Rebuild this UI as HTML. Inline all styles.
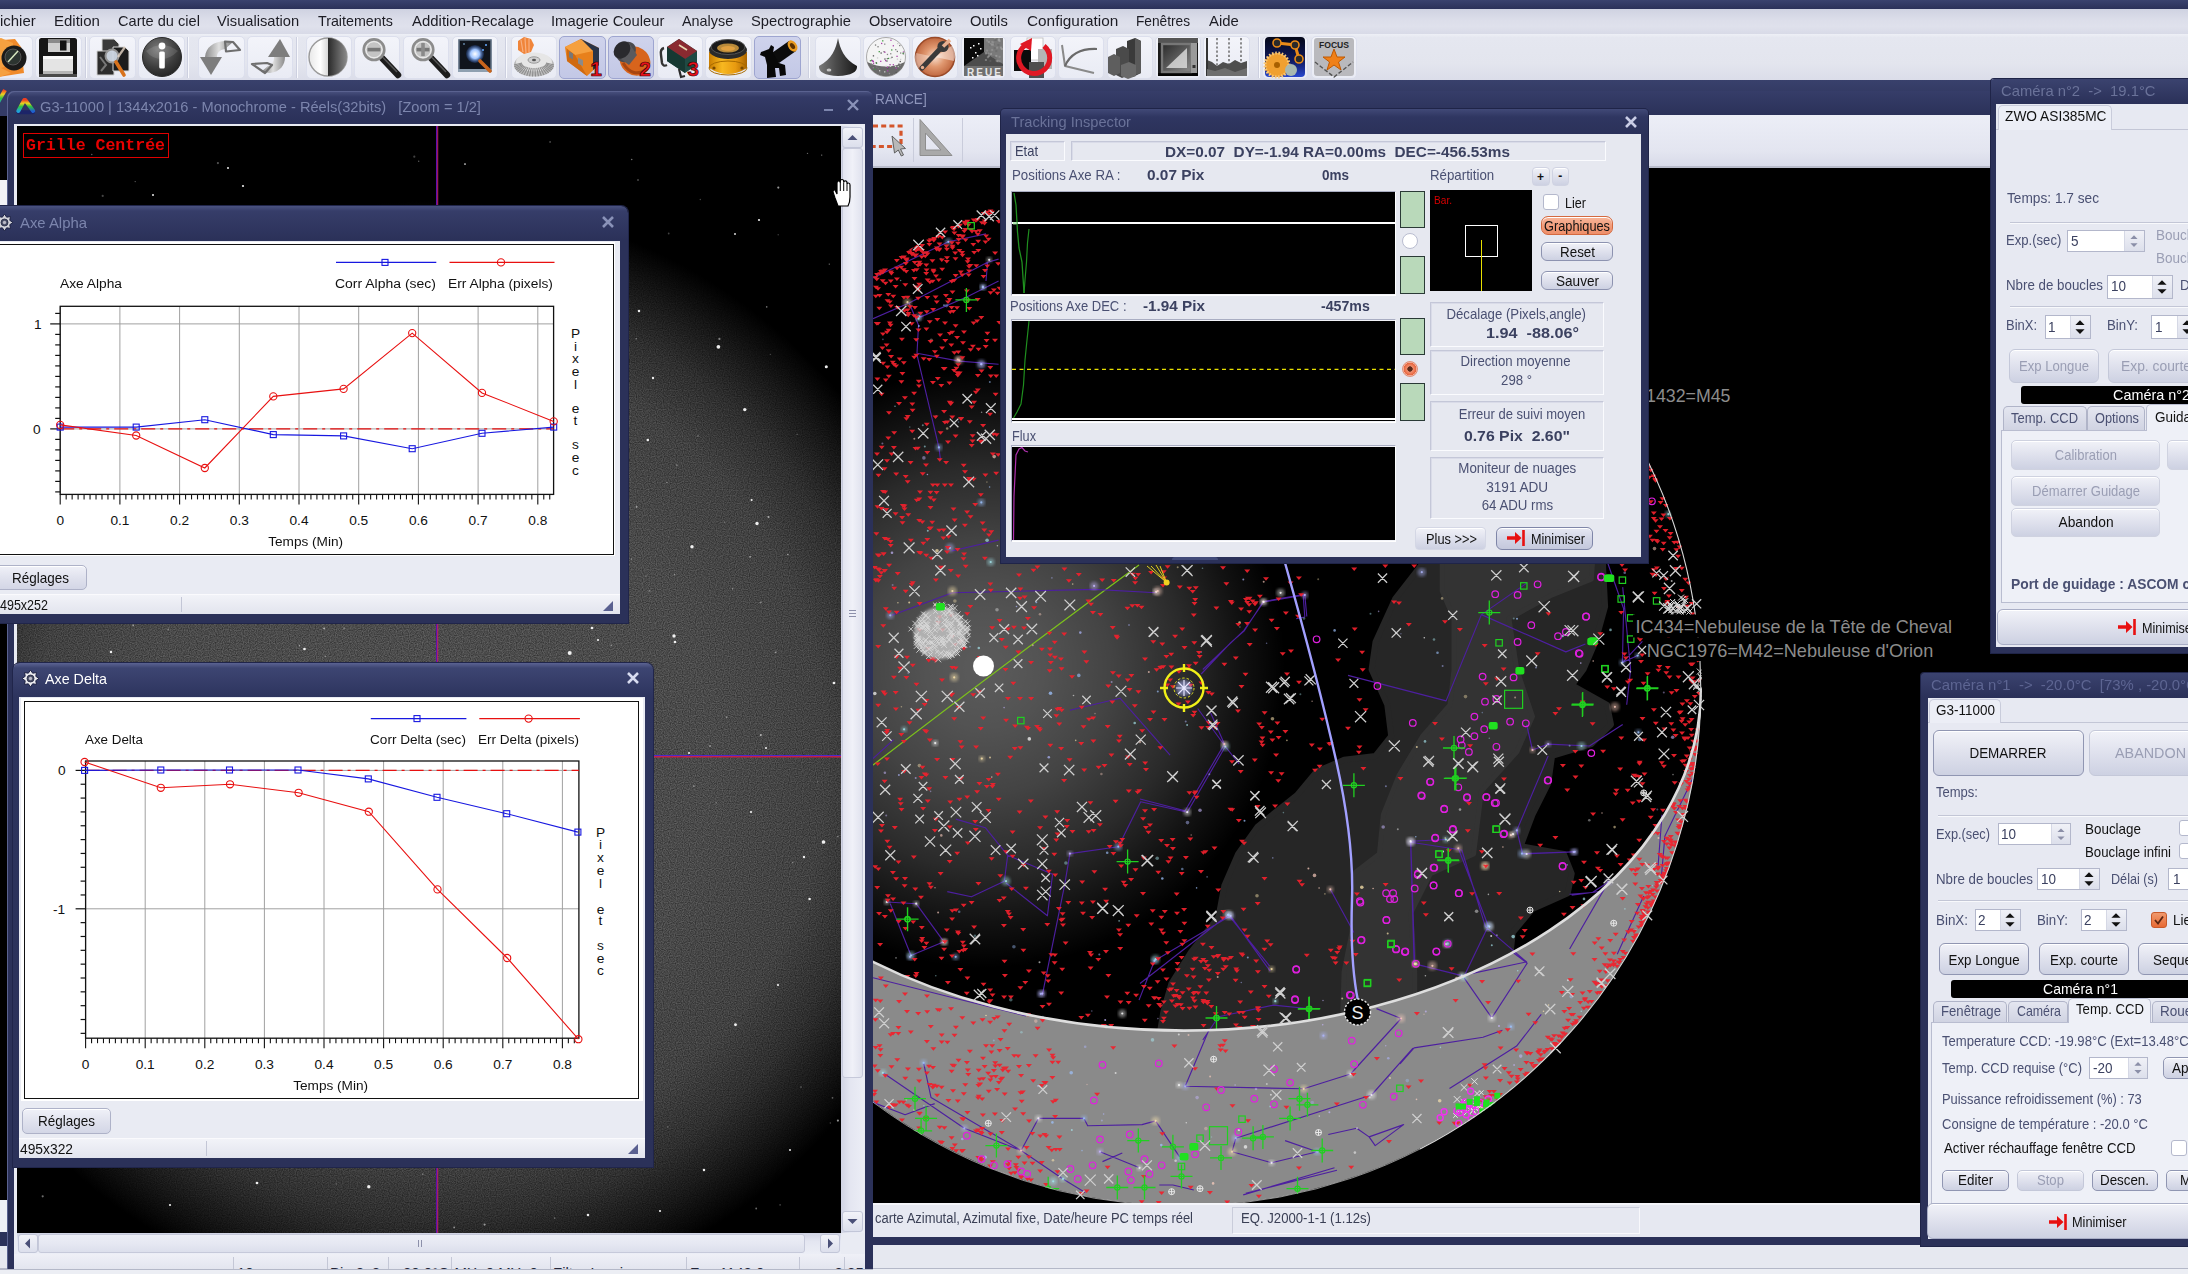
<!DOCTYPE html>
<html><head><meta charset="utf-8"><title>Prism</title><style>
html,body{margin:0;padding:0;}
html{overflow:hidden;width:2188px;height:1274px;}
body{width:2188px;height:1274px;overflow:hidden;background:#2b3159;font-family:"Liberation Sans",sans-serif;position:relative;}
.a{position:absolute;box-sizing:border-box;}
.t{position:absolute;white-space:pre;line-height:1.15;display:inline-block;}
svg{position:absolute;overflow:hidden;}
</style></head><body>
<!-- p_base -->
<div class="a" style="left:0px;top:0px;width:2188px;height:9px;background:linear-gradient(#3a426e,#2b3159);"></div>
<div class="a" style="left:0px;top:9px;width:2188px;height:25px;background:linear-gradient(#cfd2e1,#dcdeea 45%,#dfe1ec 70%,#d8dae7);"></div>
<span class="t" style="left:0px;top:11.5px;font-size:15px;color:#1c1c24;transform-origin:0 0;transform:scaleX(0.9959);">ichier</span>
<span class="t" style="left:53.5px;top:11.5px;font-size:15px;color:#1c1c24;transform-origin:0 0;transform:scaleX(1.0007);">Edition</span>
<span class="t" style="left:117.6px;top:11.5px;font-size:15px;color:#1c1c24;transform-origin:0 0;transform:scaleX(0.9725);">Carte du ciel</span>
<span class="t" style="left:217px;top:11.5px;font-size:15px;color:#1c1c24;transform-origin:0 0;transform:scaleX(0.9792);">Visualisation</span>
<span class="t" style="left:318px;top:11.5px;font-size:15px;color:#1c1c24;transform-origin:0 0;transform:scaleX(0.9511);">Traitements</span>
<span class="t" style="left:411.5px;top:11.5px;font-size:15px;color:#1c1c24;transform-origin:0 0;transform:scaleX(0.9952);">Addition-Recalage</span>
<span class="t" style="left:551px;top:11.5px;font-size:15px;color:#1c1c24;transform-origin:0 0;transform:scaleX(0.9864);">Imagerie Couleur</span>
<span class="t" style="left:682.3px;top:11.5px;font-size:15px;color:#1c1c24;transform-origin:0 0;transform:scaleX(0.9594);">Analyse</span>
<span class="t" style="left:751px;top:11.5px;font-size:15px;color:#1c1c24;transform-origin:0 0;transform:scaleX(0.9828);">Spectrographie</span>
<span class="t" style="left:868.6px;top:11.5px;font-size:15px;color:#1c1c24;transform-origin:0 0;transform:scaleX(0.9711);">Observatoire</span>
<span class="t" style="left:970px;top:11.5px;font-size:15px;color:#1c1c24;transform-origin:0 0;transform:scaleX(0.9858);">Outils</span>
<span class="t" style="left:1026.5px;top:11.5px;font-size:15px;color:#1c1c24;transform-origin:0 0;transform:scaleX(1.0231);">Configuration</span>
<span class="t" style="left:1136.2px;top:11.5px;font-size:15px;color:#1c1c24;transform-origin:0 0;transform:scaleX(0.9138);">Fenêtres</span>
<span class="t" style="left:1208.8px;top:11.5px;font-size:15px;color:#1c1c24;transform-origin:0 0;transform:scaleX(0.9926);">Aide</span>
<div class="a" style="left:0px;top:34px;width:2188px;height:46px;background:linear-gradient(#eef0f6,#e5e7f0 8%,#e3e5ee 65%,#dbdde9);"></div>
<div class="a" style="left:0px;top:80px;width:2188px;height:1188px;background:linear-gradient(#39416c,#2b3159 30px);"></div>
<div class="a" style="left:0px;top:1268px;width:2188px;height:6px;background:#eceef4;"></div>
<div class="a" style="left:0px;top:1268px;width:2188px;height:1px;background:#b4b8c8;"></div>
<!-- p_toolbar -->
<div class="a" style="left:84.5px;top:37px;width:1px;height:41px;background:#cdd0e0;"></div>
<div class="a" style="left:85.5px;top:37px;width:1px;height:41px;background:#f8f9fd;"></div>
<div class="a" style="left:186.5px;top:37px;width:1px;height:41px;background:#cdd0e0;"></div>
<div class="a" style="left:187.5px;top:37px;width:1px;height:41px;background:#f8f9fd;"></div>
<div class="a" style="left:295.5px;top:37px;width:1px;height:41px;background:#cdd0e0;"></div>
<div class="a" style="left:296.5px;top:37px;width:1px;height:41px;background:#f8f9fd;"></div>
<div class="a" style="left:505px;top:37px;width:1px;height:41px;background:#cdd0e0;"></div>
<div class="a" style="left:506px;top:37px;width:1px;height:41px;background:#f8f9fd;"></div>
<div class="a" style="left:808px;top:37px;width:1px;height:41px;background:#cdd0e0;"></div>
<div class="a" style="left:809px;top:37px;width:1px;height:41px;background:#f8f9fd;"></div>
<div class="a" style="left:1258px;top:37px;width:1px;height:41px;background:#cdd0e0;"></div>
<div class="a" style="left:1259px;top:37px;width:1px;height:41px;background:#f8f9fd;"></div>
<div class="a" style="left:-10px;top:36px;width:43px;height:43px;background:linear-gradient(#f3f4fa,#e9ebf4);border:1px solid #dcdfed;border-radius:5px;"></div>
<div class="a" style="left:35px;top:36px;width:47px;height:43px;background:linear-gradient(#f3f4fa,#e9ebf4);border:1px solid #dcdfed;border-radius:5px;"></div>
<div class="a" style="left:89px;top:36px;width:47px;height:43px;background:linear-gradient(#f3f4fa,#e9ebf4);border:1px solid #dcdfed;border-radius:5px;"></div>
<div class="a" style="left:138px;top:36px;width:47px;height:43px;background:linear-gradient(#f3f4fa,#e9ebf4);border:1px solid #dcdfed;border-radius:5px;"></div>
<div class="a" style="left:198px;top:36px;width:46.5px;height:43px;background:linear-gradient(#f3f4fa,#e9ebf4);border:1px solid #dcdfed;border-radius:5px;"></div>
<div class="a" style="left:246.7px;top:36px;width:46.3px;height:43px;background:linear-gradient(#f3f4fa,#e9ebf4);border:1px solid #dcdfed;border-radius:5px;"></div>
<div class="a" style="left:305.5px;top:36px;width:46.5px;height:43px;background:linear-gradient(#f3f4fa,#e9ebf4);border:1px solid #dcdfed;border-radius:5px;"></div>
<div class="a" style="left:354px;top:36px;width:46px;height:43px;background:linear-gradient(#f3f4fa,#e9ebf4);border:1px solid #dcdfed;border-radius:5px;"></div>
<div class="a" style="left:402.5px;top:36px;width:46.5px;height:43px;background:linear-gradient(#f3f4fa,#e9ebf4);border:1px solid #dcdfed;border-radius:5px;"></div>
<div class="a" style="left:452px;top:36px;width:46px;height:43px;background:linear-gradient(#f3f4fa,#e9ebf4);border:1px solid #dcdfed;border-radius:5px;"></div>
<div class="a" style="left:511px;top:36px;width:46px;height:43px;background:linear-gradient(#f3f4fa,#e9ebf4);border:1px solid #dcdfed;border-radius:5px;"></div>
<div class="a" style="left:559px;top:36px;width:47px;height:43px;background:linear-gradient(#cfd3ec,#c3c8e6);border:1px solid #9ea5d0;border-radius:5px;"></div>
<div class="a" style="left:608px;top:36px;width:46px;height:43px;background:linear-gradient(#cfd3ec,#c3c8e6);border:1px solid #9ea5d0;border-radius:5px;"></div>
<div class="a" style="left:657px;top:36px;width:46px;height:43px;background:linear-gradient(#f3f4fa,#e9ebf4);border:1px solid #dcdfed;border-radius:5px;"></div>
<div class="a" style="left:705px;top:36px;width:47px;height:43px;background:linear-gradient(#f3f4fa,#e9ebf4);border:1px solid #dcdfed;border-radius:5px;"></div>
<div class="a" style="left:754px;top:36px;width:47px;height:43px;background:linear-gradient(#cfd3ec,#c3c8e6);border:1px solid #9ea5d0;border-radius:5px;"></div>
<div class="a" style="left:815px;top:36px;width:46px;height:43px;background:linear-gradient(#f3f4fa,#e9ebf4);border:1px solid #dcdfed;border-radius:5px;"></div>
<div class="a" style="left:863px;top:36px;width:47px;height:43px;background:linear-gradient(#f3f4fa,#e9ebf4);border:1px solid #dcdfed;border-radius:5px;"></div>
<div class="a" style="left:912px;top:36px;width:46px;height:43px;background:linear-gradient(#f3f4fa,#e9ebf4);border:1px solid #dcdfed;border-radius:5px;"></div>
<div class="a" style="left:961px;top:36px;width:45px;height:43px;background:linear-gradient(#f3f4fa,#e9ebf4);border:1px solid #dcdfed;border-radius:5px;"></div>
<div class="a" style="left:1010px;top:36px;width:46px;height:43px;background:linear-gradient(#f3f4fa,#e9ebf4);border:1px solid #dcdfed;border-radius:5px;"></div>
<div class="a" style="left:1058px;top:36px;width:46px;height:43px;background:linear-gradient(#f3f4fa,#e9ebf4);border:1px solid #dcdfed;border-radius:5px;"></div>
<div class="a" style="left:1107px;top:36px;width:46px;height:43px;background:linear-gradient(#f3f4fa,#e9ebf4);border:1px solid #dcdfed;border-radius:5px;"></div>
<div class="a" style="left:1155px;top:36px;width:46px;height:43px;background:linear-gradient(#f3f4fa,#e9ebf4);border:1px solid #dcdfed;border-radius:5px;"></div>
<div class="a" style="left:1203px;top:36px;width:47px;height:43px;background:linear-gradient(#f3f4fa,#e9ebf4);border:1px solid #dcdfed;border-radius:5px;"></div>
<div class="a" style="left:1262px;top:36px;width:46px;height:43px;background:linear-gradient(#f3f4fa,#e9ebf4);border:1px solid #dcdfed;border-radius:5px;"></div>
<div class="a" style="left:1311px;top:36px;width:46px;height:43px;background:linear-gradient(#f3f4fa,#e9ebf4);border:1px solid #dcdfed;border-radius:5px;"></div>
<svg style="left:-9px;top:35px" width="44" height="44" viewBox="0 0 44 44"><path d="M0 6 L24 4 L30 12 L33 38 L8 42 L0 40 Z" fill="#f08a2a"/><path d="M0 6 L10 3 L22 8 L20 30 L0 36Z" fill="#f5a040"/><circle cx="23" cy="23" r="12.5" fill="#1a1a1a"/><circle cx="22" cy="22" r="8" fill="#2c3430" stroke="#555" stroke-width="1"/><path d="M17 27 L27 16" stroke="#d8e8c0" stroke-width="1.5"/><path d="M4 30 L20 38 L8 42 Z" fill="#f5a040"/></svg>
<svg style="left:36px;top:35px" width="44" height="44" viewBox="0 0 44 44"><rect x="3" y="3" width="38" height="39" rx="2.5" fill="#161616"/><rect x="12" y="4" width="22" height="13" fill="#cfcfcf"/><rect x="12" y="4" width="22" height="4" fill="#8a8a8a"/><rect x="24" y="5.5" width="6.5" height="10" fill="#111"/><rect x="7" y="21" width="30" height="18" fill="#e4e4e4"/><rect x="7" y="21" width="30" height="3" fill="#fafafa"/><rect x="7" y="36" width="30" height="3" fill="#b5b5b5"/><rect x="3" y="39" width="38" height="3" fill="#4a4a4a"/></svg>
<svg style="left:92px;top:35px" width="44" height="44" viewBox="0 0 44 44"><path d="M10 4 H22 L27 9 V18 H10 Z" fill="#3a3a3a" stroke="#d8d8d8" stroke-width="1"/><path d="M5 16 H22 V40 H5 Z" fill="#2d2d2d" stroke="#d0d0d0" stroke-width="1"/><path d="M21 12 H33 L37 16 V36 H21 Z" fill="#1c1c1c" stroke="#d8d8d8" stroke-width="1"/><circle cx="20" cy="21" r="6.5" fill="#cfd8e4" stroke="#999" stroke-width="2" opacity=".95"/><path d="M24 27 L32 40" stroke="#d8721c" stroke-width="3.6" stroke-linecap="round"/><path d="M26 22 L33 12" stroke="#e8d8c8" stroke-width="2.2" opacity=".8"/><path d="M8 22 L14 30 L9 36" stroke="#777" stroke-width="2" fill="none"/></svg>
<svg style="left:140px;top:35px" width="44" height="44" viewBox="0 0 44 44"><defs><radialGradient id="ig" cx=".4" cy=".3" r=".8"><stop offset="0" stop-color="#7a7a7a"/><stop offset=".6" stop-color="#3c3c3c"/><stop offset="1" stop-color="#1e1e1e"/></radialGradient></defs><circle cx="22" cy="22" r="19.5" fill="url(#ig)" stroke="#2a2a2a" stroke-width="1"/><path d="M6 16 Q22 4 38 16 Q30 24 22 24 Q12 24 6 16Z" fill="#fff" opacity=".12"/><circle cx="22" cy="11" r="3.4" fill="#fff"/><rect x="19.2" y="16.5" width="5.6" height="17" rx="1.5" fill="#fff"/></svg>
<svg style="left:199px;top:35px" width="44" height="44" viewBox="0 0 44 44"><defs><linearGradient id="ug" x1="0" x2="1"><stop offset="0" stop-color="#8a8a8a"/><stop offset=".5" stop-color="#e0e0e0"/><stop offset="1" stop-color="#7a7a7a"/></linearGradient></defs><path d="M1 22 L23 22 L12 40 Z" fill="#7d7d7d"/><path d="M6 22 C7 12 14 7 26 6 L34 7 L26 14 C20 15 18 18 18 22 Z" fill="url(#ug)"/><path d="M26 6.5 L34 7 L41 15 L27 16.5 Z" fill="none" stroke="#6e6e6e" stroke-width="2.2" stroke-linejoin="round"/></svg>
<svg style="left:248px;top:35px" width="44" height="44" viewBox="0 0 44 44"><defs><linearGradient id="rg" x1="0" x2="1"><stop offset="0" stop-color="#7a7a7a"/><stop offset=".5" stop-color="#e0e0e0"/><stop offset="1" stop-color="#8a8a8a"/></linearGradient></defs><path d="M20 22 L42 22 L32 4 Z" fill="#7d7d7d"/><path d="M26 22 C26 27 24 30 20 31 L13 37 L22 38 C32 37 37 30 37 22 Z" fill="url(#rg)"/><path d="M4 29 L19 28 L24 30 L17 38 Z" fill="none" stroke="#6e6e6e" stroke-width="2.2" stroke-linejoin="round"/></svg>
<svg style="left:306px;top:35px" width="44" height="44" viewBox="0 0 44 44"><defs><linearGradient id="cg1" x1="0" x2="1"><stop offset="0" stop-color="#e8e8e8"/><stop offset=".3" stop-color="#fff"/><stop offset=".5" stop-color="#d8d8d8"/></linearGradient><linearGradient id="cg2" x1="0" x2="1"><stop offset="0" stop-color="#2a2a2a"/><stop offset=".5" stop-color="#5a5a5a"/><stop offset="1" stop-color="#8a8a8a"/></linearGradient></defs><circle cx="22" cy="22" r="19" fill="url(#cg1)" stroke="#9a9a9a" stroke-width="1.4"/><path d="M22 3 A19 19 0 0 1 22 41 Z" fill="url(#cg2)"/></svg>
<svg style="left:360px;top:35px" width="44" height="44" viewBox="0 0 44 44"><path d="M22 23 L38 40" stroke="#1c1c1c" stroke-width="6.5" stroke-linecap="round"/><path d="M23 22.5 L37 37" stroke="#555" stroke-width="1.5"/><circle cx="14" cy="14.7" r="10.3" fill="#d9d9d9" stroke="#8c8c8c" stroke-width="2.6"/><circle cx="14" cy="14.7" r="8" fill="#c4c4c4" stroke="#eee" stroke-width="1"/><rect x="7.5" y="12.8" width="13" height="3.6" fill="#777"/></svg>
<svg style="left:409px;top:35px" width="44" height="44" viewBox="0 0 44 44"><path d="M22 23 L38 40" stroke="#1c1c1c" stroke-width="6.5" stroke-linecap="round"/><path d="M23 22.5 L37 37" stroke="#555" stroke-width="1.5"/><circle cx="14" cy="14.7" r="10.3" fill="#d9d9d9" stroke="#8c8c8c" stroke-width="2.6"/><circle cx="14" cy="14.7" r="8" fill="#c4c4c4" stroke="#eee" stroke-width="1"/><rect x="7.5" y="12.8" width="13" height="3.6" fill="#777"/><rect x="12.2" y="8" width="3.6" height="13" fill="#8a8a8a"/></svg>
<svg style="left:453px;top:35px" width="44" height="44" viewBox="0 0 44 44"><defs><radialGradient id="sz"><stop offset="0" stop-color="#fff"/><stop offset=".5" stop-color="#9fc4ff"/><stop offset="1" stop-color="#2850a0" stop-opacity=".3"/></radialGradient></defs><rect x="6" y="5" width="32" height="30" fill="#10141c" stroke="#5d6d80" stroke-width="1.6"/><rect x="5" y="34" width="34" height="3" fill="#8fa0b0"/><circle cx="22" cy="19" r="9" fill="url(#sz)"/><circle cx="33" cy="10" r="1" fill="#6af"/><circle cx="30" cy="15" r="1" fill="#6af"/><circle cx="11" cy="9" r=".8" fill="#9cf"/><path d="M27 26 L37 36" stroke="#c8641c" stroke-width="3.6" stroke-linecap="round"/></svg>
<svg style="left:512px;top:35px" width="44" height="44" viewBox="0 0 44 44"><ellipse cx="22" cy="30" rx="20" ry="11.5" fill="#bdbdbd"/><ellipse cx="22" cy="27" rx="18" ry="9.5" fill="#e6e6e6"/><path d="M34.0 28.0 L42.0 30.0" stroke="#8d8d8d" stroke-width="1.1"/><path d="M33.9 28.7 L41.8 31.7" stroke="#8d8d8d" stroke-width="1.1"/><path d="M33.5 29.5 L41.1 33.4" stroke="#8d8d8d" stroke-width="1.1"/><path d="M32.8 30.2 L40.0 35.0" stroke="#8d8d8d" stroke-width="1.1"/><path d="M31.9 30.8 L38.5 36.5" stroke="#8d8d8d" stroke-width="1.1"/><path d="M30.8 31.4 L36.7 37.8" stroke="#8d8d8d" stroke-width="1.1"/><path d="M29.5 31.9 L34.5 39.0" stroke="#8d8d8d" stroke-width="1.1"/><path d="M28.0 32.3 L32.0 40.0" stroke="#8d8d8d" stroke-width="1.1"/><path d="M26.4 32.7 L29.3 40.7" stroke="#8d8d8d" stroke-width="1.1"/><path d="M24.7 32.9 L26.5 41.2" stroke="#8d8d8d" stroke-width="1.1"/><path d="M22.9 33.0 L23.5 41.5" stroke="#8d8d8d" stroke-width="1.1"/><path d="M21.1 33.0 L20.5 41.5" stroke="#8d8d8d" stroke-width="1.1"/><path d="M19.3 32.9 L17.5 41.2" stroke="#8d8d8d" stroke-width="1.1"/><path d="M17.6 32.7 L14.7 40.7" stroke="#8d8d8d" stroke-width="1.1"/><path d="M16.0 32.3 L12.0 40.0" stroke="#8d8d8d" stroke-width="1.1"/><path d="M14.5 31.9 L9.5 39.0" stroke="#8d8d8d" stroke-width="1.1"/><path d="M13.2 31.4 L7.3 37.8" stroke="#8d8d8d" stroke-width="1.1"/><path d="M12.1 30.8 L5.5 36.5" stroke="#8d8d8d" stroke-width="1.1"/><path d="M11.2 30.2 L4.0 35.0" stroke="#8d8d8d" stroke-width="1.1"/><path d="M10.5 29.5 L2.9 33.4" stroke="#8d8d8d" stroke-width="1.1"/><path d="M10.1 28.7 L2.2 31.7" stroke="#8d8d8d" stroke-width="1.1"/><path d="M10.0 28.0 L2.0 30.0" stroke="#8d8d8d" stroke-width="1.1"/><ellipse cx="22" cy="25" rx="6" ry="3.2" fill="#d0d0d0" stroke="#9a9a9a"/><ellipse cx="22" cy="25" rx="2" ry="1.2" fill="#555"/><path d="M6 6 L12 2 L19 4 L22 10 L19 17 L12 19 L6 15 Z" fill="#f0853a"/><path d="M9 5 L11 17 M13 3 L14 18 M17 4 L17 17" stroke="#f8b080" stroke-width="1.2"/></svg>
<svg style="left:560px;top:35px" width="44" height="44" viewBox="0 0 44 44"><path d="M5 12 L21 4 L39 13 L39 30 L27 41 L7 26 Z" fill="#e8801c"/><path d="M21 4 L39 13 L39 30 L33 35 L33 16 L17 7Z" fill="#2a3448"/><path d="M5 12 L21 4 L33 16 L15 20 Z" fill="#f5a040"/><path d="M7 14 L15 20 L27 41 L7 26Z" fill="#d06a10"/><rect x="9" y="17" width="4" height="6" fill="#777" transform="skewY(30) translate(0,-6)"/><rect x="18" y="24" width="5" height="6" fill="#8a8a8a" transform="skewY(30) translate(0,-12)"/><text x="36" y="41" font-family="Liberation Sans" font-weight="bold" font-size="21" fill="#e8101c" stroke="#300" stroke-width=".7" text-anchor="middle">1</text></svg>
<svg style="left:609px;top:35px" width="44" height="44" viewBox="0 0 44 44"><ellipse cx="26" cy="26" rx="16" ry="14" fill="#d8641c" transform="rotate(35 26 26)"/><path d="M14 28 Q24 44 38 34" fill="none" stroke="#a84510" stroke-width="3"/><ellipse cx="17" cy="17" rx="9" ry="11" fill="#4a4a4e" transform="rotate(40 17 17)"/><path d="M9 22 L20 30 L28 20 L20 8Z" fill="#5a5a5e"/><ellipse cx="13" cy="15" rx="7.5" ry="9.5" fill="#2a2a2e" transform="rotate(40 13 15)"/><text x="36" y="41" font-family="Liberation Sans" font-weight="bold" font-size="21" fill="#e8101c" stroke="#300" stroke-width=".7" text-anchor="middle">2</text></svg>
<svg style="left:657px;top:35px" width="44" height="44" viewBox="0 0 44 44"><path d="M10 12 L22 4 L40 16 L40 30 L28 38 L10 26 Z" fill="#1f4a44"/><path d="M10 12 L22 4 L40 16 L28 24 Z" fill="#8a2a30"/><path d="M22 10 L30 15" stroke="#e8d8b0" stroke-width="1.6"/><path d="M10 12 L28 24 L28 38 L10 26Z" fill="#163832"/><path d="M7 13 Q3 14 4 20 L5 28 Q6 32 10 30" fill="none" stroke="#333" stroke-width="2.4"/><path d="M22 34 L24 42 L28 41" fill="none" stroke="#2a2a2a" stroke-width="2.2"/><text x="36" y="41" font-family="Liberation Sans" font-weight="bold" font-size="21" fill="#e8101c" stroke="#300" stroke-width=".7" text-anchor="middle">3</text></svg>
<svg style="left:706px;top:35px" width="44" height="44" viewBox="0 0 44 44"><defs><linearGradient id="fr" x1="0" x2="1"><stop offset="0" stop-color="#c87c00"/><stop offset=".35" stop-color="#f8b820"/><stop offset=".7" stop-color="#e89a10"/><stop offset="1" stop-color="#a86400"/></linearGradient></defs><path d="M3 17 V33 Q22 45 41 33 V17 Z" fill="url(#fr)"/><ellipse cx="22" cy="33" rx="19" ry="7" fill="none" stroke="#a86a00" stroke-width="1"/><ellipse cx="22" cy="15" rx="19" ry="9" fill="#2a2a2a"/><ellipse cx="22" cy="12" rx="17" ry="7.5" fill="#1a1a1a" stroke="#555" stroke-width="1"/><ellipse cx="22" cy="13" rx="11" ry="4.5" fill="#b88a3a"/><ellipse cx="22" cy="13.5" rx="7" ry="2.6" fill="#e0a040"/><circle cx="8" cy="33" r="1.6" fill="#7a4a00"/><circle cx="36" cy="33" r="1.6" fill="#7a4a00"/></svg>
<svg style="left:755px;top:35px" width="44" height="44" viewBox="0 0 44 44"><path d="M14 20 L34 6 L41 16 L24 28 Z" fill="#0c0c0c"/><ellipse cx="37.5" cy="11" rx="4.2" ry="6.2" fill="#e89a20" transform="rotate(-35 37.5 11)"/><ellipse cx="37.5" cy="11" rx="2" ry="3.4" fill="#5a3000" transform="rotate(-35 37.5 11)"/><path d="M6 17 L14 14 L16 10 L19 12 L18 18 L24 28 L30 30 L31 40 L25 41 L24 33 L20 33 L21 42 L12 43 L12 30 L10 22 L5 20 Z" fill="#080808"/></svg>
<svg style="left:816px;top:35px" width="44" height="44" viewBox="0 0 44 44"><defs><linearGradient id="cn" x1="0" x2="1"><stop offset="0" stop-color="#7a7a7a"/><stop offset=".45" stop-color="#4a4a4a"/><stop offset="1" stop-color="#1a1a1a"/></linearGradient></defs><path d="M22 3 C24 14 28 24 41 31 Q42 40 22 41 Q2 40 3 31 C16 24 20 14 22 3Z" fill="url(#cn)"/><ellipse cx="13" cy="35" rx="2.4" ry="1.6" fill="#ddd" opacity=".8"/></svg>
<svg style="left:864px;top:35px" width="44" height="44" viewBox="0 0 44 44"><circle cx="22" cy="22" r="19.5" fill="#f4f4f4" stroke="#aaa" stroke-width="1"/><path d="M3.2 27 Q22 36 40.8 27 A19.5 19.5 0 0 1 3.2 27Z" fill="#6a6a6a"/><rect x="23.0" y="35.2" width="1.3" height="1.3" fill="#a4a"/><rect x="32.7" y="15.8" width="1.3" height="1.3" fill="#777"/><rect x="23.9" y="22.8" width="1.3" height="1.3" fill="#494"/><rect x="21.5" y="30.7" width="1.3" height="1.3" fill="#ccc"/><rect x="5.8" y="25.1" width="1.3" height="1.3" fill="#494"/><rect x="8.7" y="32.1" width="1.3" height="1.3" fill="#888"/><rect x="10.9" y="9.4" width="1.3" height="1.3" fill="#777"/><rect x="20.3" y="23.4" width="1.3" height="1.3" fill="#555"/><rect x="31.5" y="36.8" width="1.3" height="1.3" fill="#555"/><rect x="21.0" y="25.0" width="1.3" height="1.3" fill="#a4a"/><rect x="7.0" y="24.6" width="1.3" height="1.3" fill="#494"/><rect x="18.1" y="5.2" width="1.3" height="1.3" fill="#494"/><rect x="20.1" y="8.5" width="1.3" height="1.3" fill="#888"/><rect x="26.1" y="18.1" width="1.3" height="1.3" fill="#888"/><rect x="12.9" y="22.3" width="1.3" height="1.3" fill="#ccc"/><rect x="8.9" y="27.6" width="1.3" height="1.3" fill="#a4a"/><rect x="7.5" y="29.8" width="1.3" height="1.3" fill="#777"/><rect x="13.8" y="33.1" width="1.3" height="1.3" fill="#777"/><rect x="23.2" y="32.4" width="1.3" height="1.3" fill="#555"/><rect x="33.1" y="7.9" width="1.3" height="1.3" fill="#ccc"/><rect x="17.0" y="7.8" width="1.3" height="1.3" fill="#a4a"/><rect x="38.7" y="18.2" width="1.3" height="1.3" fill="#777"/><rect x="33.6" y="30.9" width="1.3" height="1.3" fill="#ccc"/><rect x="28.7" y="10.1" width="1.3" height="1.3" fill="#a4a"/><rect x="30.9" y="30.8" width="1.3" height="1.3" fill="#ccc"/><rect x="27.3" y="21.7" width="1.3" height="1.3" fill="#555"/><rect x="16.1" y="25.7" width="1.3" height="1.3" fill="#a4a"/><rect x="11.6" y="27.1" width="1.3" height="1.3" fill="#555"/><rect x="35.6" y="25.9" width="1.3" height="1.3" fill="#555"/><rect x="12.1" y="31.6" width="1.3" height="1.3" fill="#777"/><rect x="35.1" y="9.9" width="1.3" height="1.3" fill="#777"/><rect x="22.3" y="25.4" width="1.3" height="1.3" fill="#555"/><rect x="34.3" y="28.5" width="1.3" height="1.3" fill="#555"/><rect x="38.8" y="16.4" width="1.3" height="1.3" fill="#a4a"/><rect x="16.5" y="17.4" width="1.3" height="1.3" fill="#555"/><rect x="32.4" y="20.7" width="1.3" height="1.3" fill="#a4a"/><rect x="38.5" y="17.6" width="1.3" height="1.3" fill="#494"/><rect x="10.0" y="33.7" width="1.3" height="1.3" fill="#494"/><rect x="13.4" y="11.1" width="1.3" height="1.3" fill="#777"/><rect x="36.2" y="32.7" width="1.3" height="1.3" fill="#777"/><rect x="20.1" y="36.2" width="1.3" height="1.3" fill="#ccc"/><rect x="22.8" y="31.8" width="1.3" height="1.3" fill="#a4a"/><rect x="8.8" y="20.2" width="1.3" height="1.3" fill="#555"/><rect x="26.3" y="4.6" width="1.3" height="1.3" fill="#a4a"/><rect x="36.0" y="23.8" width="1.3" height="1.3" fill="#ccc"/><rect x="31.6" y="32.6" width="1.3" height="1.3" fill="#a4a"/><rect x="7.5" y="25.1" width="1.3" height="1.3" fill="#a4a"/><rect x="14.6" y="16.0" width="1.3" height="1.3" fill="#494"/><rect x="26.4" y="22.6" width="1.3" height="1.3" fill="#ccc"/><rect x="32.8" y="23.5" width="1.3" height="1.3" fill="#ccc"/><rect x="8.7" y="25.8" width="1.3" height="1.3" fill="#a4a"/><rect x="25.4" y="29.0" width="1.3" height="1.3" fill="#a4a"/><rect x="27.1" y="14.3" width="1.3" height="1.3" fill="#494"/><rect x="34.8" y="31.9" width="1.3" height="1.3" fill="#777"/><rect x="19.4" y="16.0" width="1.3" height="1.3" fill="#777"/><rect x="24.8" y="37.9" width="1.3" height="1.3" fill="#888"/><rect x="15.0" y="35.1" width="1.3" height="1.3" fill="#ccc"/><rect x="20.2" y="16.6" width="1.3" height="1.3" fill="#a4a"/><rect x="36.0" y="17.4" width="1.3" height="1.3" fill="#888"/><rect x="6.6" y="28.3" width="1.3" height="1.3" fill="#888"/><rect x="35.6" y="29.5" width="1.3" height="1.3" fill="#888"/><rect x="31.1" y="14.0" width="1.3" height="1.3" fill="#888"/><rect x="22.8" y="18.8" width="1.3" height="1.3" fill="#888"/><rect x="15.4" y="37.1" width="1.3" height="1.3" fill="#777"/><rect x="25.9" y="30.7" width="1.3" height="1.3" fill="#ccc"/><rect x="34.2" y="29.3" width="1.3" height="1.3" fill="#777"/><rect x="28.7" y="29.1" width="1.3" height="1.3" fill="#a4a"/><rect x="8.0" y="25.2" width="1.3" height="1.3" fill="#a4a"/><rect x="11.9" y="27.6" width="1.3" height="1.3" fill="#494"/><rect x="22.7" y="23.0" width="1.3" height="1.3" fill="#777"/></svg>
<svg style="left:913px;top:35px" width="44" height="44" viewBox="0 0 44 44"><defs><radialGradient id="wd"><stop offset="0" stop-color="#f8e0d0"/><stop offset=".5" stop-color="#e09870"/><stop offset="1" stop-color="#c06840"/></radialGradient></defs><circle cx="22" cy="22" r="19.5" fill="url(#wd)" stroke="#9a4a28" stroke-width="1.6"/><path d="M22 22 L40 10 A19.5 19.5 0 0 1 41 26Z" fill="#fff" opacity=".45"/><path d="M22 22 L4 34 A19.5 19.5 0 0 1 3 18Z" fill="#fff" opacity=".35"/><path d="M9 33 L27 14" stroke="#3a3a3a" stroke-width="5" stroke-linecap="round"/><circle cx="30" cy="11.5" r="5.6" fill="#3a3a3a"/><path d="M30 11.5 L37 5" stroke="#e8b090" stroke-width="3.6"/><circle cx="9.5" cy="32.5" r="1.7" fill="#e8b090"/></svg>
<svg style="left:961.5px;top:35px" width="44" height="44" viewBox="0 0 44 44"><rect x="2" y="3" width="20" height="38" fill="#0a0a0a"/><rect x="22" y="3" width="19" height="38" fill="#7a7a7a"/><path d="M2 31 L22 17 L41 29 V41 H2Z" fill="#4c4c4c"/><path d="M2 31 H41 V41 H2Z" fill="#8d8d8d" opacity=".55"/><rect x="8" y="12" width="1.5" height="1.5" fill="#fff"/><rect x="11" y="10" width="1.5" height="1.5" fill="#fff"/><rect x="13" y="17" width="1.5" height="1.5" fill="#fff"/><rect x="16" y="8" width="1.5" height="1.5" fill="#fff"/><rect x="18" y="13" width="1.5" height="1.5" fill="#fff"/><rect x="10" y="22" width="1.5" height="1.5" fill="#fff"/><rect x="15" y="20" width="1.5" height="1.5" fill="#fff"/><rect x="38.8" y="13.0" width="2" height="2" fill="#aaa" opacity=".6"/><rect x="25.8" y="20.1" width="2" height="2" fill="#aaa" opacity=".6"/><rect x="34.7" y="25.2" width="2" height="2" fill="#aaa" opacity=".6"/><rect x="27.8" y="8.2" width="2" height="2" fill="#999" opacity=".6"/><rect x="36.6" y="25.3" width="2" height="2" fill="#999" opacity=".6"/><rect x="35.8" y="4.0" width="2" height="2" fill="#aaa" opacity=".6"/><rect x="30.7" y="7.6" width="2" height="2" fill="#666" opacity=".6"/><rect x="31.8" y="3.3" width="2" height="2" fill="#aaa" opacity=".6"/><rect x="24.1" y="14.6" width="2" height="2" fill="#999" opacity=".6"/><rect x="33.3" y="15.1" width="2" height="2" fill="#666" opacity=".6"/><rect x="22.9" y="24.0" width="2" height="2" fill="#999" opacity=".6"/><rect x="27.8" y="8.8" width="2" height="2" fill="#aaa" opacity=".6"/><rect x="30.1" y="21.0" width="2" height="2" fill="#666" opacity=".6"/><rect x="25.8" y="5.8" width="2" height="2" fill="#999" opacity=".6"/><rect x="24.9" y="21.2" width="2" height="2" fill="#999" opacity=".6"/><rect x="36.0" y="3.2" width="2" height="2" fill="#aaa" opacity=".6"/><rect x="31.7" y="12.2" width="2" height="2" fill="#666" opacity=".6"/><rect x="26.2" y="17.2" width="2" height="2" fill="#aaa" opacity=".6"/><rect x="29.2" y="13.9" width="2" height="2" fill="#999" opacity=".6"/><rect x="36.6" y="20.8" width="2" height="2" fill="#999" opacity=".6"/><rect x="24.1" y="4.6" width="2" height="2" fill="#999" opacity=".6"/><rect x="36.5" y="5.0" width="2" height="2" fill="#aaa" opacity=".6"/><rect x="30.3" y="6.6" width="2" height="2" fill="#999" opacity=".6"/><rect x="28.0" y="17.9" width="2" height="2" fill="#aaa" opacity=".6"/><rect x="27.2" y="9.1" width="2" height="2" fill="#666" opacity=".6"/><rect x="29.3" y="5.9" width="2" height="2" fill="#999" opacity=".6"/><rect x="34.2" y="11.7" width="2" height="2" fill="#999" opacity=".6"/><rect x="31.6" y="4.0" width="2" height="2" fill="#666" opacity=".6"/><rect x="32.3" y="21.0" width="2" height="2" fill="#666" opacity=".6"/><rect x="32.8" y="4.0" width="2" height="2" fill="#666" opacity=".6"/><rect x="22.9" y="17.4" width="2" height="2" fill="#aaa" opacity=".6"/><rect x="27.4" y="24.9" width="2" height="2" fill="#666" opacity=".6"/><rect x="29.8" y="8.6" width="2" height="2" fill="#aaa" opacity=".6"/><rect x="26.6" y="16.6" width="2" height="2" fill="#666" opacity=".6"/><rect x="25.8" y="6.0" width="2" height="2" fill="#999" opacity=".6"/><rect x="37.9" y="11.6" width="2" height="2" fill="#aaa" opacity=".6"/><rect x="35.4" y="9.0" width="2" height="2" fill="#666" opacity=".6"/><rect x="33.7" y="24.6" width="2" height="2" fill="#aaa" opacity=".6"/><rect x="33.3" y="23.4" width="2" height="2" fill="#666" opacity=".6"/><rect x="33.3" y="19.9" width="2" height="2" fill="#aaa" opacity=".6"/><text x="22" y="41" font-family="Liberation Sans" font-size="10" font-weight="bold" fill="#e8e8e8" text-anchor="middle" textLength="34">REUE</text></svg>
<svg style="left:1010.5px;top:35px" width="44" height="44" viewBox="0 0 44 44"><rect x="16" y="3" width="16" height="22" fill="#fff" stroke="#bbb" stroke-width=".8"/><rect x="3" y="15" width="17" height="21" fill="#0c0c0c"/><rect x="27" y="14" width="14" height="20" fill="#b4b4b4"/><rect x="18" y="27" width="15" height="16" fill="#4e4e4e"/><path d="M16.5 9 A15.5 15.5 0 1 0 33 11" fill="none" stroke="#e01824" stroke-width="5"/><path d="M9 9 L21 3 L20 16 Z" fill="#e01824"/></svg>
<svg style="left:1057px;top:35px" width="44" height="44" viewBox="0 0 44 44"><path d="M5 10 L8 31 L37 38" fill="none" stroke="#8a8a8a" stroke-width="2" stroke-linejoin="round"/><path d="M8 31 Q16 13 40 14" fill="none" stroke="#6a6a6a" stroke-width="2.2"/></svg>
<svg style="left:1105px;top:35px" width="44" height="44" viewBox="0 0 44 44"><path d="M22 6 L30 3 L36 6 V38 L28 42 L22 39Z" fill="#3a3a3a"/><path d="M30 3 L36 6 V38 L30 40Z" fill="#5a5a5a"/><path d="M11 14 L18 11 L24 14 V40 L17 43 L11 40Z" fill="#4a4a4a"/><path d="M3 22 L9 19 L15 22 V38 L9 41 L3 38Z" fill="#5e5e5e"/><path d="M16 30 L24 27 L31 30 V41 L23 44 L16 41Z" fill="#6a6a6a"/></svg>
<svg style="left:1155.7px;top:35px" width="44" height="44" viewBox="0 0 44 44"><defs><linearGradient id="fg" x1="0" y1="0" x2="1" y2="1"><stop offset="0" stop-color="#2a2a2a"/><stop offset="1" stop-color="#8a8a8a"/></linearGradient></defs><rect x="2" y="3" width="40" height="38" fill="#1a1a1a"/><rect x="2" y="3" width="40" height="5" fill="#555"/><rect x="2" y="38" width="40" height="3" fill="#050505"/><rect x="6" y="9" width="29" height="28" fill="url(#fg)" stroke="#777" stroke-width="2.4"/><path d="M10 33 L31 13 L31 33Z" fill="#e8e8e8" opacity=".75"/><rect x="35" y="8" width="6" height="30" fill="#9a9a9a"/><rect x="36.5" y="30" width="3" height="3" fill="#333"/></svg>
<svg style="left:1204.8px;top:35px" width="44" height="44" viewBox="0 0 44 44"><path d="M2 3 V41 H42 V26 L36 28 L30 25 L24 29 L18 27 L12 31 L7 27 L2 25Z" fill="#4e4e4e"/><path d="M2 3 V41" stroke="#333" stroke-width="2"/><path d="M12 3 V41 M24 3 V41 M36 3 V41" stroke="#555" stroke-width="1.3" stroke-dasharray="2.2,2"/><path d="M2 34 L10 36 L20 33 L30 37 L42 33 V41 H2Z" fill="#6e6e6e"/></svg>
<svg style="left:1263px;top:35px" width="44" height="44" viewBox="0 0 44 44"><defs><linearGradient id="ra" x1="0" y1="0" x2="0" y2="1"><stop offset="0" stop-color="#050818"/><stop offset=".6" stop-color="#101a60"/><stop offset="1" stop-color="#2848d0"/></linearGradient></defs><rect x="2" y="2" width="40" height="40" rx="4" fill="url(#ra)"/><circle cx="14" cy="30" r="12" fill="#f0a030"/><circle cx="14" cy="30" r="12" fill="none" stroke="#f8c878" stroke-width="3" stroke-dasharray="1.6,1.6"/><circle cx="14" cy="30" r="3" fill="#a86000"/><circle cx="28" cy="35" r="6" fill="#a8b8b0"/><path d="M14 8 L32 10 L36 24" fill="none" stroke="#e88a18" stroke-width="3"/><circle cx="14" cy="8" r="4" fill="#2a2a2a" stroke="#e88a18" stroke-width="1.6"/><circle cx="32" cy="10" r="4" fill="#2a2a2a" stroke="#e88a18" stroke-width="1.6"/><circle cx="36" cy="24" r="4" fill="#2a2a2a" stroke="#e88a18" stroke-width="1.6"/></svg>
<svg style="left:1312px;top:35px" width="44" height="44" viewBox="0 0 44 44"><rect x="2" y="3" width="40" height="38" rx="3" fill="#b9b9bd"/><text x="22" y="13" font-family="Liberation Sans" font-weight="bold" font-size="8.6" fill="#222" text-anchor="middle">FOCUS</text><path d="M22 14 L25 22 L33 22 L26.500 27 L29 35 L22 30 L15 35 L17.500 27 L11 22 L19 22Z" fill="#f08018" stroke="#c05800" stroke-width="1"/><path d="M3 27 L22 42 L41 27" fill="none" stroke="#555" stroke-width="1.4" stroke-dasharray="4,2"/></svg>
<!-- p_sky -->
<div class="a" style="left:866px;top:91px;width:1330px;height:24px;background:linear-gradient(#363d69,#2b3159);"></div>
<span class="t" style="left:874.6px;top:90.5px;font-size:14.5px;color:#8e95bb;transform-origin:0 0;transform:scaleX(0.9436);">RANCE]</span>
<div class="a" style="left:873px;top:115px;width:1320px;height:52px;background:linear-gradient(#eceef7,#e3e5f0 70%,#d8dae8);"></div>
<div class="a" style="left:873px;top:166px;width:1320px;height:2px;background:#b9bccb;"></div>
<div class="a" style="left:912.5px;top:118px;width:1px;height:44px;background:#c9ccdb;"></div>
<div class="a" style="left:961.5px;top:118px;width:1px;height:44px;background:#c9ccdb;"></div>
<svg style="left:873px;top:117px" width="90" height="46" viewBox="873 117 90 46"><path d="M873 126 H901 V146.5 H873" fill="none" stroke="#d4552b" stroke-width="3.2" stroke-dasharray="5,3.2"/><path d="M892 136 L905.5 148.5 L900.5 149 L903.5 155 L901.3 156 L898.3 150 L894.5 153 Z" fill="#b8b8b8" stroke="#555" stroke-width="0.9"/><path d="M920 119.5 L952 155.5 H920 Z M925.5 133 V150 H941 Z" fill="#a9a9a9" fill-rule="evenodd" stroke="#8e8e8e" stroke-width="1"/></svg>
<div class="a" style="left:873px;top:168px;width:1320px;height:1035px;background:#000;"></div>
<svg style="left:873px;top:168px" width="1315" height="1035" viewBox="873 168 1315 1035">
<defs><clipPath id="gc"><circle cx="1184" cy="688.6" r="518"/></clipPath>
<clipPath id="sk"><path d="M 667 688.6 A 517 517 0 0 1 1701 688.6 A 517 342 0 0 1 667 688.6 Z"/></clipPath>
<radialGradient id="moon"><stop offset="0" stop-color="#fff" stop-opacity=".36"/><stop offset=".2" stop-color="#fff" stop-opacity=".325"/><stop offset=".42" stop-color="#fff" stop-opacity=".265"/><stop offset=".67" stop-color="#fff" stop-opacity=".165"/><stop offset=".85" stop-color="#fff" stop-opacity=".07"/><stop offset="1" stop-color="#fff" stop-opacity="0"/></radialGradient>
<radialGradient id="sg"><stop offset="0" stop-color="#fff" stop-opacity=".9"/><stop offset=".3" stop-color="#fff" stop-opacity=".45"/><stop offset="1" stop-color="#fff" stop-opacity="0"/></radialGradient>
<filter id="bl"><feGaussianBlur stdDeviation="1.6"/></filter>
</defs>
<g clip-path="url(#gc)">
<g clip-path="url(#sk)"><polygon points="1422.6,563.5 1395.1,598.9 1375.5,642.0 1371.6,669.5 1387.3,704.8 1391.2,736.2 1375.5,755.9 1344.1,759.8 1316.6,771.6 1297.0,795.1 1257.7,826.5 1238.1,854.0 1224.4,885.4 1218.5,916.8 1191.0,952.1 1171.4,983.5 1163.5,1011.0 1159.6,1034.5 1336.2,1050.2 1510.9,971.7 1510.9,950.1 1512.8,932.5 1532.5,908.9 1567.8,893.2 1571.7,873.6 1563.9,854.0 1520.7,846.1 1532.5,814.7 1548.2,783.3 1552.1,755.9 1591.3,744.1 1611.0,724.5 1607.0,704.8 1571.7,685.2 1583.5,669.5 1595.3,642.0 1605.1,606.7 1603.1,567.5 1603.1,524.3 1422.6,524.3" fill="#262626" stroke="#262626" stroke-width="6" stroke-linejoin="round"/><polygon points="1442.2,524.3 1442.2,591.0 1454.0,618.5 1454.0,669.5 1450.0,704.8 1422.6,736.2 1399.0,775.5 1383.3,814.7 1379.4,854.0 1353.9,873.6 1351.9,932.5 1344.1,971.7 1342.1,1034.5 1414.7,1034.5 1414.7,971.7 1410.8,912.8 1430.4,873.6 1473.6,854.0 1481.4,791.2 1516.8,751.9 1532.5,716.6 1516.8,669.5 1508.9,618.5 1552.1,594.9 1591.3,579.2 1595.3,524.3" fill="#333" stroke="#333" stroke-width="5" stroke-linejoin="round"/></g>
<circle cx="985" cy="668" r="300" fill="url(#moon)"/>
<path d="M 667 688.6 A 517 517 0 0 0 1701 688.6 A 517 342 0 0 1 667 688.6 Z" fill="#8a8a8a"/>
<path d="M860 775 Q1010 660 1139 565" fill="none" stroke="#7cc01c" stroke-width="1.3"/>
<path d="M873.0 277.9 L948.4 241.8 L986.0 233.9M873.0 318.7 L909.1 303.0 L987.6 262.2 L998.6 259.1M920.1 317.1 L967.2 296.7 L998.6 281.0M909.1 303.0 L918.5 325.0 L917.0 353.2 L959.3 361.1 L998.6 364.2M987.6 262.2 L986.0 281.0M917.0 354.8 L938.9 447.4 L940.5 460.0M951.5 551.0 L998.6 540.1M892.0 615.3 L952.4 592.8 L1094.1 589.4 L1156.2 592.8M1069.9 710.3 L1120.0 698.2 L1170.1 755.2M1197.7 708.5 L1225.3 746.5 L1187.3 812.2 L1140.7 801.8 L1118.3 846.7 L1069.9 853.6M1225.3 746.5 L1239.1 763.8M1201.2 674.0 L1230.5 642.9 L1244.3 630.8 L1263.3 601.5 L1303.1 594.5 L1304.8 617.0 L1296.1 618.7M955.9 819.1 L985.3 827.7 L1007.7 855.3 L1004.3 881.2 L971.4 896.8 L947.3 891.6M1007.7 855.3 L1052.6 874.3 L1047.4 915.8 L1006.0 883.0M1069.9 853.6 L1064.7 884.7 L1042.3 995.2M886.8 902.0 L916.2 903.7 L943.8 941.7 L911.0 955.5 L890.3 903.7M1230.5 915.8 L1154.5 960.7 L1139.0 1000.1M1230.5 915.8 L1270.2 971.1M873.0 758.6 L893.7 739.6M1304.8 594.9 L1263.6 602.0 L1244.0 630.3 L1202.8 669.5M1304.8 594.9 L1306.8 616.5M1185.1 810.8 L1224.4 744.1 L1210.6 712.7M1140.0 799.0 L1185.1 810.8M1348.0 675.4 L1446.1 700.9 L1481.4 614.6 L1565.8 651.9 L1585.4 644.0M1481.4 614.6 L1526.6 583.2M1526.6 724.5 L1532.5 750.0 L1548.2 744.1 L1589.4 746.0 L1622.7 724.5M1548.2 755.9 L1516.8 830.4 L1522.7 854.0 L1573.7 852.0M1410.8 842.2 L1414.7 963.9 L1461.8 975.6 L1526.6 961.9 L1485.4 926.6 L1461.8 850.0 L1410.8 842.2M1330.3 889.3 L1353.9 932.5M1228.3 914.8 L1269.5 965.8M1140.0 983.5 L1228.3 914.8M1202.8 1040.0 L1218.5 1016.8 L1273.4 1005.1 L1312.7 1009.0M1622.7 587.1 L1630.6 669.5 L1626.7 704.8M1571.7 895.2 L1601.1 891.3M1662.0 814.7 L1658.1 865.7M873.0 977.7 L1026.0 1016.0M882.9 1072.8 L964.3 1128.3 L1021.1 1150.5 L1063.0 1178.9 L1085.2 1192.4M923.6 1062.9 L931.0 1097.4 L1021.1 1150.5M873.0 1102.4 L905.1 1114.7 L934.7 1103.6M1021.1 1150.5 L1038.4 1118.4 L1084.0 1118.4 L1087.7 1125.8 L1142.0 1124.6 L1155.6 1120.9 L1180.3 1157.9M1208.6 1030.8 L1185.2 1086.3 L1303.7 1088.8 L1350.5 1074.0 L1401.1 1018.5 L1376.5 1008.6M1235.8 1138.2 L1371.5 1095.0 L1413.0 1048.1M1235.8 1138.2 L1232.1 1151.7 L1271.6 1162.8 L1317.2 1151.7 L1285.1 1140.6M1328.3 1134.5 L1356.7 1128.3 L1369.1 1136.9 L1403.6 1124.6 L1375.2 1145.6 L1369.1 1136.9M1243.2 1194.9 L1334.5 1167.8M1245.7 1193.2 L1337.0 1170.2M1100.0 1151.7 L1139.5 1167.8M1122.3 1153.0 L1102.5 1161.6M1159.3 1185.0 L1172.9 1185.0 L1193.8 1190.0M1410.6 841.2 L1414.1 963.1M1410.6 841.2 L1445.9 839.5M1458.3 848.3 L1488.3 926.0 L1463.6 977.2 L1491.8 1017.9 L1527.2 963.1 L1513.0 952.5M1521.9 853.6 L1574.8 851.8M1569.6 949.0 L1608.4 881.9 L1592.5 892.5 L1569.6 894.2M1400.0 1063.8 L1414.1 1047.9 L1483.0 1037.3 L1502.4 1030.2M1449.5 1088.5 L1516.6 1046.1 L1541.3 1014.3M1617.2 954.3 L1643.7 896.0M1661.4 876.6 L1664.9 835.9 L1693.2 777.7M1607.1 561.3 L1623.6 608.5 L1622.4 662.6 L1637.7 655.6M1622.4 662.6 L1642.4 641.4" fill="none" stroke="#4d1fa0" stroke-width="1.15" stroke-linejoin="round"/>
<circle cx="909.9" cy="246.5" r="3.2" fill="#b0b8ff" opacity=".42" filter="url(#bl)"/><circle cx="909.9" cy="246.5" r="1.1" fill="#b0b8ff" opacity=".8"/>
<circle cx="989.2" cy="259.8" r="2.7" fill="#ffffff" opacity=".42" filter="url(#bl)"/><circle cx="989.2" cy="259.8" r="1.1" fill="#ffffff" opacity=".8"/>
<circle cx="982.9" cy="287.3" r="2.7" fill="#a8e8f0" opacity=".42" filter="url(#bl)"/><circle cx="982.9" cy="287.3" r="1.1" fill="#a8e8f0" opacity=".8"/>
<circle cx="907.5" cy="302.2" r="4.1" fill="#ffe8b0" opacity=".42" filter="url(#bl)"/><circle cx="907.5" cy="302.2" r="1.1" fill="#ffe8b0" opacity=".8"/>
<circle cx="919.3" cy="316.4" r="3.5" fill="#c8b8ff" opacity=".42" filter="url(#bl)"/><circle cx="919.3" cy="316.4" r="1.1" fill="#c8b8ff" opacity=".8"/>
<circle cx="948.4" cy="241.8" r="3.7" fill="#9fc4ff" opacity=".42" filter="url(#bl)"/><circle cx="948.4" cy="241.8" r="1.1" fill="#9fc4ff" opacity=".8"/>
<circle cx="959.3" cy="360.3" r="4.0" fill="#ffd0c0" opacity=".42" filter="url(#bl)"/><circle cx="959.3" cy="360.3" r="1.1" fill="#ffd0c0" opacity=".8"/>
<circle cx="981.3" cy="364.2" r="2.8" fill="#b0b8ff" opacity=".42" filter="url(#bl)"/><circle cx="981.3" cy="364.2" r="1.1" fill="#b0b8ff" opacity=".8"/>
<circle cx="982.9" cy="286.7" r="3.2" fill="#b0b8ff" opacity=".42" filter="url(#bl)"/><circle cx="982.9" cy="286.7" r="1.1" fill="#b0b8ff" opacity=".8"/>
<circle cx="918.5" cy="318.7" r="2.6" fill="#a8e8f0" opacity=".42" filter="url(#bl)"/><circle cx="918.5" cy="318.7" r="1.1" fill="#a8e8f0" opacity=".8"/>
<circle cx="957.8" cy="359.5" r="3.2" fill="#ffd0c0" opacity=".42" filter="url(#bl)"/><circle cx="957.8" cy="359.5" r="1.1" fill="#ffd0c0" opacity=".8"/>
<circle cx="981.3" cy="364.2" r="4.6" fill="#b0b8ff" opacity=".42" filter="url(#bl)"/><circle cx="981.3" cy="364.2" r="1.1" fill="#b0b8ff" opacity=".8"/>
<circle cx="938.9" cy="447.4" r="3.3" fill="#9fc4ff" opacity=".42" filter="url(#bl)"/><circle cx="938.9" cy="447.4" r="1.1" fill="#9fc4ff" opacity=".8"/>
<circle cx="981.3" cy="502.4" r="3.6" fill="#9fc4ff" opacity=".42" filter="url(#bl)"/><circle cx="981.3" cy="502.4" r="1.1" fill="#9fc4ff" opacity=".8"/>
<circle cx="949.9" cy="547.9" r="4.3" fill="#b0b8ff" opacity=".42" filter="url(#bl)"/><circle cx="949.9" cy="547.9" r="1.1" fill="#b0b8ff" opacity=".8"/>
<circle cx="990.7" cy="562.0" r="3.8" fill="#a8e8f0" opacity=".42" filter="url(#bl)"/><circle cx="990.7" cy="562.0" r="1.1" fill="#a8e8f0" opacity=".8"/>
<circle cx="890.3" cy="615.3" r="3.6" fill="#b0b8ff" opacity=".42" filter="url(#bl)"/><circle cx="890.3" cy="615.3" r="1.1" fill="#b0b8ff" opacity=".8"/>
<circle cx="952.4" cy="591.1" r="4.5" fill="#ffe8b0" opacity=".42" filter="url(#bl)"/><circle cx="952.4" cy="591.1" r="1.1" fill="#ffe8b0" opacity=".8"/>
<circle cx="1094.1" cy="585.9" r="4.2" fill="#c8b8ff" opacity=".42" filter="url(#bl)"/><circle cx="1094.1" cy="585.9" r="1.1" fill="#c8b8ff" opacity=".8"/>
<circle cx="1156.2" cy="591.8" r="3.1" fill="#ffffff" opacity=".42" filter="url(#bl)"/><circle cx="1156.2" cy="591.8" r="1.1" fill="#ffffff" opacity=".8"/>
<circle cx="1263.3" cy="601.5" r="2.8" fill="#ffd0c0" opacity=".42" filter="url(#bl)"/><circle cx="1263.3" cy="601.5" r="1.1" fill="#ffd0c0" opacity=".8"/>
<circle cx="1280.6" cy="592.8" r="4.1" fill="#ffffff" opacity=".42" filter="url(#bl)"/><circle cx="1280.6" cy="592.8" r="1.1" fill="#ffffff" opacity=".8"/>
<circle cx="1225.3" cy="746.5" r="4.2" fill="#a8e8f0" opacity=".42" filter="url(#bl)"/><circle cx="1225.3" cy="746.5" r="1.1" fill="#a8e8f0" opacity=".8"/>
<circle cx="1187.3" cy="812.2" r="3.7" fill="#ffffff" opacity=".42" filter="url(#bl)"/><circle cx="1187.3" cy="812.2" r="1.1" fill="#ffffff" opacity=".8"/>
<circle cx="1118.3" cy="846.7" r="3.9" fill="#9fc4ff" opacity=".42" filter="url(#bl)"/><circle cx="1118.3" cy="846.7" r="1.1" fill="#9fc4ff" opacity=".8"/>
<circle cx="1069.9" cy="853.6" r="2.8" fill="#c8b8ff" opacity=".42" filter="url(#bl)"/><circle cx="1069.9" cy="853.6" r="1.1" fill="#c8b8ff" opacity=".8"/>
<circle cx="1006.0" cy="881.2" r="4.4" fill="#a8e8f0" opacity=".42" filter="url(#bl)"/><circle cx="1006.0" cy="881.2" r="1.1" fill="#a8e8f0" opacity=".8"/>
<circle cx="916.2" cy="903.7" r="2.8" fill="#ffffff" opacity=".42" filter="url(#bl)"/><circle cx="916.2" cy="903.7" r="1.1" fill="#ffffff" opacity=".8"/>
<circle cx="886.8" cy="902.0" r="2.7" fill="#ffffff" opacity=".42" filter="url(#bl)"/><circle cx="886.8" cy="902.0" r="1.1" fill="#ffffff" opacity=".8"/>
<circle cx="943.8" cy="941.7" r="3.2" fill="#ffd0c0" opacity=".42" filter="url(#bl)"/><circle cx="943.8" cy="941.7" r="1.1" fill="#ffd0c0" opacity=".8"/>
<circle cx="911.0" cy="955.5" r="4.4" fill="#a8e8f0" opacity=".42" filter="url(#bl)"/><circle cx="911.0" cy="955.5" r="1.1" fill="#a8e8f0" opacity=".8"/>
<circle cx="981.8" cy="758.6" r="2.9" fill="#ffe8b0" opacity=".42" filter="url(#bl)"/><circle cx="981.8" cy="758.6" r="1.1" fill="#ffe8b0" opacity=".8"/>
<circle cx="935.2" cy="743.1" r="3.1" fill="#ffffff" opacity=".42" filter="url(#bl)"/><circle cx="935.2" cy="743.1" r="1.1" fill="#ffffff" opacity=".8"/>
<circle cx="904.1" cy="729.3" r="2.9" fill="#a8e8f0" opacity=".42" filter="url(#bl)"/><circle cx="904.1" cy="729.3" r="1.1" fill="#a8e8f0" opacity=".8"/>
<circle cx="954.2" cy="677.4" r="4.1" fill="#ffe8b0" opacity=".42" filter="url(#bl)"/><circle cx="954.2" cy="677.4" r="1.1" fill="#ffe8b0" opacity=".8"/>
<circle cx="1230.5" cy="915.8" r="3.8" fill="#b0b8ff" opacity=".42" filter="url(#bl)"/><circle cx="1230.5" cy="915.8" r="1.1" fill="#b0b8ff" opacity=".8"/>
<circle cx="1154.5" cy="960.7" r="3.3" fill="#9fc4ff" opacity=".42" filter="url(#bl)"/><circle cx="1154.5" cy="960.7" r="1.1" fill="#9fc4ff" opacity=".8"/>
<circle cx="1042.3" cy="993.5" r="3.6" fill="#c8b8ff" opacity=".42" filter="url(#bl)"/><circle cx="1042.3" cy="993.5" r="1.1" fill="#c8b8ff" opacity=".8"/>
<circle cx="1421.8" cy="572.2" r="4.3" fill="#b0b8ff" opacity=".42" filter="url(#bl)"/><circle cx="1421.8" cy="572.2" r="1.1" fill="#b0b8ff" opacity=".8"/>
<circle cx="1263.6" cy="602.0" r="3.7" fill="#ffffff" opacity=".42" filter="url(#bl)"/><circle cx="1263.6" cy="602.0" r="1.1" fill="#ffffff" opacity=".8"/>
<circle cx="1548.2" cy="744.1" r="2.9" fill="#c8b8ff" opacity=".42" filter="url(#bl)"/><circle cx="1548.2" cy="744.1" r="1.1" fill="#c8b8ff" opacity=".8"/>
<circle cx="1581.5" cy="746.0" r="4.0" fill="#a8e8f0" opacity=".42" filter="url(#bl)"/><circle cx="1581.5" cy="746.0" r="1.1" fill="#a8e8f0" opacity=".8"/>
<circle cx="1410.8" cy="842.2" r="3.8" fill="#c8b8ff" opacity=".42" filter="url(#bl)"/><circle cx="1410.8" cy="842.2" r="1.1" fill="#c8b8ff" opacity=".8"/>
<circle cx="1510.9" cy="835.1" r="3.3" fill="#ffd0c0" opacity=".42" filter="url(#bl)"/><circle cx="1510.9" cy="835.1" r="1.1" fill="#ffd0c0" opacity=".8"/>
<circle cx="1526.6" cy="854.0" r="4.4" fill="#ffffff" opacity=".42" filter="url(#bl)"/><circle cx="1526.6" cy="854.0" r="1.1" fill="#ffffff" opacity=".8"/>
<circle cx="1485.4" cy="865.7" r="3.6" fill="#ffd0c0" opacity=".42" filter="url(#bl)"/><circle cx="1485.4" cy="865.7" r="1.1" fill="#ffd0c0" opacity=".8"/>
<circle cx="1573.7" cy="852.0" r="3.2" fill="#c8b8ff" opacity=".42" filter="url(#bl)"/><circle cx="1573.7" cy="852.0" r="1.1" fill="#c8b8ff" opacity=".8"/>
<circle cx="1489.3" cy="926.6" r="4.3" fill="#ffffff" opacity=".42" filter="url(#bl)"/><circle cx="1489.3" cy="926.6" r="1.1" fill="#ffffff" opacity=".8"/>
<circle cx="1414.7" cy="963.9" r="2.9" fill="#ffe8b0" opacity=".42" filter="url(#bl)"/><circle cx="1414.7" cy="963.9" r="1.1" fill="#ffe8b0" opacity=".8"/>
<circle cx="1432.4" cy="965.8" r="4.5" fill="#ffd0c0" opacity=".42" filter="url(#bl)"/><circle cx="1432.4" cy="965.8" r="1.1" fill="#ffd0c0" opacity=".8"/>
<circle cx="1461.8" cy="975.6" r="3.3" fill="#ffffff" opacity=".42" filter="url(#bl)"/><circle cx="1461.8" cy="975.6" r="1.1" fill="#ffffff" opacity=".8"/>
<circle cx="1446.1" cy="944.2" r="3.3" fill="#ffe8b0" opacity=".42" filter="url(#bl)"/><circle cx="1446.1" cy="944.2" r="1.1" fill="#ffe8b0" opacity=".8"/>
<circle cx="1224.4" cy="744.1" r="3.3" fill="#ffd0c0" opacity=".42" filter="url(#bl)"/><circle cx="1224.4" cy="744.1" r="1.1" fill="#ffd0c0" opacity=".8"/>
<circle cx="1330.3" cy="889.3" r="3.1" fill="#ffd0c0" opacity=".42" filter="url(#bl)"/><circle cx="1330.3" cy="889.3" r="1.1" fill="#ffd0c0" opacity=".8"/>
<circle cx="1228.3" cy="914.8" r="4.6" fill="#ffffff" opacity=".42" filter="url(#bl)"/><circle cx="1228.3" cy="914.8" r="1.1" fill="#ffffff" opacity=".8"/>
<circle cx="1157.7" cy="591.0" r="4.5" fill="#ffd0c0" opacity=".42" filter="url(#bl)"/><circle cx="1157.7" cy="591.0" r="1.1" fill="#ffd0c0" opacity=".8"/>
<circle cx="1638.4" cy="732.3" r="3.0" fill="#9fc4ff" opacity=".42" filter="url(#bl)"/><circle cx="1638.4" cy="732.3" r="1.1" fill="#9fc4ff" opacity=".8"/>
<circle cx="1614.9" cy="706.8" r="4.6" fill="#ffd0c0" opacity=".42" filter="url(#bl)"/><circle cx="1614.9" cy="706.8" r="1.1" fill="#ffd0c0" opacity=".8"/>
<circle cx="1516.8" cy="830.4" r="3.2" fill="#b0b8ff" opacity=".42" filter="url(#bl)"/><circle cx="1516.8" cy="830.4" r="1.1" fill="#b0b8ff" opacity=".8"/>
<circle cx="1304.8" cy="594.9" r="3.5" fill="#c8b8ff" opacity=".42" filter="url(#bl)"/><circle cx="1304.8" cy="594.9" r="1.1" fill="#c8b8ff" opacity=".8"/>
<circle cx="1532.5" cy="750.0" r="2.8" fill="#ffd0c0" opacity=".42" filter="url(#bl)"/><circle cx="1532.5" cy="750.0" r="1.1" fill="#ffd0c0" opacity=".8"/>
<circle cx="1510.9" cy="1026.7" r="3.2" fill="#9fc4ff" opacity=".42" filter="url(#bl)"/><circle cx="1510.9" cy="1026.7" r="1.1" fill="#9fc4ff" opacity=".8"/>
<circle cx="882.9" cy="1072.8" r="3.5" fill="#a8e8f0" opacity=".42" filter="url(#bl)"/><circle cx="882.9" cy="1072.8" r="1.1" fill="#a8e8f0" opacity=".8"/>
<circle cx="923.6" cy="1062.9" r="3.4" fill="#9fc4ff" opacity=".42" filter="url(#bl)"/><circle cx="923.6" cy="1062.9" r="1.1" fill="#9fc4ff" opacity=".8"/>
<circle cx="964.3" cy="1128.3" r="3.5" fill="#b0b8ff" opacity=".42" filter="url(#bl)"/><circle cx="964.3" cy="1128.3" r="1.1" fill="#b0b8ff" opacity=".8"/>
<circle cx="1021.1" cy="1150.5" r="3.6" fill="#ffd0c0" opacity=".42" filter="url(#bl)"/><circle cx="1021.1" cy="1150.5" r="1.1" fill="#ffd0c0" opacity=".8"/>
<circle cx="1038.4" cy="1118.4" r="3.2" fill="#ffffff" opacity=".42" filter="url(#bl)"/><circle cx="1038.4" cy="1118.4" r="1.1" fill="#ffffff" opacity=".8"/>
<circle cx="1084.0" cy="1118.4" r="2.9" fill="#9fc4ff" opacity=".42" filter="url(#bl)"/><circle cx="1084.0" cy="1118.4" r="1.1" fill="#9fc4ff" opacity=".8"/>
<circle cx="1155.6" cy="1120.9" r="4.1" fill="#ffe8b0" opacity=".42" filter="url(#bl)"/><circle cx="1155.6" cy="1120.9" r="1.1" fill="#ffe8b0" opacity=".8"/>
<circle cx="1180.3" cy="1157.9" r="4.1" fill="#9fc4ff" opacity=".42" filter="url(#bl)"/><circle cx="1180.3" cy="1157.9" r="1.1" fill="#9fc4ff" opacity=".8"/>
<circle cx="1185.2" cy="1086.3" r="3.5" fill="#b0b8ff" opacity=".42" filter="url(#bl)"/><circle cx="1185.2" cy="1086.3" r="1.1" fill="#b0b8ff" opacity=".8"/>
<circle cx="1303.7" cy="1088.8" r="3.8" fill="#ffe8b0" opacity=".42" filter="url(#bl)"/><circle cx="1303.7" cy="1088.8" r="1.1" fill="#ffe8b0" opacity=".8"/>
<circle cx="1350.5" cy="1074.0" r="3.4" fill="#ffffff" opacity=".42" filter="url(#bl)"/><circle cx="1350.5" cy="1074.0" r="1.1" fill="#ffffff" opacity=".8"/>
<circle cx="1401.1" cy="1018.5" r="3.9" fill="#ffd0c0" opacity=".42" filter="url(#bl)"/><circle cx="1401.1" cy="1018.5" r="1.1" fill="#ffd0c0" opacity=".8"/>
<circle cx="1371.5" cy="1095.0" r="4.4" fill="#ffffff" opacity=".42" filter="url(#bl)"/><circle cx="1371.5" cy="1095.0" r="1.1" fill="#ffffff" opacity=".8"/>
<circle cx="1235.8" cy="1138.2" r="3.9" fill="#b0b8ff" opacity=".42" filter="url(#bl)"/><circle cx="1235.8" cy="1138.2" r="1.1" fill="#b0b8ff" opacity=".8"/>
<circle cx="1232.1" cy="1151.7" r="4.3" fill="#ffe8b0" opacity=".42" filter="url(#bl)"/><circle cx="1232.1" cy="1151.7" r="1.1" fill="#ffe8b0" opacity=".8"/>
<circle cx="1271.6" cy="1162.8" r="3.0" fill="#ffffff" opacity=".42" filter="url(#bl)"/><circle cx="1271.6" cy="1162.8" r="1.1" fill="#ffffff" opacity=".8"/>
<circle cx="1317.2" cy="1151.7" r="3.5" fill="#9fc4ff" opacity=".42" filter="url(#bl)"/><circle cx="1317.2" cy="1151.7" r="1.1" fill="#9fc4ff" opacity=".8"/>
<circle cx="1100.0" cy="1151.7" r="3.1" fill="#c8b8ff" opacity=".42" filter="url(#bl)"/><circle cx="1100.0" cy="1151.7" r="1.1" fill="#c8b8ff" opacity=".8"/>
<circle cx="1139.5" cy="1167.8" r="2.8" fill="#ffffff" opacity=".42" filter="url(#bl)"/><circle cx="1139.5" cy="1167.8" r="1.1" fill="#ffffff" opacity=".8"/>
<circle cx="1063.0" cy="1178.9" r="3.1" fill="#a8e8f0" opacity=".42" filter="url(#bl)"/><circle cx="1063.0" cy="1178.9" r="1.1" fill="#a8e8f0" opacity=".8"/>
<circle cx="1053.2" cy="1181.3" r="4.0" fill="#a8e8f0" opacity=".42" filter="url(#bl)"/><circle cx="1053.2" cy="1181.3" r="1.1" fill="#a8e8f0" opacity=".8"/>
<circle cx="1179.0" cy="1085.1" r="2.9" fill="#ffffff" opacity=".42" filter="url(#bl)"/><circle cx="1179.0" cy="1085.1" r="1.1" fill="#ffffff" opacity=".8"/>
<circle cx="1323.4" cy="1035.7" r="3.4" fill="#b0b8ff" opacity=".42" filter="url(#bl)"/><circle cx="1323.4" cy="1035.7" r="1.1" fill="#b0b8ff" opacity=".8"/>
<circle cx="1275.3" cy="1001.2" r="2.6" fill="#a8e8f0" opacity=".42" filter="url(#bl)"/><circle cx="1275.3" cy="1001.2" r="1.1" fill="#a8e8f0" opacity=".8"/>
<circle cx="1040.8" cy="993.8" r="3.4" fill="#b0b8ff" opacity=".42" filter="url(#bl)"/><circle cx="1040.8" cy="993.8" r="1.1" fill="#b0b8ff" opacity=".8"/>
<circle cx="1122.3" cy="1013.5" r="3.9" fill="#ffffff" opacity=".42" filter="url(#bl)"/><circle cx="1122.3" cy="1013.5" r="1.1" fill="#ffffff" opacity=".8"/>
<circle cx="910.0" cy="956.8" r="3.0" fill="#b0b8ff" opacity=".42" filter="url(#bl)"/><circle cx="910.0" cy="956.8" r="1.1" fill="#b0b8ff" opacity=".8"/>
<circle cx="944.6" cy="942.0" r="3.3" fill="#ffffff" opacity=".42" filter="url(#bl)"/><circle cx="944.6" cy="942.0" r="1.1" fill="#ffffff" opacity=".8"/>
<circle cx="955.7" cy="956.8" r="3.4" fill="#9fc4ff" opacity=".42" filter="url(#bl)"/><circle cx="955.7" cy="956.8" r="1.1" fill="#9fc4ff" opacity=".8"/>
<circle cx="1155.6" cy="959.2" r="4.4" fill="#a8e8f0" opacity=".42" filter="url(#bl)"/><circle cx="1155.6" cy="959.2" r="1.1" fill="#a8e8f0" opacity=".8"/>
<circle cx="1228.4" cy="914.8" r="2.7" fill="#9fc4ff" opacity=".42" filter="url(#bl)"/><circle cx="1228.4" cy="914.8" r="1.1" fill="#9fc4ff" opacity=".8"/>
<circle cx="1271.6" cy="969.1" r="3.0" fill="#ffe8b0" opacity=".42" filter="url(#bl)"/><circle cx="1271.6" cy="969.1" r="1.1" fill="#ffe8b0" opacity=".8"/>
<circle cx="1410.6" cy="841.2" r="4.2" fill="#ffffff" opacity=".42" filter="url(#bl)"/><circle cx="1410.6" cy="841.2" r="1.1" fill="#ffffff" opacity=".8"/>
<circle cx="1458.3" cy="848.3" r="3.6" fill="#ffd0c0" opacity=".42" filter="url(#bl)"/><circle cx="1458.3" cy="848.3" r="1.1" fill="#ffd0c0" opacity=".8"/>
<circle cx="1488.3" cy="926.0" r="4.3" fill="#9fc4ff" opacity=".42" filter="url(#bl)"/><circle cx="1488.3" cy="926.0" r="1.1" fill="#9fc4ff" opacity=".8"/>
<circle cx="1463.6" cy="977.2" r="3.7" fill="#a8e8f0" opacity=".42" filter="url(#bl)"/><circle cx="1463.6" cy="977.2" r="1.1" fill="#a8e8f0" opacity=".8"/>
<circle cx="1491.8" cy="1017.9" r="3.6" fill="#ffffff" opacity=".42" filter="url(#bl)"/><circle cx="1491.8" cy="1017.9" r="1.1" fill="#ffffff" opacity=".8"/>
<circle cx="1521.9" cy="853.6" r="3.9" fill="#9fc4ff" opacity=".42" filter="url(#bl)"/><circle cx="1521.9" cy="853.6" r="1.1" fill="#9fc4ff" opacity=".8"/>
<circle cx="1574.8" cy="851.8" r="3.3" fill="#b0b8ff" opacity=".42" filter="url(#bl)"/><circle cx="1574.8" cy="851.8" r="1.1" fill="#b0b8ff" opacity=".8"/>
<circle cx="1608.4" cy="881.9" r="3.4" fill="#c8b8ff" opacity=".42" filter="url(#bl)"/><circle cx="1608.4" cy="881.9" r="1.1" fill="#c8b8ff" opacity=".8"/>
<circle cx="1445.9" cy="839.5" r="3.0" fill="#a8e8f0" opacity=".42" filter="url(#bl)"/><circle cx="1445.9" cy="839.5" r="1.1" fill="#a8e8f0" opacity=".8"/>
<circle cx="1513.0" cy="834.2" r="3.0" fill="#ffffff" opacity=".42" filter="url(#bl)"/><circle cx="1513.0" cy="834.2" r="1.1" fill="#ffffff" opacity=".8"/>
<circle cx="1484.8" cy="866.0" r="4.1" fill="#ffe8b0" opacity=".42" filter="url(#bl)"/><circle cx="1484.8" cy="866.0" r="1.1" fill="#ffe8b0" opacity=".8"/>
<circle cx="1447.7" cy="943.7" r="4.1" fill="#9fc4ff" opacity=".42" filter="url(#bl)"/><circle cx="1447.7" cy="943.7" r="1.1" fill="#9fc4ff" opacity=".8"/>
<circle cx="1415.9" cy="963.8" r="3.3" fill="#ffe8b0" opacity=".42" filter="url(#bl)"/><circle cx="1415.9" cy="963.8" r="1.1" fill="#ffe8b0" opacity=".8"/>
<circle cx="1622.4" cy="662.6" r="3.1" fill="#9fc4ff" opacity=".42" filter="url(#bl)"/><circle cx="1622.4" cy="662.6" r="1.1" fill="#9fc4ff" opacity=".8"/>
<circle cx="1668.4" cy="514.2" r="3.4" fill="#a8e8f0" opacity=".42" filter="url(#bl)"/><circle cx="1668.4" cy="514.2" r="1.1" fill="#a8e8f0" opacity=".8"/>
<circle cx="1637.7" cy="655.6" r="2.8" fill="#9fc4ff" opacity=".42" filter="url(#bl)"/><circle cx="1637.7" cy="655.6" r="1.1" fill="#9fc4ff" opacity=".8"/>
<circle cx="1106.0" cy="1026.6" r="1.8" fill="#a8e8f0" opacity="0.63"/>
<circle cx="1315.8" cy="1151.5" r="1.3" fill="#c8b8ff" opacity="0.46"/>
<circle cx="1263.7" cy="581.8" r="1.0" fill="#ffd0c0" opacity="0.65"/>
<circle cx="986.0" cy="1015.5" r="0.8" fill="#ffe8b0" opacity="0.75"/>
<circle cx="1370.5" cy="613.7" r="1.0" fill="#a8e8f0" opacity="0.43"/>
<circle cx="991.8" cy="777.1" r="0.8" fill="#ffd0c0" opacity="0.67"/>
<circle cx="1488.4" cy="894.4" r="0.8" fill="#ffffff" opacity="0.54"/>
<circle cx="919.4" cy="765.6" r="1.8" fill="#ffe8b0" opacity="0.44"/>
<circle cx="1210.1" cy="1076.5" r="1.0" fill="#ffd0c0" opacity="0.62"/>
<circle cx="1099.3" cy="954.5" r="1.0" fill="#b0b8ff" opacity="0.54"/>
<circle cx="1457.6" cy="764.1" r="1.3" fill="#c8b8ff" opacity="0.61"/>
<circle cx="1385.9" cy="786.2" r="1.0" fill="#b0b8ff" opacity="0.49"/>
<circle cx="1266.6" cy="643.3" r="0.8" fill="#b0b8ff" opacity="0.46"/>
<circle cx="1157.2" cy="858.3" r="1.8" fill="#a8e8f0" opacity="0.45"/>
<circle cx="1065.9" cy="863.0" r="1.8" fill="#a8e8f0" opacity="0.42"/>
<circle cx="1071.2" cy="1072.7" r="1.8" fill="#9fc4ff" opacity="0.67"/>
<circle cx="1235.1" cy="1085.0" r="0.8" fill="#c8b8ff" opacity="0.61"/>
<circle cx="1514.1" cy="1065.0" r="1.0" fill="#c8b8ff" opacity="0.54"/>
<circle cx="954.9" cy="601.0" r="1.8" fill="#ffe8b0" opacity="0.38"/>
<circle cx="1038.0" cy="1085.9" r="0.8" fill="#c8b8ff" opacity="0.72"/>
<circle cx="908.3" cy="673.1" r="1.0" fill="#b0b8ff" opacity="0.37"/>
<circle cx="1048.8" cy="757.2" r="1.3" fill="#b0b8ff" opacity="0.71"/>
<circle cx="1652.5" cy="885.6" r="0.8" fill="#b0b8ff" opacity="0.56"/>
<circle cx="1200.0" cy="810.2" r="1.8" fill="#c8b8ff" opacity="0.58"/>
<circle cx="1597.1" cy="978.1" r="0.8" fill="#ffffff" opacity="0.43"/>
<circle cx="1571.2" cy="996.6" r="1.8" fill="#9fc4ff" opacity="0.47"/>
<circle cx="1072.7" cy="584.1" r="0.8" fill="#ffe8b0" opacity="0.58"/>
<circle cx="882.9" cy="339.4" r="0.8" fill="#b0b8ff" opacity="0.42"/>
<circle cx="927.8" cy="530.8" r="1.0" fill="#a8e8f0" opacity="0.66"/>
<circle cx="1148.8" cy="671.9" r="1.0" fill="#ffd0c0" opacity="0.67"/>
<circle cx="1213.1" cy="1183.4" r="1.3" fill="#ffd0c0" opacity="0.71"/>
<circle cx="1559.7" cy="891.5" r="0.8" fill="#ffe8b0" opacity="0.62"/>
<circle cx="937.0" cy="550.8" r="1.8" fill="#ffe8b0" opacity="0.69"/>
<circle cx="1217.7" cy="977.1" r="1.0" fill="#ffd0c0" opacity="0.63"/>
<circle cx="1548.6" cy="1005.1" r="0.8" fill="#ffe8b0" opacity="0.65"/>
<circle cx="1513.2" cy="936.6" r="1.8" fill="#a8e8f0" opacity="0.70"/>
<circle cx="901.4" cy="706.8" r="0.8" fill="#ffe8b0" opacity="0.46"/>
<circle cx="935.0" cy="887.7" r="0.8" fill="#ffd0c0" opacity="0.54"/>
<circle cx="1656.0" cy="634.0" r="0.8" fill="#ffe8b0" opacity="0.54"/>
<circle cx="1654.5" cy="548.6" r="1.8" fill="#ffd0c0" opacity="0.55"/>
<circle cx="895.0" cy="406.2" r="0.8" fill="#a8e8f0" opacity="0.57"/>
<circle cx="1312.3" cy="1102.5" r="1.8" fill="#b0b8ff" opacity="0.35"/>
<circle cx="1536.0" cy="667.4" r="1.0" fill="#b0b8ff" opacity="0.54"/>
<circle cx="1342.2" cy="998.4" r="1.0" fill="#ffe8b0" opacity="0.62"/>
<circle cx="1442.6" cy="665.9" r="1.0" fill="#b0b8ff" opacity="0.50"/>
<circle cx="1010.8" cy="999.7" r="1.8" fill="#a8e8f0" opacity="0.38"/>
<circle cx="1671.7" cy="580.9" r="1.0" fill="#ffffff" opacity="0.60"/>
<circle cx="1082.0" cy="1150.6" r="0.8" fill="#9fc4ff" opacity="0.59"/>
<circle cx="1029.3" cy="738.9" r="1.8" fill="#ffffff" opacity="0.72"/>
<circle cx="1670.9" cy="843.4" r="0.8" fill="#c8b8ff" opacity="0.55"/>
<circle cx="1211.5" cy="1137.0" r="0.8" fill="#a8e8f0" opacity="0.36"/>
<circle cx="1115.6" cy="1073.0" r="1.0" fill="#ffffff" opacity="0.60"/>
<circle cx="927.4" cy="474.5" r="0.8" fill="#c8b8ff" opacity="0.69"/>
<circle cx="915.7" cy="778.0" r="1.0" fill="#c8b8ff" opacity="0.54"/>
<circle cx="935.2" cy="604.9" r="1.3" fill="#ffe8b0" opacity="0.66"/>
<circle cx="1032.8" cy="645.3" r="1.0" fill="#ffd0c0" opacity="0.52"/>
<circle cx="1270.2" cy="1106.6" r="1.0" fill="#a8e8f0" opacity="0.57"/>
<circle cx="1101.9" cy="1120.5" r="1.0" fill="#b0b8ff" opacity="0.47"/>
<circle cx="1185.7" cy="721.5" r="1.0" fill="#b0b8ff" opacity="0.51"/>
<circle cx="1416.8" cy="747.0" r="1.0" fill="#ffe8b0" opacity="0.70"/>
<circle cx="1004.1" cy="707.6" r="0.8" fill="#c8b8ff" opacity="0.61"/>
<circle cx="1241.3" cy="982.5" r="0.8" fill="#b0b8ff" opacity="0.48"/>
<circle cx="923.9" cy="457.9" r="1.8" fill="#c8b8ff" opacity="0.47"/>
<circle cx="1465.5" cy="696.6" r="1.8" fill="#ffe8b0" opacity="0.39"/>
<circle cx="1247.8" cy="957.4" r="1.0" fill="#9fc4ff" opacity="0.64"/>
<circle cx="1610.5" cy="629.9" r="1.3" fill="#a8e8f0" opacity="0.58"/>
<circle cx="1300.4" cy="694.3" r="1.0" fill="#a8e8f0" opacity="0.39"/>
<circle cx="1196.6" cy="887.9" r="0.8" fill="#9fc4ff" opacity="0.68"/>
<circle cx="1134.7" cy="723.0" r="1.3" fill="#a8e8f0" opacity="0.66"/>
<circle cx="1161.3" cy="1145.1" r="1.3" fill="#9fc4ff" opacity="0.71"/>
<circle cx="1390.0" cy="1077.9" r="1.0" fill="#ffe8b0" opacity="0.60"/>
<circle cx="1245.5" cy="1146.9" r="1.8" fill="#ffffff" opacity="0.63"/>
<circle cx="1477.6" cy="1099.1" r="1.8" fill="#ffe8b0" opacity="0.38"/>
<circle cx="1078.8" cy="675.4" r="1.8" fill="#9fc4ff" opacity="0.60"/>
<circle cx="1239.9" cy="627.0" r="0.8" fill="#ffffff" opacity="0.39"/>
<circle cx="1312.1" cy="701.3" r="0.8" fill="#ffd0c0" opacity="0.52"/>
<circle cx="946.6" cy="305.6" r="1.8" fill="#9fc4ff" opacity="0.36"/>
<circle cx="1103.6" cy="1114.0" r="0.8" fill="#b0b8ff" opacity="0.66"/>
<circle cx="1257.0" cy="895.8" r="1.8" fill="#ffe8b0" opacity="0.45"/>
<circle cx="1378.6" cy="611.4" r="0.8" fill="#c8b8ff" opacity="0.52"/>
<circle cx="1323.0" cy="1000.5" r="0.8" fill="#c8b8ff" opacity="0.52"/>
<circle cx="1238.9" cy="1129.8" r="1.3" fill="#ffffff" opacity="0.72"/>
<circle cx="944.0" cy="305.2" r="1.0" fill="#9fc4ff" opacity="0.58"/>
<circle cx="989.6" cy="487.0" r="0.8" fill="#9fc4ff" opacity="0.66"/>
<circle cx="1425.0" cy="741.4" r="1.3" fill="#a8e8f0" opacity="0.63"/>
<circle cx="1513.8" cy="618.5" r="1.0" fill="#a8e8f0" opacity="0.38"/>
<circle cx="1178.8" cy="1034.6" r="1.0" fill="#ffffff" opacity="0.59"/>
<circle cx="1073.5" cy="695.5" r="0.8" fill="#ffffff" opacity="0.54"/>
<circle cx="1021.4" cy="1032.2" r="1.3" fill="#a8e8f0" opacity="0.39"/>
<circle cx="1397.8" cy="829.2" r="1.0" fill="#ffffff" opacity="0.43"/>
<circle cx="931.3" cy="340.4" r="1.8" fill="#ffd0c0" opacity="0.36"/>
<circle cx="1567.1" cy="864.9" r="0.8" fill="#9fc4ff" opacity="0.62"/>
<circle cx="958.5" cy="422.0" r="0.8" fill="#9fc4ff" opacity="0.44"/>
<circle cx="970.0" cy="646.7" r="0.8" fill="#9fc4ff" opacity="0.54"/>
<circle cx="1672.7" cy="737.3" r="1.8" fill="#c8b8ff" opacity="0.58"/>
<circle cx="987.1" cy="540.3" r="1.8" fill="#a8e8f0" opacity="0.65"/>
<circle cx="1157.8" cy="691.5" r="1.0" fill="#9fc4ff" opacity="0.66"/>
<circle cx="874.8" cy="693.5" r="1.8" fill="#ffffff" opacity="0.69"/>
<circle cx="981.6" cy="412.3" r="0.8" fill="#ffffff" opacity="0.47"/>
<circle cx="1272.5" cy="718.8" r="1.8" fill="#ffe8b0" opacity="0.55"/>
<circle cx="1443.1" cy="851.5" r="1.0" fill="#ffffff" opacity="0.72"/>
<circle cx="1407.3" cy="1080.6" r="1.8" fill="#9fc4ff" opacity="0.36"/>
<circle cx="1415.8" cy="836.7" r="0.8" fill="#9fc4ff" opacity="0.70"/>
<circle cx="1589.3" cy="820.3" r="1.3" fill="#ffffff" opacity="0.38"/>
<circle cx="1425.8" cy="1011.4" r="1.0" fill="#c8b8ff" opacity="0.64"/>
<circle cx="1188.5" cy="1034.9" r="1.0" fill="#ffd0c0" opacity="0.59"/>
<circle cx="1499.0" cy="1026.1" r="1.0" fill="#c8b8ff" opacity="0.73"/>
<circle cx="1270.9" cy="1094.8" r="1.0" fill="#ffffff" opacity="0.54"/>
<circle cx="1373.1" cy="888.5" r="0.8" fill="#ffd0c0" opacity="0.74"/>
<circle cx="1244.5" cy="820.7" r="1.0" fill="#9fc4ff" opacity="0.73"/>
<circle cx="1314.5" cy="875.4" r="1.8" fill="#ffd0c0" opacity="0.67"/>
<circle cx="1491.8" cy="945.3" r="1.0" fill="#a8e8f0" opacity="0.66"/>
<circle cx="1187.1" cy="725.0" r="1.0" fill="#a8e8f0" opacity="0.66"/>
<circle cx="1177.7" cy="567.2" r="1.0" fill="#ffe8b0" opacity="0.47"/>
<circle cx="1162.3" cy="878.5" r="1.3" fill="#9fc4ff" opacity="0.74"/>
<circle cx="1460.0" cy="809.6" r="1.3" fill="#ffffff" opacity="0.48"/>
<circle cx="1361.8" cy="887.3" r="1.8" fill="#ffe8b0" opacity="0.74"/>
<circle cx="1201.1" cy="652.1" r="0.8" fill="#b0b8ff" opacity="0.59"/>
<circle cx="884.9" cy="772.8" r="1.3" fill="#c8b8ff" opacity="0.52"/>
<circle cx="1515.1" cy="697.6" r="1.0" fill="#ffd0c0" opacity="0.50"/>
<circle cx="1584.0" cy="898.9" r="1.3" fill="#a8e8f0" opacity="0.66"/>
<circle cx="906.3" cy="1099.8" r="1.0" fill="#ffd0c0" opacity="0.46"/>
<circle cx="993.8" cy="1040.4" r="1.0" fill="#9fc4ff" opacity="0.46"/>
<circle cx="1624.9" cy="908.9" r="0.8" fill="#a8e8f0" opacity="0.58"/>
<circle cx="1051.9" cy="577.9" r="0.8" fill="#b0b8ff" opacity="0.47"/>
<circle cx="1040.0" cy="614.2" r="1.3" fill="#ffd0c0" opacity="0.41"/>
<circle cx="962.3" cy="1139.0" r="1.3" fill="#b0b8ff" opacity="0.62"/>
<circle cx="924.8" cy="446.4" r="1.0" fill="#a8e8f0" opacity="0.56"/>
<circle cx="1053.0" cy="1160.3" r="1.3" fill="#ffe8b0" opacity="0.54"/>
<circle cx="1581.3" cy="1011.2" r="0.8" fill="#a8e8f0" opacity="0.67"/>
<circle cx="1319.3" cy="1116.1" r="0.8" fill="#ffffff" opacity="0.47"/>
<circle cx="1639.7" cy="739.5" r="1.8" fill="#9fc4ff" opacity="0.51"/>
<circle cx="1424.3" cy="637.8" r="0.8" fill="#ffffff" opacity="0.72"/>
<circle cx="1445.3" cy="838.0" r="0.8" fill="#ffe8b0" opacity="0.67"/>
<circle cx="974.9" cy="935.8" r="1.3" fill="#a8e8f0" opacity="0.39"/>
<circle cx="1243.3" cy="579.4" r="1.0" fill="#b0b8ff" opacity="0.66"/>
<circle cx="914.3" cy="438.7" r="1.0" fill="#ffd0c0" opacity="0.58"/>
<circle cx="1256.0" cy="1089.0" r="1.3" fill="#c8b8ff" opacity="0.48"/>
<circle cx="1442.1" cy="598.4" r="1.3" fill="#ffe8b0" opacity="0.43"/>
<circle cx="1095.0" cy="713.6" r="0.8" fill="#ffd0c0" opacity="0.39"/>
<circle cx="1187.5" cy="822.6" r="1.8" fill="#b0b8ff" opacity="0.47"/>
<circle cx="947.2" cy="428.5" r="1.3" fill="#ffe8b0" opacity="0.49"/>
<circle cx="1080.3" cy="632.6" r="1.3" fill="#b0b8ff" opacity="0.69"/>
<circle cx="1593.2" cy="661.0" r="0.8" fill="#ffd0c0" opacity="0.72"/>
<circle cx="1071.8" cy="1129.9" r="1.0" fill="#a8e8f0" opacity="0.70"/>
<circle cx="1520.7" cy="1056.1" r="1.8" fill="#c8b8ff" opacity="0.54"/>
<circle cx="1207.1" cy="876.9" r="0.8" fill="#9fc4ff" opacity="0.48"/>
<circle cx="1640.5" cy="917.9" r="1.0" fill="#9fc4ff" opacity="0.46"/>
<circle cx="1336.4" cy="962.4" r="0.8" fill="#ffe8b0" opacity="0.39"/>
<circle cx="1139.9" cy="741.9" r="1.3" fill="#ffd0c0" opacity="0.54"/>
<circle cx="1324.9" cy="893.9" r="0.8" fill="#ffe8b0" opacity="0.45"/>
<circle cx="1209.3" cy="774.3" r="1.0" fill="#b0b8ff" opacity="0.52"/>
<circle cx="978.8" cy="648.0" r="1.3" fill="#a8e8f0" opacity="0.68"/>
<circle cx="1658.5" cy="838.1" r="1.0" fill="#ffd0c0" opacity="0.69"/>
<circle cx="1580.8" cy="663.1" r="0.8" fill="#c8b8ff" opacity="0.75"/>
<circle cx="909.8" cy="427.1" r="0.8" fill="#a8e8f0" opacity="0.36"/>
<circle cx="1182.3" cy="869.0" r="1.3" fill="#9fc4ff" opacity="0.50"/>
<circle cx="1357.0" cy="1128.2" r="1.0" fill="#ffffff" opacity="0.54"/>
<circle cx="1016.5" cy="606.5" r="0.8" fill="#b0b8ff" opacity="0.70"/>
<circle cx="1491.2" cy="935.9" r="1.0" fill="#ffffff" opacity="0.72"/>
<circle cx="896.0" cy="957.9" r="0.8" fill="#ffffff" opacity="0.45"/>
<circle cx="897.9" cy="602.8" r="0.8" fill="#ffe8b0" opacity="0.61"/>
<circle cx="1354.9" cy="1152.6" r="1.3" fill="#ffffff" opacity="0.51"/>
<circle cx="956.3" cy="535.0" r="0.8" fill="#a8e8f0" opacity="0.50"/>
<circle cx="1035.8" cy="1021.1" r="1.8" fill="#ffd0c0" opacity="0.44"/>
<circle cx="1517.0" cy="618.8" r="1.0" fill="#9fc4ff" opacity="0.73"/>
<circle cx="1052.4" cy="1122.4" r="1.3" fill="#9fc4ff" opacity="0.71"/>
<circle cx="1091.8" cy="1011.0" r="0.8" fill="#b0b8ff" opacity="0.45"/>
<circle cx="1439.7" cy="1100.7" r="1.8" fill="#ffe8b0" opacity="0.65"/>
<circle cx="1657.3" cy="809.6" r="1.0" fill="#b0b8ff" opacity="0.37"/>
<circle cx="938.1" cy="912.6" r="1.0" fill="#ffd0c0" opacity="0.65"/>
<circle cx="994.2" cy="456.6" r="1.8" fill="#ffd0c0" opacity="0.65"/>
<circle cx="1614.6" cy="827.1" r="1.3" fill="#ffe8b0" opacity="0.53"/>
<circle cx="908.8" cy="662.9" r="0.8" fill="#ffffff" opacity="0.54"/>
<circle cx="1111.6" cy="681.9" r="1.0" fill="#c8b8ff" opacity="0.51"/>
<circle cx="1496.9" cy="935.2" r="1.0" fill="#c8b8ff" opacity="0.50"/>
<circle cx="1517.7" cy="970.7" r="0.8" fill="#a8e8f0" opacity="0.67"/>
<circle cx="997.4" cy="545.8" r="0.8" fill="#ffffff" opacity="0.54"/>
<circle cx="940.9" cy="258.5" r="0.8" fill="#ffd0c0" opacity="0.41"/>
<circle cx="1400.9" cy="633.8" r="0.8" fill="#b0b8ff" opacity="0.38"/>
<circle cx="909.2" cy="602.6" r="1.0" fill="#ffe8b0" opacity="0.71"/>
<circle cx="1308.4" cy="868.6" r="1.0" fill="#ffd0c0" opacity="0.73"/>
<circle cx="1440.4" cy="1047.4" r="0.8" fill="#a8e8f0" opacity="0.60"/>
<circle cx="922.8" cy="425.3" r="1.0" fill="#a8e8f0" opacity="0.48"/>
<circle cx="1502.9" cy="847.1" r="1.0" fill="#ffd0c0" opacity="0.40"/>
<circle cx="1157.9" cy="1018.6" r="0.8" fill="#c8b8ff" opacity="0.48"/>
<circle cx="1673.0" cy="774.6" r="0.8" fill="#ffffff" opacity="0.42"/>
<circle cx="1562.6" cy="636.0" r="1.3" fill="#a8e8f0" opacity="0.71"/>
<circle cx="935.8" cy="975.8" r="0.8" fill="#a8e8f0" opacity="0.46"/>
<circle cx="1283.4" cy="812.6" r="0.8" fill="#a8e8f0" opacity="0.41"/>
<circle cx="892.0" cy="552.8" r="1.3" fill="#c8b8ff" opacity="0.69"/>
<circle cx="930.6" cy="791.4" r="0.8" fill="#c8b8ff" opacity="0.45"/>
<circle cx="989.8" cy="381.9" r="1.0" fill="#9fc4ff" opacity="0.53"/>
<circle cx="1489.3" cy="738.3" r="0.8" fill="#a8e8f0" opacity="0.41"/>
<circle cx="1075.7" cy="740.4" r="0.8" fill="#ffe8b0" opacity="0.60"/>
<circle cx="985.1" cy="1157.2" r="1.8" fill="#b0b8ff" opacity="0.72"/>
<circle cx="990.0" cy="757.4" r="1.0" fill="#ffe8b0" opacity="0.68"/>
<circle cx="1036.3" cy="602.2" r="1.0" fill="#9fc4ff" opacity="0.65"/>
<circle cx="1105.2" cy="1019.9" r="1.0" fill="#c8b8ff" opacity="0.75"/>
<circle cx="1087.0" cy="1084.5" r="0.8" fill="#ffd0c0" opacity="0.39"/>
<circle cx="1329.4" cy="1112.3" r="1.0" fill="#c8b8ff" opacity="0.71"/>
<circle cx="1050.5" cy="693.2" r="1.8" fill="#9fc4ff" opacity="0.74"/>
<circle cx="1205.9" cy="1128.6" r="1.8" fill="#ffd0c0" opacity="0.36"/>
<circle cx="1624.7" cy="572.7" r="1.3" fill="#b0b8ff" opacity="0.49"/>
<circle cx="1602.0" cy="813.0" r="1.0" fill="#ffd0c0" opacity="0.35"/>
<circle cx="1085.2" cy="1046.7" r="1.3" fill="#b0b8ff" opacity="0.46"/>
<circle cx="892.6" cy="584.9" r="1.0" fill="#c8b8ff" opacity="0.37"/>
<circle cx="1202.5" cy="568.2" r="0.8" fill="#a8e8f0" opacity="0.46"/>
<circle cx="1416.5" cy="1099.4" r="0.8" fill="#ffd0c0" opacity="0.69"/>
<circle cx="1286.9" cy="740.4" r="0.8" fill="#ffe8b0" opacity="0.63"/>
<circle cx="1101.4" cy="774.0" r="1.3" fill="#ffd0c0" opacity="0.38"/>
<circle cx="1107.2" cy="852.8" r="1.3" fill="#9fc4ff" opacity="0.64"/>
<circle cx="1129.0" cy="624.9" r="1.0" fill="#b0b8ff" opacity="0.42"/>
<circle cx="1456.5" cy="978.1" r="1.3" fill="#ffd0c0" opacity="0.62"/>
<circle cx="1425.4" cy="975.7" r="0.8" fill="#ffffff" opacity="0.58"/>
<circle cx="1424.0" cy="1014.3" r="0.8" fill="#ffd0c0" opacity="0.38"/>
<circle cx="1175.6" cy="1160.8" r="1.3" fill="#ffffff" opacity="0.51"/>
<circle cx="1186.3" cy="1122.8" r="0.8" fill="#ffffff" opacity="0.56"/>
<circle cx="882.4" cy="443.4" r="1.0" fill="#c8b8ff" opacity="0.46"/>
<circle cx="1369.8" cy="1097.5" r="1.0" fill="#ffffff" opacity="0.39"/>
<circle cx="1569.6" cy="745.7" r="1.0" fill="#a8e8f0" opacity="0.40"/>
<circle cx="1266.8" cy="1084.1" r="1.0" fill="#ffffff" opacity="0.45"/>
<circle cx="1318.2" cy="579.3" r="1.0" fill="#ffe8b0" opacity="0.36"/>
<circle cx="1039.5" cy="962.2" r="1.0" fill="#ffffff" opacity="0.58"/>
<circle cx="1272.8" cy="857.9" r="0.8" fill="#b0b8ff" opacity="0.49"/>
<circle cx="1304.0" cy="618.5" r="1.3" fill="#a8e8f0" opacity="0.38"/>
<circle cx="1197.1" cy="1097.6" r="1.8" fill="#c8b8ff" opacity="0.45"/>
<circle cx="898.9" cy="775.0" r="1.0" fill="#b0b8ff" opacity="0.66"/>
<circle cx="1312.1" cy="662.6" r="1.0" fill="#b0b8ff" opacity="0.58"/>
<circle cx="918.9" cy="326.0" r="1.0" fill="#9fc4ff" opacity="0.70"/>
<circle cx="1567.9" cy="980.3" r="1.0" fill="#ffffff" opacity="0.53"/>
<circle cx="1334.6" cy="630.4" r="1.3" fill="#9fc4ff" opacity="0.67"/>
<circle cx="1636.0" cy="930.1" r="0.8" fill="#ffd0c0" opacity="0.45"/>
<circle cx="923.9" cy="1105.8" r="0.8" fill="#9fc4ff" opacity="0.60"/>
<circle cx="1191.2" cy="835.0" r="0.8" fill="#ffd0c0" opacity="0.47"/>
<circle cx="986.9" cy="482.1" r="0.8" fill="#ffe8b0" opacity="0.36"/>
<circle cx="1476.6" cy="911.3" r="1.8" fill="#ffffff" opacity="0.43"/>
<circle cx="1437.5" cy="652.7" r="1.3" fill="#9fc4ff" opacity="0.60"/>
<circle cx="1434.0" cy="639.5" r="1.3" fill="#a8e8f0" opacity="0.45"/>
<circle cx="900.6" cy="280.5" r="0.8" fill="#a8e8f0" opacity="0.49"/>
<circle cx="1013.9" cy="946.7" r="1.8" fill="#9fc4ff" opacity="0.42"/>
<circle cx="1385.7" cy="1045.7" r="0.8" fill="#c8b8ff" opacity="0.54"/>
<circle cx="1239.6" cy="622.5" r="1.3" fill="#ffe8b0" opacity="0.65"/>
<circle cx="1482.3" cy="712.6" r="0.8" fill="#9fc4ff" opacity="0.40"/>
<circle cx="941.3" cy="835.4" r="1.3" fill="#ffd0c0" opacity="0.59"/>
<circle cx="936.2" cy="415.7" r="0.8" fill="#b0b8ff" opacity="0.41"/>
<circle cx="914.3" cy="1110.0" r="1.0" fill="#ffe8b0" opacity="0.65"/>
<circle cx="1319.1" cy="888.0" r="0.8" fill="#ffd0c0" opacity="0.73"/>
<circle cx="1152.5" cy="1039.9" r="1.8" fill="#a8e8f0" opacity="0.52"/>
<circle cx="1388.3" cy="1058.3" r="1.3" fill="#b0b8ff" opacity="0.56"/>
<circle cx="1119.1" cy="920.9" r="0.8" fill="#a8e8f0" opacity="0.66"/>
<circle cx="886.2" cy="815.4" r="1.0" fill="#c8b8ff" opacity="0.45"/>
<circle cx="1383.2" cy="827.0" r="1.8" fill="#c8b8ff" opacity="0.52"/>
<circle cx="1387.7" cy="933.4" r="1.0" fill="#ffe8b0" opacity="0.68"/>
<circle cx="1042.8" cy="1017.0" r="1.3" fill="#b0b8ff" opacity="0.37"/>
<circle cx="1543.5" cy="1011.2" r="0.8" fill="#ffe8b0" opacity="0.73"/>
<circle cx="1322.7" cy="1024.7" r="0.8" fill="#c8b8ff" opacity="0.70"/>
<circle cx="997.0" cy="609.8" r="1.8" fill="#ffffff" opacity="0.35"/>
<circle cx="959.2" cy="911.7" r="1.3" fill="#9fc4ff" opacity="0.42"/>
<circle cx="1663.8" cy="692.5" r="1.0" fill="#c8b8ff" opacity="0.43"/>
<path d="M901.9 396.3h6l-3 3.5zM1596.8 991.1h6l-3 3.5zM1224.2 1200.6h6l-3 3.5zM886.4 1105.9h6l-3 3.5zM1007.2 755.8h6l-3 3.5zM1100.8 1024.1h6l-3 3.5zM1666.7 536.2h6l-3 3.5zM1652.4 863.1h6l-3 3.5zM916.2 282.7h6l-3 3.5zM911.1 391.8h6l-3 3.5zM933.8 354.7h6l-3 3.5zM898.5 807.9h6l-3 3.5zM1405.8 623.1h6l-3 3.5zM1639.5 716.9h6l-3 3.5zM915.5 328.5h6l-3 3.5zM898.2 265.7h6l-3 3.5zM1552.4 712.1h6l-3 3.5zM1016.6 810.4h6l-3 3.5zM1687.5 782.1h6l-3 3.5zM880.3 552.3h6l-3 3.5zM952.6 666.4h6l-3 3.5zM1617.2 767.5h6l-3 3.5zM1017.0 696.9h6l-3 3.5zM1501.0 777.6h6l-3 3.5zM1373.9 1057.1h6l-3 3.5zM934.1 758.0h6l-3 3.5zM872.6 1046.1h6l-3 3.5zM926.0 1064.8h6l-3 3.5zM1523.7 1051.3h6l-3 3.5zM1200.3 999.1h6l-3 3.5zM1153.6 668.2h6l-3 3.5zM1109.9 671.3h6l-3 3.5zM959.5 235.5h6l-3 3.5zM885.8 374.8h6l-3 3.5zM1132.1 581.3h6l-3 3.5zM1157.3 666.0h6l-3 3.5zM909.7 581.3h6l-3 3.5zM889.5 1103.2h6l-3 3.5zM1254.6 805.1h6l-3 3.5zM876.6 294.0h6l-3 3.5zM871.6 1064.4h6l-3 3.5zM894.2 306.0h6l-3 3.5zM1174.7 968.3h6l-3 3.5zM897.0 666.8h6l-3 3.5zM1664.4 862.1h6l-3 3.5zM1397.4 777.0h6l-3 3.5zM874.4 377.6h6l-3 3.5zM915.4 288.2h6l-3 3.5zM1228.0 956.0h6l-3 3.5zM1227.4 807.8h6l-3 3.5zM1678.3 820.5h6l-3 3.5zM1034.0 725.0h6l-3 3.5zM1693.2 650.3h6l-3 3.5zM907.8 1030.4h6l-3 3.5zM1000.9 923.9h6l-3 3.5zM1141.8 1018.8h6l-3 3.5zM1007.9 995.6h6l-3 3.5zM1110.4 852.0h6l-3 3.5zM988.3 530.3h6l-3 3.5zM1694.7 659.1h6l-3 3.5zM1351.2 567.6h6l-3 3.5zM1204.6 1000.1h6l-3 3.5zM1639.9 910.1h6l-3 3.5zM1205.7 721.3h6l-3 3.5zM1041.3 1081.0h6l-3 3.5zM1062.6 941.6h6l-3 3.5zM1214.0 1087.4h6l-3 3.5zM1133.7 914.3h6l-3 3.5zM1668.5 840.7h6l-3 3.5zM916.2 551.0h6l-3 3.5zM953.1 1149.3h6l-3 3.5zM1686.6 746.4h6l-3 3.5zM975.3 248.9h6l-3 3.5zM884.2 729.1h6l-3 3.5zM953.4 366.8h6l-3 3.5zM1009.6 830.6h6l-3 3.5zM1438.9 737.4h6l-3 3.5zM1598.7 946.4h6l-3 3.5zM1181.4 939.2h6l-3 3.5zM886.9 321.5h6l-3 3.5zM1522.2 1073.2h6l-3 3.5zM1576.6 1015.7h6l-3 3.5zM1058.5 667.3h6l-3 3.5zM1663.7 836.7h6l-3 3.5zM1164.0 844.0h6l-3 3.5zM1179.2 627.6h6l-3 3.5zM913.7 268.2h6l-3 3.5zM1604.3 685.4h6l-3 3.5zM959.8 940.8h6l-3 3.5zM947.2 800.5h6l-3 3.5zM921.4 946.1h6l-3 3.5zM923.6 268.5h6l-3 3.5zM1532.6 1063.9h6l-3 3.5zM903.4 417.2h6l-3 3.5zM1175.5 995.1h6l-3 3.5zM1173.7 892.6h6l-3 3.5zM1644.6 672.2h6l-3 3.5zM1239.5 953.7h6l-3 3.5zM1513.1 1048.5h6l-3 3.5zM993.2 374.5h6l-3 3.5zM1650.6 899.5h6l-3 3.5zM1089.9 611.0h6l-3 3.5zM1514.4 1074.9h6l-3 3.5zM881.9 692.4h6l-3 3.5zM1675.9 606.0h6l-3 3.5zM900.7 268.2h6l-3 3.5zM1382.3 564.5h6l-3 3.5zM987.3 582.4h6l-3 3.5zM1519.6 935.2h6l-3 3.5zM1680.2 813.9h6l-3 3.5zM1088.1 953.5h6l-3 3.5zM1664.7 856.6h6l-3 3.5zM917.5 248.4h6l-3 3.5zM1013.3 1166.0h6l-3 3.5zM899.8 503.9h6l-3 3.5zM907.1 305.3h6l-3 3.5zM948.3 343.6h6l-3 3.5zM1198.0 960.1h6l-3 3.5zM1001.5 959.7h6l-3 3.5zM983.8 785.0h6l-3 3.5zM1295.9 576.6h6l-3 3.5zM1037.3 1134.4h6l-3 3.5zM945.4 1099.1h6l-3 3.5zM933.6 491.1h6l-3 3.5zM1081.2 768.5h6l-3 3.5zM946.8 332.1h6l-3 3.5zM965.3 1072.9h6l-3 3.5zM1624.9 680.6h6l-3 3.5zM954.2 851.8h6l-3 3.5zM1360.4 767.0h6l-3 3.5zM1200.3 958.1h6l-3 3.5zM1042.4 815.6h6l-3 3.5zM1689.3 762.0h6l-3 3.5zM1671.3 540.9h6l-3 3.5zM1047.8 661.0h6l-3 3.5zM1146.8 986.8h6l-3 3.5zM1158.2 839.0h6l-3 3.5zM942.0 321.6h6l-3 3.5zM882.3 1074.3h6l-3 3.5zM1246.6 596.7h6l-3 3.5zM913.4 286.0h6l-3 3.5zM1236.5 1026.2h6l-3 3.5zM1686.2 782.4h6l-3 3.5zM891.2 431.2h6l-3 3.5zM1253.2 959.4h6l-3 3.5zM1109.7 626.0h6l-3 3.5zM987.6 291.3h6l-3 3.5zM1259.4 736.6h6l-3 3.5zM966.9 1049.8h6l-3 3.5zM1675.7 825.9h6l-3 3.5zM1255.4 1009.0h6l-3 3.5zM1478.9 850.3h6l-3 3.5zM905.9 1105.1h6l-3 3.5zM1677.2 799.2h6l-3 3.5zM938.6 1085.7h6l-3 3.5zM1656.7 852.9h6l-3 3.5zM941.6 366.9h6l-3 3.5zM1650.6 568.3h6l-3 3.5zM955.3 350.6h6l-3 3.5zM1643.5 902.5h6l-3 3.5zM1570.7 880.8h6l-3 3.5zM1174.0 911.7h6l-3 3.5zM979.2 1097.6h6l-3 3.5zM1140.9 1175.1h6l-3 3.5zM1069.5 830.0h6l-3 3.5zM941.8 940.2h6l-3 3.5zM1677.8 710.5h6l-3 3.5zM989.9 783.1h6l-3 3.5zM916.7 1112.0h6l-3 3.5zM1187.6 683.8h6l-3 3.5zM1001.7 1092.4h6l-3 3.5zM954.1 371.3h6l-3 3.5zM1087.0 951.0h6l-3 3.5zM1643.0 891.2h6l-3 3.5zM1174.7 1003.0h6l-3 3.5zM1508.5 1074.7h6l-3 3.5zM994.5 291.8h6l-3 3.5zM927.9 885.8h6l-3 3.5zM949.5 290.6h6l-3 3.5zM1208.3 1005.0h6l-3 3.5zM1617.3 958.1h6l-3 3.5zM1688.7 601.9h6l-3 3.5zM1059.6 912.2h6l-3 3.5zM932.8 817.8h6l-3 3.5zM987.1 1164.5h6l-3 3.5zM1597.2 869.1h6l-3 3.5zM881.6 779.8h6l-3 3.5zM966.3 479.0h6l-3 3.5zM1652.2 478.1h6l-3 3.5zM1636.3 857.7h6l-3 3.5zM1653.7 881.1h6l-3 3.5zM937.6 872.1h6l-3 3.5zM1671.7 781.3h6l-3 3.5zM1012.1 1107.5h6l-3 3.5zM904.7 415.0h6l-3 3.5zM1021.1 626.5h6l-3 3.5zM910.2 920.6h6l-3 3.5zM918.0 895.8h6l-3 3.5zM1097.4 612.9h6l-3 3.5zM978.5 369.4h6l-3 3.5zM1172.4 1004.6h6l-3 3.5zM1696.0 679.2h6l-3 3.5zM949.3 226.6h6l-3 3.5zM880.7 552.6h6l-3 3.5zM1478.1 1098.8h6l-3 3.5zM976.7 1082.4h6l-3 3.5zM1279.7 652.3h6l-3 3.5zM1032.6 1054.2h6l-3 3.5zM873.7 322.0h6l-3 3.5zM1005.2 1069.7h6l-3 3.5zM1676.6 545.6h6l-3 3.5zM1600.1 749.7h6l-3 3.5zM1191.5 710.8h6l-3 3.5zM1296.5 879.7h6l-3 3.5zM1664.8 862.6h6l-3 3.5zM1635.9 775.0h6l-3 3.5zM884.0 459.2h6l-3 3.5zM1161.0 576.6h6l-3 3.5zM1022.9 886.8h6l-3 3.5zM1065.9 579.2h6l-3 3.5zM980.7 212.0h6l-3 3.5zM876.1 912.1h6l-3 3.5zM897.1 797.7h6l-3 3.5zM1054.2 810.3h6l-3 3.5zM989.8 1160.2h6l-3 3.5zM1536.6 1048.5h6l-3 3.5zM1455.0 1121.4h6l-3 3.5zM1060.0 923.4h6l-3 3.5zM942.1 230.4h6l-3 3.5zM960.7 463.8h6l-3 3.5zM1667.7 838.8h6l-3 3.5zM987.1 1020.8h6l-3 3.5zM1597.3 632.2h6l-3 3.5zM922.3 254.7h6l-3 3.5zM876.3 306.8h6l-3 3.5zM986.0 533.5h6l-3 3.5zM1632.3 882.4h6l-3 3.5zM982.5 240.4h6l-3 3.5zM1164.8 951.3h6l-3 3.5zM1636.7 760.8h6l-3 3.5zM964.1 510.4h6l-3 3.5zM1689.6 676.4h6l-3 3.5zM1235.0 709.6h6l-3 3.5zM1125.8 789.6h6l-3 3.5zM1037.0 728.6h6l-3 3.5zM950.3 310.1h6l-3 3.5zM1566.1 1007.1h6l-3 3.5zM1246.7 643.1h6l-3 3.5zM1544.8 1035.7h6l-3 3.5zM1656.4 665.0h6l-3 3.5zM949.3 666.0h6l-3 3.5zM1432.0 722.0h6l-3 3.5zM940.4 536.5h6l-3 3.5zM1001.9 974.0h6l-3 3.5zM1017.4 587.4h6l-3 3.5zM1659.9 808.7h6l-3 3.5zM987.8 374.6h6l-3 3.5zM917.2 263.0h6l-3 3.5zM932.6 295.6h6l-3 3.5zM1523.4 1061.0h6l-3 3.5zM1017.5 1091.3h6l-3 3.5zM1448.6 967.2h6l-3 3.5zM1043.1 1183.1h6l-3 3.5zM1586.8 990.1h6l-3 3.5zM1145.5 830.8h6l-3 3.5zM964.4 976.5h6l-3 3.5zM1192.0 1067.3h6l-3 3.5zM1659.8 855.7h6l-3 3.5zM1116.0 739.4h6l-3 3.5zM959.9 1148.9h6l-3 3.5zM1232.8 656.4h6l-3 3.5zM914.2 246.1h6l-3 3.5zM1619.0 563.5h6l-3 3.5zM1687.4 702.3h6l-3 3.5zM961.9 523.7h6l-3 3.5zM1451.6 1121.8h6l-3 3.5zM1220.3 910.1h6l-3 3.5zM1190.2 714.1h6l-3 3.5zM1078.8 901.5h6l-3 3.5zM882.8 607.3h6l-3 3.5zM1117.1 933.3h6l-3 3.5zM1654.5 872.4h6l-3 3.5zM1661.5 873.5h6l-3 3.5zM1003.0 850.3h6l-3 3.5zM1006.1 1167.0h6l-3 3.5zM874.7 762.6h6l-3 3.5zM884.8 898.8h6l-3 3.5zM1161.8 910.0h6l-3 3.5zM873.0 285.8h6l-3 3.5zM891.0 1103.8h6l-3 3.5zM1254.7 901.9h6l-3 3.5zM1386.0 1140.1h6l-3 3.5zM1215.3 888.6h6l-3 3.5zM1661.0 840.0h6l-3 3.5zM976.4 781.9h6l-3 3.5zM1637.5 894.5h6l-3 3.5zM1676.1 824.3h6l-3 3.5zM1607.5 964.1h6l-3 3.5zM915.8 379.7h6l-3 3.5zM919.2 936.9h6l-3 3.5zM939.1 346.6h6l-3 3.5zM1482.9 1095.3h6l-3 3.5zM1382.6 883.1h6l-3 3.5zM1687.0 774.0h6l-3 3.5zM1639.2 863.1h6l-3 3.5zM1005.1 1147.6h6l-3 3.5zM1027.8 799.5h6l-3 3.5zM1629.9 939.7h6l-3 3.5zM1252.1 628.4h6l-3 3.5zM952.3 643.2h6l-3 3.5zM925.3 647.1h6l-3 3.5zM1151.1 808.0h6l-3 3.5zM1211.5 846.4h6l-3 3.5zM1651.0 867.9h6l-3 3.5zM901.5 507.5h6l-3 3.5zM957.4 740.2h6l-3 3.5zM1610.6 959.6h6l-3 3.5zM1612.6 792.5h6l-3 3.5zM1565.1 1018.7h6l-3 3.5zM1685.6 786.2h6l-3 3.5zM1682.3 806.7h6l-3 3.5zM1529.4 952.6h6l-3 3.5zM1045.8 869.7h6l-3 3.5zM1147.0 823.4h6l-3 3.5zM1551.4 1044.5h6l-3 3.5zM998.8 638.0h6l-3 3.5zM1284.0 672.6h6l-3 3.5zM1006.2 1160.6h6l-3 3.5zM885.9 610.5h6l-3 3.5zM915.9 1067.8h6l-3 3.5zM1558.1 1035.3h6l-3 3.5zM905.3 513.2h6l-3 3.5zM1133.1 993.8h6l-3 3.5zM956.4 797.8h6l-3 3.5zM1157.4 746.3h6l-3 3.5zM929.7 279.8h6l-3 3.5zM947.3 310.6h6l-3 3.5zM1028.0 1178.4h6l-3 3.5zM960.2 948.9h6l-3 3.5zM1631.0 930.1h6l-3 3.5zM1657.3 640.6h6l-3 3.5zM1011.2 1054.3h6l-3 3.5zM904.4 975.0h6l-3 3.5zM940.7 367.1h6l-3 3.5zM905.2 313.8h6l-3 3.5zM962.0 470.3h6l-3 3.5zM1116.8 734.8h6l-3 3.5zM1486.6 1090.0h6l-3 3.5zM1164.6 565.3h6l-3 3.5zM1155.7 996.9h6l-3 3.5zM968.7 405.6h6l-3 3.5zM965.5 223.6h6l-3 3.5zM997.3 874.2h6l-3 3.5zM1075.8 573.0h6l-3 3.5zM1265.8 994.7h6l-3 3.5zM1135.2 573.0h6l-3 3.5zM913.3 353.7h6l-3 3.5zM1588.5 1000.1h6l-3 3.5zM883.9 757.6h6l-3 3.5zM931.2 237.3h6l-3 3.5zM972.8 828.1h6l-3 3.5zM1607.2 939.1h6l-3 3.5zM1054.5 832.4h6l-3 3.5zM916.7 628.2h6l-3 3.5zM1248.5 1183.9h6l-3 3.5zM1604.5 965.5h6l-3 3.5zM1241.5 928.5h6l-3 3.5zM952.6 434.4h6l-3 3.5zM1031.1 606.2h6l-3 3.5zM1551.1 1034.2h6l-3 3.5zM1167.1 678.5h6l-3 3.5zM918.4 776.1h6l-3 3.5zM1237.7 770.1h6l-3 3.5zM1192.7 661.8h6l-3 3.5zM1192.2 598.1h6l-3 3.5zM1673.0 567.1h6l-3 3.5zM949.2 330.8h6l-3 3.5zM942.3 339.1h6l-3 3.5zM964.2 612.3h6l-3 3.5zM1667.6 531.9h6l-3 3.5zM879.8 271.1h6l-3 3.5zM1660.1 876.7h6l-3 3.5zM951.8 1143.4h6l-3 3.5zM882.8 378.5h6l-3 3.5zM1601.9 984.4h6l-3 3.5zM917.5 311.7h6l-3 3.5zM978.6 1158.2h6l-3 3.5zM1642.5 905.3h6l-3 3.5zM977.7 727.1h6l-3 3.5zM1017.0 596.8h6l-3 3.5zM1672.6 734.1h6l-3 3.5zM881.7 537.0h6l-3 3.5zM964.8 841.5h6l-3 3.5zM946.7 400.7h6l-3 3.5zM1658.8 761.2h6l-3 3.5zM1671.8 844.2h6l-3 3.5zM921.7 772.4h6l-3 3.5zM1020.2 928.1h6l-3 3.5zM1103.0 949.9h6l-3 3.5zM1634.8 867.5h6l-3 3.5zM1582.5 886.1h6l-3 3.5zM951.0 227.7h6l-3 3.5zM1101.5 764.1h6l-3 3.5zM1619.7 897.1h6l-3 3.5zM1275.6 597.6h6l-3 3.5zM960.3 1117.7h6l-3 3.5zM926.8 738.4h6l-3 3.5zM1061.1 779.1h6l-3 3.5zM888.6 452.4h6l-3 3.5zM1061.2 632.5h6l-3 3.5zM889.8 360.8h6l-3 3.5zM1688.5 680.1h6l-3 3.5zM1012.8 1163.3h6l-3 3.5zM1682.1 626.3h6l-3 3.5zM1682.5 804.9h6l-3 3.5zM970.3 1021.4h6l-3 3.5zM927.5 340.1h6l-3 3.5zM954.8 374.1h6l-3 3.5zM930.1 308.0h6l-3 3.5zM1639.2 653.5h6l-3 3.5zM913.2 253.5h6l-3 3.5zM923.2 272.1h6l-3 3.5zM1645.4 465.7h6l-3 3.5zM1168.2 652.7h6l-3 3.5zM1024.5 1177.6h6l-3 3.5zM985.7 777.9h6l-3 3.5zM926.8 320.3h6l-3 3.5zM1095.3 958.1h6l-3 3.5zM936.7 1125.8h6l-3 3.5zM1206.2 968.7h6l-3 3.5zM1569.1 993.0h6l-3 3.5zM1284.4 802.4h6l-3 3.5zM1594.9 866.8h6l-3 3.5zM1046.7 669.3h6l-3 3.5zM1187.3 837.4h6l-3 3.5zM1524.0 1071.7h6l-3 3.5zM916.2 1126.6h6l-3 3.5zM1227.9 600.0h6l-3 3.5zM1613.5 788.7h6l-3 3.5zM1663.7 842.6h6l-3 3.5zM957.0 223.7h6l-3 3.5zM1163.3 941.3h6l-3 3.5zM1683.5 779.9h6l-3 3.5zM941.4 1126.3h6l-3 3.5zM970.3 242.9h6l-3 3.5zM873.4 1100.5h6l-3 3.5zM1666.9 517.1h6l-3 3.5zM1653.9 566.5h6l-3 3.5zM1618.3 736.6h6l-3 3.5zM971.2 251.0h6l-3 3.5zM966.1 269.4h6l-3 3.5zM915.2 1011.9h6l-3 3.5zM1238.5 952.5h6l-3 3.5zM877.9 976.6h6l-3 3.5zM1029.5 1161.7h6l-3 3.5zM1690.7 680.2h6l-3 3.5zM1198.4 681.4h6l-3 3.5zM1261.5 984.9h6l-3 3.5zM1682.2 723.2h6l-3 3.5zM1643.3 913.3h6l-3 3.5zM935.4 235.0h6l-3 3.5zM1466.0 801.9h6l-3 3.5zM1591.4 980.8h6l-3 3.5zM971.1 925.5h6l-3 3.5zM1627.2 678.8h6l-3 3.5zM871.1 1093.0h6l-3 3.5zM1687.9 662.8h6l-3 3.5zM937.1 333.5h6l-3 3.5zM1184.9 700.5h6l-3 3.5zM913.5 682.8h6l-3 3.5zM885.6 349.2h6l-3 3.5zM1078.2 742.0h6l-3 3.5zM1641.2 915.1h6l-3 3.5zM1638.3 917.1h6l-3 3.5zM1056.3 722.5h6l-3 3.5zM1640.9 918.8h6l-3 3.5zM987.0 412.8h6l-3 3.5zM1333.8 1102.4h6l-3 3.5zM1505.8 1071.3h6l-3 3.5zM1083.4 660.2h6l-3 3.5zM1105.3 684.5h6l-3 3.5zM1550.9 1043.4h6l-3 3.5zM1562.0 1032.7h6l-3 3.5zM1132.5 868.3h6l-3 3.5zM977.8 493.3h6l-3 3.5zM1485.1 1000.9h6l-3 3.5zM881.5 467.3h6l-3 3.5zM1186.4 791.2h6l-3 3.5zM892.7 691.0h6l-3 3.5zM1254.8 1006.7h6l-3 3.5zM1104.0 995.5h6l-3 3.5zM930.4 268.7h6l-3 3.5zM909.0 252.9h6l-3 3.5zM944.3 420.6h6l-3 3.5zM1638.6 914.7h6l-3 3.5zM1001.1 995.6h6l-3 3.5zM1063.8 825.0h6l-3 3.5zM1169.6 838.1h6l-3 3.5zM1612.7 932.8h6l-3 3.5zM1685.5 581.4h6l-3 3.5zM1085.4 599.6h6l-3 3.5zM1122.3 884.0h6l-3 3.5zM1628.6 868.2h6l-3 3.5zM1620.6 956.0h6l-3 3.5zM911.2 355.7h6l-3 3.5zM897.7 802.2h6l-3 3.5zM926.4 242.9h6l-3 3.5zM1117.2 946.9h6l-3 3.5zM995.9 1080.9h6l-3 3.5zM1084.9 1013.7h6l-3 3.5zM1036.0 726.9h6l-3 3.5zM1677.3 826.1h6l-3 3.5zM889.9 870.9h6l-3 3.5zM1659.7 863.9h6l-3 3.5zM924.3 450.9h6l-3 3.5zM1226.2 1012.4h6l-3 3.5zM1229.0 760.2h6l-3 3.5zM1695.3 658.5h6l-3 3.5zM1645.9 895.3h6l-3 3.5zM1541.5 1050.7h6l-3 3.5zM887.7 1033.2h6l-3 3.5zM1176.8 585.6h6l-3 3.5zM1242.5 672.7h6l-3 3.5zM1247.8 990.4h6l-3 3.5zM1646.2 475.7h6l-3 3.5zM1175.5 702.4h6l-3 3.5zM1140.1 817.3h6l-3 3.5zM1657.7 878.9h6l-3 3.5zM992.3 1064.5h6l-3 3.5zM930.8 498.5h6l-3 3.5zM1178.7 872.1h6l-3 3.5zM917.5 551.6h6l-3 3.5zM1652.8 721.7h6l-3 3.5zM1273.1 753.6h6l-3 3.5zM1335.1 658.6h6l-3 3.5zM975.1 1128.4h6l-3 3.5zM1126.7 762.9h6l-3 3.5zM923.6 699.0h6l-3 3.5zM930.4 1083.8h6l-3 3.5zM1268.6 618.7h6l-3 3.5zM1665.5 640.2h6l-3 3.5zM1006.2 1022.7h6l-3 3.5zM886.6 845.7h6l-3 3.5zM944.1 550.5h6l-3 3.5zM1478.6 1107.7h6l-3 3.5zM1267.6 943.3h6l-3 3.5zM1351.7 627.5h6l-3 3.5zM1682.4 763.7h6l-3 3.5zM1573.1 1021.6h6l-3 3.5zM922.8 1117.1h6l-3 3.5zM1028.1 697.0h6l-3 3.5zM1054.3 707.7h6l-3 3.5zM930.0 1066.1h6l-3 3.5zM1478.6 1105.1h6l-3 3.5zM1105.4 973.9h6l-3 3.5zM1080.0 911.7h6l-3 3.5zM1091.4 870.2h6l-3 3.5zM1019.8 1090.6h6l-3 3.5zM1674.4 831.8h6l-3 3.5zM1159.3 642.5h6l-3 3.5zM1003.1 718.7h6l-3 3.5zM1690.5 680.9h6l-3 3.5zM1134.6 790.7h6l-3 3.5zM1596.7 969.7h6l-3 3.5zM1676.3 805.0h6l-3 3.5zM969.0 229.9h6l-3 3.5zM1199.9 942.7h6l-3 3.5zM944.8 546.1h6l-3 3.5zM1638.7 923.8h6l-3 3.5zM1625.4 930.5h6l-3 3.5zM1110.2 1046.2h6l-3 3.5zM927.8 1024.9h6l-3 3.5zM906.5 721.3h6l-3 3.5zM1577.2 1001.0h6l-3 3.5zM1639.0 921.1h6l-3 3.5zM1595.9 982.1h6l-3 3.5zM971.1 400.8h6l-3 3.5zM949.3 692.7h6l-3 3.5zM1637.1 638.2h6l-3 3.5zM1214.7 955.0h6l-3 3.5zM880.0 489.9h6l-3 3.5zM1136.3 789.3h6l-3 3.5zM1666.4 846.4h6l-3 3.5zM1662.9 856.5h6l-3 3.5zM996.6 619.0h6l-3 3.5zM1411.2 564.5h6l-3 3.5zM1688.2 727.9h6l-3 3.5zM972.9 219.2h6l-3 3.5zM983.1 234.6h6l-3 3.5zM911.9 306.1h6l-3 3.5zM1504.7 1028.3h6l-3 3.5zM963.9 1061.1h6l-3 3.5zM936.7 458.3h6l-3 3.5zM885.0 894.2h6l-3 3.5zM1169.9 685.3h6l-3 3.5zM916.2 518.9h6l-3 3.5zM919.7 472.2h6l-3 3.5zM1670.4 728.5h6l-3 3.5zM933.9 1084.8h6l-3 3.5zM1168.9 999.4h6l-3 3.5zM1244.0 621.9h6l-3 3.5zM982.7 345.1h6l-3 3.5zM873.4 578.3h6l-3 3.5zM1486.5 1098.4h6l-3 3.5zM1051.9 655.7h6l-3 3.5zM1023.6 1146.1h6l-3 3.5zM1631.1 936.0h6l-3 3.5zM879.7 279.3h6l-3 3.5zM1624.7 788.8h6l-3 3.5zM1059.2 967.7h6l-3 3.5zM1150.3 640.3h6l-3 3.5zM957.8 270.4h6l-3 3.5zM984.3 264.6h6l-3 3.5zM936.5 242.4h6l-3 3.5zM1629.7 801.5h6l-3 3.5zM926.2 787.3h6l-3 3.5zM1356.5 698.3h6l-3 3.5zM1567.5 978.2h6l-3 3.5zM893.6 610.8h6l-3 3.5zM933.7 248.0h6l-3 3.5zM942.4 776.0h6l-3 3.5zM1610.9 951.8h6l-3 3.5zM1611.1 962.7h6l-3 3.5zM937.3 1140.5h6l-3 3.5zM973.3 264.3h6l-3 3.5zM956.4 249.0h6l-3 3.5zM1539.3 1057.5h6l-3 3.5zM1078.3 1015.9h6l-3 3.5zM1002.5 668.1h6l-3 3.5zM1638.3 921.0h6l-3 3.5zM913.7 498.8h6l-3 3.5zM1256.9 594.8h6l-3 3.5zM1602.9 970.4h6l-3 3.5zM1580.9 1006.7h6l-3 3.5zM1160.0 583.9h6l-3 3.5zM1140.8 856.4h6l-3 3.5zM1240.6 907.7h6l-3 3.5zM1052.9 1148.0h6l-3 3.5zM1113.5 634.8h6l-3 3.5zM1622.1 568.6h6l-3 3.5zM991.9 1112.5h6l-3 3.5zM1200.4 851.2h6l-3 3.5zM903.2 269.9h6l-3 3.5zM1591.7 941.4h6l-3 3.5zM952.6 324.3h6l-3 3.5zM1040.7 971.5h6l-3 3.5zM1058.1 747.1h6l-3 3.5zM1634.9 902.9h6l-3 3.5zM1245.0 1119.2h6l-3 3.5zM902.8 262.0h6l-3 3.5zM1677.6 824.2h6l-3 3.5zM1176.3 996.6h6l-3 3.5zM964.4 219.7h6l-3 3.5zM872.7 998.8h6l-3 3.5zM1664.8 666.1h6l-3 3.5zM948.6 1136.3h6l-3 3.5zM1418.0 1079.4h6l-3 3.5zM1109.3 700.4h6l-3 3.5zM970.7 218.4h6l-3 3.5zM1578.3 879.1h6l-3 3.5zM956.7 371.4h6l-3 3.5zM1645.0 900.8h6l-3 3.5zM1233.0 1023.4h6l-3 3.5zM926.8 526.9h6l-3 3.5zM900.9 295.9h6l-3 3.5zM1650.8 511.6h6l-3 3.5zM1535.9 1050.1h6l-3 3.5zM1645.3 910.6h6l-3 3.5zM986.4 1000.5h6l-3 3.5zM875.5 473.7h6l-3 3.5zM1628.1 928.6h6l-3 3.5zM1647.7 815.7h6l-3 3.5zM954.0 306.3h6l-3 3.5zM934.8 1008.3h6l-3 3.5zM886.8 300.4h6l-3 3.5zM1545.5 612.2h6l-3 3.5zM1264.2 939.4h6l-3 3.5zM877.1 272.2h6l-3 3.5zM994.1 1088.1h6l-3 3.5zM1651.6 591.7h6l-3 3.5zM1089.1 916.1h6l-3 3.5zM1654.1 883.4h6l-3 3.5zM1669.6 805.2h6l-3 3.5zM1017.4 986.2h6l-3 3.5zM944.9 981.1h6l-3 3.5zM1235.3 623.1h6l-3 3.5zM1221.7 1010.9h6l-3 3.5zM1362.6 708.3h6l-3 3.5zM1551.9 1042.0h6l-3 3.5zM960.0 341.3h6l-3 3.5zM948.9 241.3h6l-3 3.5zM1047.2 653.5h6l-3 3.5zM1650.2 808.2h6l-3 3.5zM959.2 1117.2h6l-3 3.5zM891.2 586.7h6l-3 3.5zM1011.9 1171.3h6l-3 3.5zM955.3 932.1h6l-3 3.5zM1118.2 864.4h6l-3 3.5zM951.4 231.5h6l-3 3.5zM1654.0 889.4h6l-3 3.5zM1660.7 541.8h6l-3 3.5zM948.6 306.1h6l-3 3.5zM1048.4 953.2h6l-3 3.5zM988.6 857.2h6l-3 3.5zM893.9 277.4h6l-3 3.5zM1622.3 951.8h6l-3 3.5zM975.5 347.8h6l-3 3.5zM1595.4 937.2h6l-3 3.5zM1049.5 1053.7h6l-3 3.5zM1198.0 869.9h6l-3 3.5zM886.0 411.2h6l-3 3.5zM1422.9 913.2h6l-3 3.5zM960.5 557.2h6l-3 3.5zM1350.5 1073.0h6l-3 3.5zM1142.9 826.0h6l-3 3.5zM1282.9 611.5h6l-3 3.5zM1681.4 736.6h6l-3 3.5zM1158.3 665.8h6l-3 3.5zM962.3 1083.3h6l-3 3.5zM1683.9 699.2h6l-3 3.5zM1239.0 839.8h6l-3 3.5zM1638.9 887.1h6l-3 3.5zM915.1 247.8h6l-3 3.5zM913.2 338.3h6l-3 3.5zM1659.1 873.9h6l-3 3.5zM1653.2 538.9h6l-3 3.5zM1568.3 1012.9h6l-3 3.5zM1251.8 758.6h6l-3 3.5zM1578.3 764.5h6l-3 3.5zM997.5 1038.0h6l-3 3.5zM1022.3 980.9h6l-3 3.5zM951.2 717.2h6l-3 3.5zM1204.7 924.8h6l-3 3.5zM1212.6 1012.2h6l-3 3.5zM1663.0 577.6h6l-3 3.5zM924.6 278.4h6l-3 3.5zM987.2 988.6h6l-3 3.5zM1683.7 754.6h6l-3 3.5zM927.4 490.7h6l-3 3.5zM991.3 1017.0h6l-3 3.5zM1693.3 643.2h6l-3 3.5zM1552.4 835.9h6l-3 3.5zM1650.8 516.9h6l-3 3.5zM989.2 1044.3h6l-3 3.5zM1225.1 957.6h6l-3 3.5zM895.7 920.1h6l-3 3.5zM920.4 251.4h6l-3 3.5zM1087.6 966.5h6l-3 3.5zM1673.4 548.3h6l-3 3.5zM1679.0 731.6h6l-3 3.5zM1090.2 716.4h6l-3 3.5zM1160.1 931.8h6l-3 3.5zM1187.7 1185.8h6l-3 3.5zM1570.3 952.3h6l-3 3.5zM1048.8 1148.7h6l-3 3.5zM1544.6 1048.0h6l-3 3.5zM994.9 772.8h6l-3 3.5zM967.3 604.9h6l-3 3.5zM916.8 262.7h6l-3 3.5zM923.3 730.3h6l-3 3.5zM1269.4 738.6h6l-3 3.5zM1148.3 922.5h6l-3 3.5zM893.1 364.5h6l-3 3.5zM930.4 1047.3h6l-3 3.5zM1655.4 668.8h6l-3 3.5zM1155.3 870.7h6l-3 3.5zM927.5 506.1h6l-3 3.5zM918.6 939.4h6l-3 3.5zM1482.9 1076.6h6l-3 3.5zM952.6 273.9h6l-3 3.5zM1195.2 991.5h6l-3 3.5zM1038.8 647.7h6l-3 3.5zM1593.1 982.8h6l-3 3.5zM1010.9 625.7h6l-3 3.5zM1667.5 617.2h6l-3 3.5zM951.1 1064.3h6l-3 3.5zM1090.6 829.1h6l-3 3.5zM903.4 676.0h6l-3 3.5zM1185.8 987.6h6l-3 3.5zM891.0 362.9h6l-3 3.5zM1537.7 1053.2h6l-3 3.5zM959.9 234.5h6l-3 3.5zM1117.5 1000.6h6l-3 3.5zM923.0 463.5h6l-3 3.5zM1190.0 996.4h6l-3 3.5zM904.9 1067.6h6l-3 3.5zM990.5 432.8h6l-3 3.5zM949.0 954.6h6l-3 3.5zM1160.9 1016.7h6l-3 3.5zM979.9 1113.6h6l-3 3.5zM996.3 219.9h6l-3 3.5zM1150.5 710.4h6l-3 3.5zM968.7 444.0h6l-3 3.5zM1662.9 504.1h6l-3 3.5zM1639.6 908.9h6l-3 3.5zM993.6 433.2h6l-3 3.5zM960.8 1092.2h6l-3 3.5zM919.1 244.1h6l-3 3.5zM1640.9 912.5h6l-3 3.5zM929.9 381.1h6l-3 3.5zM887.8 279.6h6l-3 3.5zM952.2 251.6h6l-3 3.5zM1327.7 742.0h6l-3 3.5zM1646.2 622.7h6l-3 3.5zM1569.5 906.1h6l-3 3.5zM1572.3 750.1h6l-3 3.5zM1078.7 705.7h6l-3 3.5zM893.6 655.4h6l-3 3.5zM1573.2 1019.3h6l-3 3.5zM1124.7 678.4h6l-3 3.5zM989.4 784.9h6l-3 3.5zM954.1 335.9h6l-3 3.5zM1287.5 581.6h6l-3 3.5zM996.5 286.7h6l-3 3.5zM1159.3 1132.2h6l-3 3.5zM931.3 1084.5h6l-3 3.5zM955.8 706.1h6l-3 3.5zM1679.7 643.0h6l-3 3.5zM1675.5 831.9h6l-3 3.5zM1176.0 670.3h6l-3 3.5zM1694.7 654.6h6l-3 3.5zM1081.4 650.4h6l-3 3.5zM1112.6 799.7h6l-3 3.5zM949.3 635.0h6l-3 3.5zM953.1 908.5h6l-3 3.5zM1015.2 1054.5h6l-3 3.5zM1672.5 841.3h6l-3 3.5zM1181.5 646.0h6l-3 3.5zM995.6 219.9h6l-3 3.5zM948.6 1069.7h6l-3 3.5zM1659.5 497.3h6l-3 3.5zM1673.0 810.9h6l-3 3.5zM983.6 339.0h6l-3 3.5zM987.5 1132.4h6l-3 3.5zM1254.9 970.2h6l-3 3.5zM1177.4 930.1h6l-3 3.5zM892.9 707.6h6l-3 3.5zM980.1 424.1h6l-3 3.5zM931.9 350.3h6l-3 3.5zM1649.4 538.7h6l-3 3.5zM1026.1 1119.5h6l-3 3.5zM960.8 944.6h6l-3 3.5zM977.9 1130.7h6l-3 3.5zM961.0 330.4h6l-3 3.5zM1674.5 540.8h6l-3 3.5zM1211.9 725.7h6l-3 3.5zM955.2 574.6h6l-3 3.5zM1055.2 1060.8h6l-3 3.5zM1181.4 921.7h6l-3 3.5zM923.3 773.5h6l-3 3.5zM1640.1 896.8h6l-3 3.5zM1636.2 838.8h6l-3 3.5zM1037.2 1169.6h6l-3 3.5zM1391.0 600.5h6l-3 3.5zM1456.9 628.0h6l-3 3.5zM1696.1 691.9h6l-3 3.5zM958.9 1149.5h6l-3 3.5zM1663.1 869.2h6l-3 3.5zM909.3 402.4h6l-3 3.5zM935.4 621.0h6l-3 3.5zM957.9 776.9h6l-3 3.5zM1677.5 620.3h6l-3 3.5zM1051.9 953.4h6l-3 3.5zM898.5 256.0h6l-3 3.5zM938.5 956.7h6l-3 3.5zM1561.6 1026.8h6l-3 3.5zM1115.9 928.6h6l-3 3.5zM909.2 429.8h6l-3 3.5zM1581.0 860.7h6l-3 3.5zM1592.8 643.2h6l-3 3.5zM924.3 296.0h6l-3 3.5zM1681.8 737.8h6l-3 3.5zM927.4 496.3h6l-3 3.5zM947.7 402.5h6l-3 3.5zM1261.6 711.3h6l-3 3.5zM973.1 745.6h6l-3 3.5zM1005.0 696.9h6l-3 3.5zM1143.0 767.9h6l-3 3.5zM981.5 222.1h6l-3 3.5zM1632.5 873.0h6l-3 3.5zM1086.0 717.8h6l-3 3.5zM1119.3 838.0h6l-3 3.5zM1617.6 862.9h6l-3 3.5zM1689.6 662.6h6l-3 3.5zM915.6 246.6h6l-3 3.5zM924.0 994.6h6l-3 3.5zM912.3 887.6h6l-3 3.5zM1493.6 1096.6h6l-3 3.5zM1675.2 818.6h6l-3 3.5zM1579.6 700.6h6l-3 3.5zM984.4 331.8h6l-3 3.5zM878.5 507.1h6l-3 3.5zM1053.3 838.5h6l-3 3.5zM911.5 277.1h6l-3 3.5zM1537.9 1057.8h6l-3 3.5zM1015.4 1168.4h6l-3 3.5zM1044.7 974.3h6l-3 3.5zM1659.7 547.9h6l-3 3.5zM1536.0 1059.1h6l-3 3.5zM1669.1 851.3h6l-3 3.5zM938.9 1140.9h6l-3 3.5zM1001.4 1029.3h6l-3 3.5zM893.1 877.3h6l-3 3.5zM1645.6 891.5h6l-3 3.5zM1602.4 952.2h6l-3 3.5zM919.3 520.4h6l-3 3.5zM1161.5 718.0h6l-3 3.5zM1668.3 722.2h6l-3 3.5zM1668.9 630.0h6l-3 3.5zM1506.7 1081.6h6l-3 3.5zM1564.4 1025.9h6l-3 3.5zM972.9 390.7h6l-3 3.5zM883.7 730.9h6l-3 3.5zM892.8 1103.5h6l-3 3.5zM1671.3 807.0h6l-3 3.5zM951.6 518.4h6l-3 3.5zM1442.0 620.3h6l-3 3.5zM1657.0 525.2h6l-3 3.5zM1267.8 730.4h6l-3 3.5zM938.7 1033.4h6l-3 3.5zM1649.6 893.0h6l-3 3.5zM1678.8 589.1h6l-3 3.5zM913.6 315.8h6l-3 3.5zM1065.3 900.9h6l-3 3.5zM1126.6 688.1h6l-3 3.5zM874.7 1069.3h6l-3 3.5zM1673.5 689.1h6l-3 3.5zM900.3 1100.7h6l-3 3.5zM1244.6 934.8h6l-3 3.5zM912.8 974.6h6l-3 3.5zM1692.5 745.8h6l-3 3.5zM1025.1 1013.2h6l-3 3.5zM1049.4 1060.7h6l-3 3.5zM1052.2 873.5h6l-3 3.5zM916.2 1111.8h6l-3 3.5zM1359.1 650.7h6l-3 3.5zM955.0 241.8h6l-3 3.5zM1527.3 1052.1h6l-3 3.5zM1051.3 852.8h6l-3 3.5zM1644.9 906.6h6l-3 3.5zM1650.9 708.2h6l-3 3.5zM1050.0 1100.2h6l-3 3.5zM1652.4 823.9h6l-3 3.5zM975.4 881.9h6l-3 3.5zM1041.5 1133.1h6l-3 3.5zM908.7 322.3h6l-3 3.5zM1002.7 645.8h6l-3 3.5zM1467.1 744.2h6l-3 3.5zM891.8 826.0h6l-3 3.5zM1134.4 604.1h6l-3 3.5zM978.9 221.3h6l-3 3.5zM948.1 401.7h6l-3 3.5zM1582.1 997.2h6l-3 3.5zM936.6 615.6h6l-3 3.5zM887.6 323.8h6l-3 3.5zM1644.3 863.8h6l-3 3.5zM929.8 1086.0h6l-3 3.5zM1258.5 740.6h6l-3 3.5zM1524.1 1052.1h6l-3 3.5zM1661.8 872.7h6l-3 3.5zM1660.5 513.5h6l-3 3.5zM1549.0 1047.3h6l-3 3.5zM934.1 1093.8h6l-3 3.5zM1020.4 948.8h6l-3 3.5zM907.6 461.0h6l-3 3.5zM949.5 1063.8h6l-3 3.5zM1569.7 1022.8h6l-3 3.5zM915.5 246.3h6l-3 3.5zM1614.1 964.8h6l-3 3.5zM1664.0 601.8h6l-3 3.5zM1272.1 804.4h6l-3 3.5zM964.9 298.8h6l-3 3.5zM1052.8 1098.8h6l-3 3.5zM1497.1 1079.1h6l-3 3.5zM878.6 392.8h6l-3 3.5zM884.9 537.7h6l-3 3.5zM1650.2 888.4h6l-3 3.5zM1405.6 1085.6h6l-3 3.5zM999.3 1119.3h6l-3 3.5zM1258.8 726.1h6l-3 3.5zM1689.3 763.2h6l-3 3.5zM872.1 865.2h6l-3 3.5zM923.9 1040.1h6l-3 3.5zM893.8 259.0h6l-3 3.5zM1193.7 795.8h6l-3 3.5zM884.0 330.8h6l-3 3.5zM1094.1 1092.7h6l-3 3.5zM1649.4 572.7h6l-3 3.5zM1542.5 1049.7h6l-3 3.5zM1034.4 565.4h6l-3 3.5zM1040.9 847.2h6l-3 3.5zM923.4 941.7h6l-3 3.5zM887.9 304.4h6l-3 3.5zM899.4 371.9h6l-3 3.5zM1591.5 957.9h6l-3 3.5zM946.8 825.5h6l-3 3.5zM926.6 1083.0h6l-3 3.5zM1555.7 1034.6h6l-3 3.5zM1564.3 788.6h6l-3 3.5zM1636.5 762.2h6l-3 3.5zM935.7 278.6h6l-3 3.5zM1165.4 860.2h6l-3 3.5zM1221.4 662.7h6l-3 3.5zM1480.1 1106.2h6l-3 3.5zM936.2 528.7h6l-3 3.5zM956.3 950.1h6l-3 3.5zM1482.5 1066.4h6l-3 3.5zM1676.6 711.3h6l-3 3.5zM992.6 392.7h6l-3 3.5zM923.4 327.4h6l-3 3.5zM1618.2 611.0h6l-3 3.5zM884.5 299.2h6l-3 3.5zM1213.4 606.5h6l-3 3.5zM974.7 298.0h6l-3 3.5zM1025.0 726.9h6l-3 3.5zM1657.6 501.0h6l-3 3.5zM1164.4 683.4h6l-3 3.5zM995.2 453.2h6l-3 3.5zM995.7 797.7h6l-3 3.5zM983.0 1044.3h6l-3 3.5zM924.2 1010.3h6l-3 3.5zM890.1 1032.0h6l-3 3.5zM1169.9 847.0h6l-3 3.5zM1274.4 721.6h6l-3 3.5zM1103.2 899.7h6l-3 3.5zM896.0 401.9h6l-3 3.5zM1610.6 963.8h6l-3 3.5zM1650.6 474.6h6l-3 3.5zM951.5 1033.8h6l-3 3.5zM1661.0 586.9h6l-3 3.5zM1662.5 528.9h6l-3 3.5zM943.4 244.4h6l-3 3.5zM1348.2 1165.7h6l-3 3.5zM974.7 218.1h6l-3 3.5zM900.9 740.1h6l-3 3.5zM1673.4 567.3h6l-3 3.5zM1051.7 640.7h6l-3 3.5zM1556.4 1039.4h6l-3 3.5zM1016.0 573.4h6l-3 3.5zM1658.5 517.4h6l-3 3.5zM902.5 927.1h6l-3 3.5zM929.7 657.2h6l-3 3.5zM1631.3 936.6h6l-3 3.5zM1242.9 598.0h6l-3 3.5zM886.1 563.8h6l-3 3.5zM1630.7 853.6h6l-3 3.5zM954.6 548.1h6l-3 3.5zM993.2 471.7h6l-3 3.5zM1679.2 759.8h6l-3 3.5zM1688.1 767.5h6l-3 3.5zM895.5 1026.1h6l-3 3.5zM1659.6 873.7h6l-3 3.5zM1517.6 1067.9h6l-3 3.5zM1296.0 680.7h6l-3 3.5zM1640.3 897.4h6l-3 3.5zM883.6 343.4h6l-3 3.5zM916.3 497.6h6l-3 3.5zM964.6 260.2h6l-3 3.5zM1572.5 775.6h6l-3 3.5zM975.3 1156.1h6l-3 3.5zM1559.9 764.0h6l-3 3.5zM887.7 544.1h6l-3 3.5zM1168.4 665.6h6l-3 3.5zM1637.4 625.1h6l-3 3.5zM1053.4 714.3h6l-3 3.5zM1178.6 956.0h6l-3 3.5zM1088.0 602.8h6l-3 3.5zM1694.5 728.6h6l-3 3.5zM1693.0 649.3h6l-3 3.5zM1670.3 802.2h6l-3 3.5zM1445.8 849.2h6l-3 3.5zM899.5 521.3h6l-3 3.5zM1079.2 880.6h6l-3 3.5zM1413.9 1011.9h6l-3 3.5zM1191.5 601.9h6l-3 3.5zM902.7 474.9h6l-3 3.5zM908.8 583.1h6l-3 3.5zM1124.4 606.8h6l-3 3.5zM970.6 321.4h6l-3 3.5zM920.3 541.8h6l-3 3.5zM1585.2 1000.5h6l-3 3.5zM1676.2 819.1h6l-3 3.5zM1635.1 635.3h6l-3 3.5zM1192.5 790.6h6l-3 3.5zM904.1 1103.7h6l-3 3.5zM919.0 249.0h6l-3 3.5zM872.3 276.2h6l-3 3.5zM1691.8 655.0h6l-3 3.5zM979.6 521.4h6l-3 3.5zM1045.7 1145.9h6l-3 3.5zM1684.7 788.4h6l-3 3.5zM1190.8 613.5h6l-3 3.5zM898.3 733.1h6l-3 3.5zM1652.4 895.5h6l-3 3.5zM1059.7 917.7h6l-3 3.5zM1158.4 915.8h6l-3 3.5zM945.0 300.5h6l-3 3.5zM969.9 344.8h6l-3 3.5zM919.5 765.7h6l-3 3.5zM1353.9 892.4h6l-3 3.5zM973.0 1129.4h6l-3 3.5zM880.3 624.3h6l-3 3.5zM926.5 882.3h6l-3 3.5zM923.9 1071.5h6l-3 3.5zM1244.2 569.4h6l-3 3.5zM1158.3 928.5h6l-3 3.5zM1295.0 614.7h6l-3 3.5zM949.1 917.4h6l-3 3.5zM1296.0 1166.4h6l-3 3.5zM912.0 253.9h6l-3 3.5zM1120.7 880.7h6l-3 3.5zM890.1 897.6h6l-3 3.5zM1198.5 726.3h6l-3 3.5zM951.1 369.1h6l-3 3.5zM989.1 626.2h6l-3 3.5zM1670.8 803.0h6l-3 3.5zM1018.1 1074.1h6l-3 3.5zM974.8 388.5h6l-3 3.5zM1080.5 725.3h6l-3 3.5zM913.5 247.0h6l-3 3.5zM946.5 297.9h6l-3 3.5zM989.8 452.4h6l-3 3.5zM950.5 507.5h6l-3 3.5zM1621.4 652.4h6l-3 3.5zM1469.1 892.2h6l-3 3.5zM1666.5 675.6h6l-3 3.5zM998.8 1131.1h6l-3 3.5zM1196.0 651.1h6l-3 3.5zM1482.8 682.3h6l-3 3.5zM934.8 377.1h6l-3 3.5zM960.7 903.8h6l-3 3.5zM1649.8 901.3h6l-3 3.5zM1647.9 468.7h6l-3 3.5zM1580.5 904.2h6l-3 3.5zM1312.0 768.8h6l-3 3.5zM1155.7 1201.1h6l-3 3.5zM1436.3 1121.6h6l-3 3.5zM1558.8 991.0h6l-3 3.5zM948.1 613.8h6l-3 3.5zM1039.5 1005.0h6l-3 3.5zM1535.2 1051.0h6l-3 3.5zM1139.2 729.2h6l-3 3.5zM962.7 564.7h6l-3 3.5zM1690.3 654.7h6l-3 3.5zM1689.6 612.6h6l-3 3.5zM966.1 477.1h6l-3 3.5zM931.9 828.9h6l-3 3.5zM1619.8 949.9h6l-3 3.5zM972.2 819.9h6l-3 3.5zM1200.6 1024.1h6l-3 3.5zM904.7 480.3h6l-3 3.5zM964.2 795.5h6l-3 3.5zM1275.3 779.2h6l-3 3.5zM932.6 659.3h6l-3 3.5zM946.5 381.6h6l-3 3.5zM926.2 358.1h6l-3 3.5zM992.0 338.8h6l-3 3.5zM877.1 943.0h6l-3 3.5zM1672.0 840.5h6l-3 3.5zM1047.0 647.5h6l-3 3.5zM901.6 884.2h6l-3 3.5zM1201.9 967.0h6l-3 3.5zM923.2 251.2h6l-3 3.5zM938.7 1040.4h6l-3 3.5zM948.0 1007.3h6l-3 3.5zM1237.2 1000.6h6l-3 3.5zM1145.7 1004.2h6l-3 3.5zM895.5 860.4h6l-3 3.5zM888.4 271.9h6l-3 3.5zM987.4 999.3h6l-3 3.5zM1110.7 578.9h6l-3 3.5zM1124.3 991.8h6l-3 3.5zM1066.6 758.2h6l-3 3.5zM966.8 420.2h6l-3 3.5zM1138.7 1200.2h6l-3 3.5zM974.8 232.8h6l-3 3.5zM1191.9 990.9h6l-3 3.5zM1652.6 519.3h6l-3 3.5zM955.5 225.0h6l-3 3.5zM1661.4 727.5h6l-3 3.5zM1015.4 1155.8h6l-3 3.5zM972.2 503.1h6l-3 3.5zM1004.8 910.1h6l-3 3.5zM1191.7 791.8h6l-3 3.5zM1115.7 674.5h6l-3 3.5zM1185.0 667.2h6l-3 3.5zM878.9 269.5h6l-3 3.5zM1525.6 1012.8h6l-3 3.5zM982.0 269.1h6l-3 3.5zM1664.4 599.9h6l-3 3.5zM978.6 1131.9h6l-3 3.5zM910.8 855.4h6l-3 3.5zM1496.2 892.1h6l-3 3.5zM1590.1 812.6h6l-3 3.5zM1241.1 841.8h6l-3 3.5zM890.9 445.9h6l-3 3.5zM1202.5 850.3h6l-3 3.5zM879.9 332.4h6l-3 3.5zM878.7 445.7h6l-3 3.5zM1095.6 765.8h6l-3 3.5zM914.8 446.7h6l-3 3.5zM1235.8 819.1h6l-3 3.5zM987.0 664.2h6l-3 3.5zM955.5 1058.8h6l-3 3.5zM873.8 277.7h6l-3 3.5zM1056.7 1147.9h6l-3 3.5zM1171.4 1044.4h6l-3 3.5zM1069.0 675.3h6l-3 3.5zM1057.9 657.6h6l-3 3.5zM875.3 867.5h6l-3 3.5zM981.9 556.7h6l-3 3.5zM1205.2 726.0h6l-3 3.5zM1142.2 761.4h6l-3 3.5zM1177.8 1003.3h6l-3 3.5zM878.0 829.4h6l-3 3.5zM907.9 538.8h6l-3 3.5zM872.8 294.8h6l-3 3.5zM874.2 885.9h6l-3 3.5zM950.0 1089.3h6l-3 3.5zM916.0 384.4h6l-3 3.5zM1560.9 912.8h6l-3 3.5zM875.0 287.2h6l-3 3.5zM1179.3 942.7h6l-3 3.5zM959.3 1016.3h6l-3 3.5zM1661.4 871.8h6l-3 3.5zM1598.3 978.6h6l-3 3.5zM934.3 317.9h6l-3 3.5zM1532.3 1021.2h6l-3 3.5zM965.7 273.6h6l-3 3.5zM1663.3 671.2h6l-3 3.5zM902.3 283.3h6l-3 3.5zM1114.1 636.3h6l-3 3.5zM1690.8 615.3h6l-3 3.5zM879.4 346.4h6l-3 3.5zM1029.3 1132.1h6l-3 3.5zM885.3 293.1h6l-3 3.5zM1064.2 818.9h6l-3 3.5zM901.2 770.1h6l-3 3.5zM1514.8 1077.5h6l-3 3.5zM974.1 319.6h6l-3 3.5zM1042.6 1081.3h6l-3 3.5zM1160.0 1020.1h6l-3 3.5zM1170.0 982.4h6l-3 3.5zM962.4 228.0h6l-3 3.5zM1288.0 649.6h6l-3 3.5zM1229.2 808.2h6l-3 3.5zM1186.0 664.3h6l-3 3.5zM896.1 1000.1h6l-3 3.5zM1537.2 843.7h6l-3 3.5zM874.8 553.6h6l-3 3.5zM1163.4 654.9h6l-3 3.5zM1690.3 763.9h6l-3 3.5zM957.9 639.7h6l-3 3.5zM1667.8 834.9h6l-3 3.5zM1009.7 854.7h6l-3 3.5zM1054.5 1170.3h6l-3 3.5zM899.1 516.0h6l-3 3.5zM1129.3 604.2h6l-3 3.5zM1085.7 830.3h6l-3 3.5zM1125.0 755.4h6l-3 3.5zM987.3 366.1h6l-3 3.5zM967.6 348.2h6l-3 3.5zM1684.2 604.8h6l-3 3.5zM916.4 260.8h6l-3 3.5zM1219.7 916.6h6l-3 3.5zM957.4 968.0h6l-3 3.5zM1692.0 753.1h6l-3 3.5zM1096.9 823.2h6l-3 3.5zM970.7 477.7h6l-3 3.5zM916.2 1079.5h6l-3 3.5zM1228.8 601.6h6l-3 3.5zM942.9 293.9h6l-3 3.5zM1665.5 635.4h6l-3 3.5zM1464.8 829.2h6l-3 3.5zM1261.5 877.0h6l-3 3.5zM958.0 417.6h6l-3 3.5zM932.5 415.4h6l-3 3.5zM1396.0 601.4h6l-3 3.5zM910.9 269.1h6l-3 3.5zM1648.8 903.3h6l-3 3.5zM1256.2 722.6h6l-3 3.5zM1191.3 641.2h6l-3 3.5zM1632.9 934.6h6l-3 3.5zM1024.9 616.9h6l-3 3.5zM1639.5 782.2h6l-3 3.5zM1682.3 577.8h6l-3 3.5zM1208.5 945.9h6l-3 3.5zM977.4 1156.6h6l-3 3.5zM1140.0 892.1h6l-3 3.5zM1017.4 746.3h6l-3 3.5zM1142.0 657.6h6l-3 3.5zM1589.6 722.2h6l-3 3.5zM945.5 535.2h6l-3 3.5zM979.1 1127.0h6l-3 3.5zM903.6 257.6h6l-3 3.5zM1160.3 665.2h6l-3 3.5zM1359.7 668.2h6l-3 3.5zM1689.0 750.5h6l-3 3.5zM922.0 729.2h6l-3 3.5zM962.6 238.4h6l-3 3.5zM963.9 289.4h6l-3 3.5zM1547.3 1037.4h6l-3 3.5zM917.0 490.6h6l-3 3.5zM882.1 268.5h6l-3 3.5zM1528.6 1061.9h6l-3 3.5zM875.2 645.0h6l-3 3.5zM955.6 234.1h6l-3 3.5zM955.7 238.1h6l-3 3.5zM1553.6 1042.9h6l-3 3.5zM875.3 579.2h6l-3 3.5zM875.9 554.1h6l-3 3.5zM1108.2 1024.0h6l-3 3.5zM1356.5 745.5h6l-3 3.5zM881.9 915.1h6l-3 3.5zM884.4 365.4h6l-3 3.5zM1683.0 595.8h6l-3 3.5zM1345.0 726.8h6l-3 3.5zM1220.0 566.2h6l-3 3.5zM1619.6 818.2h6l-3 3.5zM1665.9 594.4h6l-3 3.5zM976.2 690.6h6l-3 3.5zM1628.7 919.9h6l-3 3.5zM1679.6 717.3h6l-3 3.5zM1131.8 704.3h6l-3 3.5zM1273.9 626.9h6l-3 3.5zM1680.7 813.1h6l-3 3.5zM1186.3 586.8h6l-3 3.5zM1142.0 809.2h6l-3 3.5zM1246.3 610.3h6l-3 3.5zM1052.1 1114.9h6l-3 3.5zM978.1 1158.3h6l-3 3.5zM961.1 552.4h6l-3 3.5zM969.5 439.4h6l-3 3.5zM1648.0 890.0h6l-3 3.5zM899.0 1118.4h6l-3 3.5zM1594.2 991.6h6l-3 3.5zM941.1 410.1h6l-3 3.5zM873.4 532.2h6l-3 3.5zM1125.3 923.7h6l-3 3.5zM1021.5 1161.6h6l-3 3.5zM939.4 628.5h6l-3 3.5zM1559.6 1031.5h6l-3 3.5zM1481.6 1063.2h6l-3 3.5zM872.0 1089.8h6l-3 3.5zM1239.9 1011.1h6l-3 3.5zM967.9 228.2h6l-3 3.5zM1688.6 718.1h6l-3 3.5zM923.7 310.2h6l-3 3.5zM1049.4 1076.1h6l-3 3.5zM1005.1 1163.3h6l-3 3.5zM994.7 1015.5h6l-3 3.5zM1658.1 854.6h6l-3 3.5zM1249.9 1024.9h6l-3 3.5zM904.7 308.6h6l-3 3.5zM987.8 588.7h6l-3 3.5zM944.4 1040.8h6l-3 3.5zM1660.0 877.4h6l-3 3.5zM1693.9 638.3h6l-3 3.5zM1685.9 777.7h6l-3 3.5zM1192.8 586.3h6l-3 3.5zM981.6 219.4h6l-3 3.5zM1005.0 627.5h6l-3 3.5zM958.7 745.4h6l-3 3.5zM936.5 1008.4h6l-3 3.5zM894.0 266.7h6l-3 3.5zM877.3 999.5h6l-3 3.5zM1548.9 1038.3h6l-3 3.5zM1688.8 733.7h6l-3 3.5zM940.6 528.6h6l-3 3.5zM941.8 483.4h6l-3 3.5zM1023.8 725.8h6l-3 3.5zM978.3 315.9h6l-3 3.5zM1241.7 1015.8h6l-3 3.5zM1678.2 782.6h6l-3 3.5zM900.9 255.4h6l-3 3.5zM1255.6 1018.0h6l-3 3.5zM884.3 839.7h6l-3 3.5zM904.0 655.8h6l-3 3.5zM1571.8 1021.2h6l-3 3.5zM1695.4 656.0h6l-3 3.5zM987.5 209.4h6l-3 3.5zM1039.6 1019.1h6l-3 3.5zM1675.1 554.8h6l-3 3.5zM902.7 589.7h6l-3 3.5zM1636.0 799.8h6l-3 3.5zM1466.9 1083.7h6l-3 3.5zM1007.6 916.1h6l-3 3.5zM893.2 472.4h6l-3 3.5zM992.1 251.4h6l-3 3.5zM896.7 357.5h6l-3 3.5zM1259.6 743.8h6l-3 3.5zM1614.0 854.5h6l-3 3.5zM1050.2 1056.3h6l-3 3.5zM937.6 431.2h6l-3 3.5zM949.3 415.5h6l-3 3.5zM931.7 236.9h6l-3 3.5zM1653.0 573.6h6l-3 3.5zM1490.9 1089.9h6l-3 3.5zM908.8 251.9h6l-3 3.5zM1663.4 862.7h6l-3 3.5zM1480.5 1106.2h6l-3 3.5zM967.5 515.2h6l-3 3.5zM927.8 526.5h6l-3 3.5zM1008.1 1171.7h6l-3 3.5zM1018.7 1099.7h6l-3 3.5zM1534.6 652.2h6l-3 3.5zM1303.8 953.8h6l-3 3.5zM968.6 901.1h6l-3 3.5zM1147.0 718.0h6l-3 3.5zM1561.5 1032.4h6l-3 3.5zM1689.4 771.7h6l-3 3.5zM872.4 1018.3h6l-3 3.5zM1631.0 773.8h6l-3 3.5zM1167.5 856.4h6l-3 3.5zM1058.7 708.8h6l-3 3.5zM895.3 1032.0h6l-3 3.5zM921.6 703.0h6l-3 3.5zM1644.2 896.2h6l-3 3.5zM904.6 295.7h6l-3 3.5zM1229.5 1104.3h6l-3 3.5zM1513.9 1080.5h6l-3 3.5zM930.6 270.2h6l-3 3.5zM954.9 930.5h6l-3 3.5zM1685.0 736.6h6l-3 3.5zM961.3 229.7h6l-3 3.5zM974.9 373.9h6l-3 3.5zM939.2 267.8h6l-3 3.5zM1089.9 900.6h6l-3 3.5zM1017.8 1174.2h6l-3 3.5zM1025.9 1064.1h6l-3 3.5zM1299.0 883.2h6l-3 3.5zM1496.4 1030.7h6l-3 3.5zM1363.0 1096.0h6l-3 3.5zM1638.0 660.1h6l-3 3.5zM1189.6 967.8h6l-3 3.5zM1203.3 991.4h6l-3 3.5zM1687.0 757.8h6l-3 3.5zM1679.4 702.5h6l-3 3.5zM1561.3 1010.1h6l-3 3.5zM939.0 678.6h6l-3 3.5zM904.0 1010.1h6l-3 3.5zM1163.0 1010.7h6l-3 3.5zM1497.0 1093.1h6l-3 3.5zM906.9 250.5h6l-3 3.5zM1196.7 655.0h6l-3 3.5zM1189.7 590.1h6l-3 3.5zM901.5 504.6h6l-3 3.5zM900.8 361.2h6l-3 3.5zM1236.2 1010.9h6l-3 3.5zM1691.8 694.9h6l-3 3.5zM1686.6 651.5h6l-3 3.5zM882.5 281.7h6l-3 3.5zM1604.6 979.2h6l-3 3.5zM1690.2 739.8h6l-3 3.5zM1655.0 867.2h6l-3 3.5zM1641.1 738.4h6l-3 3.5zM1681.2 759.3h6l-3 3.5zM1640.5 681.7h6l-3 3.5zM949.5 246.5h6l-3 3.5zM949.6 244.7h6l-3 3.5zM918.7 255.6h6l-3 3.5zM1481.7 644.0h6l-3 3.5zM1025.9 1155.6h6l-3 3.5zM990.9 288.4h6l-3 3.5zM1140.9 984.9h6l-3 3.5zM882.8 984.4h6l-3 3.5zM955.3 363.2h6l-3 3.5zM952.9 1025.7h6l-3 3.5zM966.3 307.0h6l-3 3.5zM1214.5 721.9h6l-3 3.5zM915.1 264.1h6l-3 3.5zM1038.9 1084.0h6l-3 3.5zM1616.3 960.9h6l-3 3.5zM969.6 434.2h6l-3 3.5zM924.8 799.4h6l-3 3.5zM1298.2 593.3h6l-3 3.5zM1020.2 1112.2h6l-3 3.5zM958.1 417.1h6l-3 3.5zM888.1 354.9h6l-3 3.5zM1598.8 985.3h6l-3 3.5zM1206.9 1190.9h6l-3 3.5zM1020.7 863.8h6l-3 3.5zM1675.5 675.4h6l-3 3.5zM1494.0 677.5h6l-3 3.5zM1181.1 908.1h6l-3 3.5zM959.4 356.2h6l-3 3.5zM1654.7 832.0h6l-3 3.5zM905.8 251.1h6l-3 3.5zM901.5 309.3h6l-3 3.5zM1155.2 957.3h6l-3 3.5zM933.8 300.4h6l-3 3.5zM887.9 270.5h6l-3 3.5zM1556.0 707.3h6l-3 3.5zM888.5 1065.3h6l-3 3.5zM1037.1 826.3h6l-3 3.5zM963.8 991.8h6l-3 3.5zM1683.7 800.2h6l-3 3.5zM896.5 1100.6h6l-3 3.5zM911.1 314.2h6l-3 3.5zM1283.4 1105.7h6l-3 3.5zM1646.9 534.7h6l-3 3.5zM1056.4 707.1h6l-3 3.5zM1650.8 831.5h6l-3 3.5zM1018.2 1176.1h6l-3 3.5zM874.5 505.3h6l-3 3.5zM875.2 703.7h6l-3 3.5zM1479.1 979.9h6l-3 3.5zM1501.6 1067.0h6l-3 3.5zM1585.0 1005.7h6l-3 3.5zM1601.7 963.3h6l-3 3.5zM1282.4 729.9h6l-3 3.5zM1263.0 577.2h6l-3 3.5zM1047.3 743.8h6l-3 3.5zM1654.5 540.3h6l-3 3.5zM1010.3 681.8h6l-3 3.5zM1668.0 843.3h6l-3 3.5zM960.9 647.0h6l-3 3.5zM1197.4 985.2h6l-3 3.5zM1104.7 725.1h6l-3 3.5zM980.5 275.0h6l-3 3.5zM1500.6 667.4h6l-3 3.5zM898.4 380.2h6l-3 3.5zM920.7 357.2h6l-3 3.5zM1668.6 691.2h6l-3 3.5zM1278.6 772.2h6l-3 3.5zM1641.5 772.6h6l-3 3.5zM874.0 273.1h6l-3 3.5zM1645.4 885.1h6l-3 3.5zM974.1 790.2h6l-3 3.5zM1102.1 887.7h6l-3 3.5zM885.6 328.7h6l-3 3.5zM1690.1 767.0h6l-3 3.5zM1129.5 572.8h6l-3 3.5zM1625.0 930.2h6l-3 3.5zM1045.2 979.6h6l-3 3.5zM949.5 757.9h6l-3 3.5zM1108.4 753.4h6l-3 3.5zM1149.7 909.2h6l-3 3.5zM977.4 439.7h6l-3 3.5zM1083.6 1189.6h6l-3 3.5zM943.8 260.0h6l-3 3.5zM989.1 210.8h6l-3 3.5zM1671.0 754.1h6l-3 3.5zM877.9 270.1h6l-3 3.5zM916.6 602.1h6l-3 3.5zM943.1 460.9h6l-3 3.5zM936.1 247.8h6l-3 3.5zM959.1 251.1h6l-3 3.5zM1689.2 680.4h6l-3 3.5zM877.5 1048.3h6l-3 3.5zM903.5 258.7h6l-3 3.5zM880.1 361.7h6l-3 3.5zM882.2 490.4h6l-3 3.5zM887.8 909.3h6l-3 3.5zM1238.5 685.0h6l-3 3.5zM1223.4 582.2h6l-3 3.5zM1255.3 1006.2h6l-3 3.5zM1043.1 1134.4h6l-3 3.5zM1626.7 858.4h6l-3 3.5zM949.3 1147.1h6l-3 3.5zM985.8 212.8h6l-3 3.5zM913.5 971.9h6l-3 3.5zM1132.4 576.7h6l-3 3.5zM1316.9 747.6h6l-3 3.5zM1056.4 1135.4h6l-3 3.5zM1497.6 1046.5h6l-3 3.5zM915.5 708.7h6l-3 3.5zM1087.4 801.2h6l-3 3.5zM938.8 258.6h6l-3 3.5zM1205.3 691.1h6l-3 3.5zM1104.6 1165.7h6l-3 3.5zM1038.7 1160.9h6l-3 3.5zM1011.8 747.0h6l-3 3.5zM950.3 226.1h6l-3 3.5zM982.4 473.5h6l-3 3.5zM926.1 239.4h6l-3 3.5zM1558.8 1035.7h6l-3 3.5zM1135.4 690.3h6l-3 3.5zM1611.4 962.4h6l-3 3.5zM1606.1 963.4h6l-3 3.5zM996.3 321.0h6l-3 3.5zM1255.9 1194.7h6l-3 3.5zM938.0 565.8h6l-3 3.5zM1665.8 861.5h6l-3 3.5zM1046.4 631.8h6l-3 3.5zM941.9 420.9h6l-3 3.5zM1692.4 748.0h6l-3 3.5zM1034.6 1026.8h6l-3 3.5zM1044.3 923.0h6l-3 3.5zM920.1 807.0h6l-3 3.5zM1316.6 764.8h6l-3 3.5zM1158.6 1191.6h6l-3 3.5zM948.0 483.6h6l-3 3.5zM1610.9 687.2h6l-3 3.5zM1682.4 798.7h6l-3 3.5zM976.8 229.2h6l-3 3.5zM924.3 538.1h6l-3 3.5zM1615.3 960.6h6l-3 3.5zM1658.0 880.9h6l-3 3.5zM929.9 483.5h6l-3 3.5zM1686.2 720.5h6l-3 3.5zM1517.8 916.5h6l-3 3.5zM980.2 716.6h6l-3 3.5zM880.5 690.5h6l-3 3.5zM949.3 909.2h6l-3 3.5zM1268.1 771.2h6l-3 3.5zM923.8 422.7h6l-3 3.5zM909.6 408.7h6l-3 3.5zM1025.9 969.4h6l-3 3.5zM948.5 693.7h6l-3 3.5zM1148.1 571.0h6l-3 3.5zM1621.2 938.6h6l-3 3.5zM1663.9 867.0h6l-3 3.5zM975.5 1084.0h6l-3 3.5zM1452.6 999.1h6l-3 3.5zM885.3 436.4h6l-3 3.5zM1655.4 865.8h6l-3 3.5zM932.9 578.6h6l-3 3.5zM941.1 947.7h6l-3 3.5zM989.5 993.5h6l-3 3.5zM911.8 261.1h6l-3 3.5zM913.1 285.5h6l-3 3.5zM890.3 294.7h6l-3 3.5zM927.7 238.2h6l-3 3.5zM1633.6 933.4h6l-3 3.5zM900.5 901.5h6l-3 3.5zM1319.2 717.8h6l-3 3.5zM1530.7 1065.2h6l-3 3.5zM964.4 1110.9h6l-3 3.5zM892.6 512.2h6l-3 3.5zM1491.6 1093.9h6l-3 3.5zM1238.1 607.5h6l-3 3.5zM877.3 1054.1h6l-3 3.5zM962.2 222.6h6l-3 3.5zM909.8 663.7h6l-3 3.5zM1678.6 719.8h6l-3 3.5zM1579.5 991.5h6l-3 3.5zM902.3 1076.8h6l-3 3.5zM951.1 279.1h6l-3 3.5zM923.2 553.8h6l-3 3.5zM1099.2 578.4h6l-3 3.5zM980.5 982.7h6l-3 3.5zM1666.2 838.3h6l-3 3.5zM1594.0 851.3h6l-3 3.5zM1683.1 770.0h6l-3 3.5zM1649.0 902.4h6l-3 3.5zM979.1 439.8h6l-3 3.5zM1634.2 911.8h6l-3 3.5zM879.0 824.1h6l-3 3.5zM1647.9 500.3h6l-3 3.5zM929.2 520.8h6l-3 3.5zM1046.1 1048.5h6l-3 3.5zM1635.7 925.6h6l-3 3.5zM902.0 877.1h6l-3 3.5zM943.8 928.6h6l-3 3.5zM1652.6 479.3h6l-3 3.5zM1275.6 736.0h6l-3 3.5zM890.9 675.8h6l-3 3.5zM918.8 926.1h6l-3 3.5zM874.0 452.6h6l-3 3.5zM898.9 337.8h6l-3 3.5zM1138.5 605.7h6l-3 3.5zM1006.0 912.4h6l-3 3.5zM1021.6 595.5h6l-3 3.5zM905.4 312.1h6l-3 3.5zM1058.3 918.8h6l-3 3.5zM1632.4 868.7h6l-3 3.5zM1686.6 763.5h6l-3 3.5zM1653.5 529.7h6l-3 3.5zM919.1 249.0h6l-3 3.5zM1233.9 969.4h6l-3 3.5zM1058.2 991.4h6l-3 3.5zM1204.4 1002.1h6l-3 3.5zM1674.9 831.8h6l-3 3.5zM915.1 296.8h6l-3 3.5zM1326.3 742.4h6l-3 3.5zM1652.6 623.2h6l-3 3.5zM976.6 655.9h6l-3 3.5zM979.5 1018.2h6l-3 3.5zM912.5 447.0h6l-3 3.5zM984.0 210.8h6l-3 3.5zM1128.1 878.1h6l-3 3.5zM1581.7 998.4h6l-3 3.5zM902.0 992.5h6l-3 3.5zM1632.8 774.5h6l-3 3.5zM981.3 528.5h6l-3 3.5zM875.0 322.0h6l-3 3.5zM1515.2 979.8h6l-3 3.5zM892.6 285.1h6l-3 3.5zM1012.1 724.6h6l-3 3.5zM1622.8 656.6h6l-3 3.5zM928.2 556.7h6l-3 3.5zM1521.8 929.0h6l-3 3.5zM1046.0 1002.8h6l-3 3.5zM894.3 1058.3h6l-3 3.5zM934.3 483.4h6l-3 3.5zM1008.7 887.6h6l-3 3.5zM951.4 351.2h6l-3 3.5zM1233.2 967.6h6l-3 3.5zM1482.8 864.8h6l-3 3.5zM883.3 508.0h6l-3 3.5zM962.3 948.0h6l-3 3.5zM1000.8 896.5h6l-3 3.5zM1015.4 650.6h6l-3 3.5zM887.6 539.9h6l-3 3.5zM911.7 958.1h6l-3 3.5zM945.0 440.6h6l-3 3.5zM1160.7 570.2h6l-3 3.5zM1125.7 1000.9h6l-3 3.5zM1030.5 568.8h6l-3 3.5zM954.8 1099.4h6l-3 3.5zM995.2 262.3h6l-3 3.5zM1420.8 901.6h6l-3 3.5zM1090.4 739.4h6l-3 3.5zM1648.4 904.0h6l-3 3.5zM1172.1 634.7h6l-3 3.5zM1308.8 743.5h6l-3 3.5zM1051.6 961.2h6l-3 3.5zM1693.8 739.6h6l-3 3.5zM1396.2 978.4h6l-3 3.5zM925.7 659.0h6l-3 3.5zM1186.4 1006.8h6l-3 3.5zM876.6 1044.3h6l-3 3.5zM930.8 238.9h6l-3 3.5zM985.4 809.1h6l-3 3.5zM1606.9 958.4h6l-3 3.5zM1261.4 947.8h6l-3 3.5zM970.2 693.2h6l-3 3.5zM933.9 246.6h6l-3 3.5zM1660.4 653.8h6l-3 3.5zM996.5 899.1h6l-3 3.5zM1679.5 806.8h6l-3 3.5zM973.0 230.0h6l-3 3.5zM1004.7 1047.1h6l-3 3.5zM947.8 569.0h6l-3 3.5zM1061.4 567.5h6l-3 3.5zM1208.8 692.5h6l-3 3.5zM1570.1 1012.9h6l-3 3.5zM1182.9 855.9h6l-3 3.5zM1028.0 661.1h6l-3 3.5zM1355.9 750.8h6l-3 3.5zM1678.8 566.7h6l-3 3.5zM938.3 384.0h6l-3 3.5zM1660.9 764.8h6l-3 3.5zM946.7 860.0h6l-3 3.5zM1055.9 907.0h6l-3 3.5zM1488.0 1093.9h6l-3 3.5zM1078.6 1191.9h6l-3 3.5zM1128.4 674.1h6l-3 3.5zM1653.3 885.5h6l-3 3.5zM999.2 1076.8h6l-3 3.5zM996.6 1063.7h6l-3 3.5zM988.4 1075.2h6l-3 3.5zM992.2 1061.3h6l-3 3.5zM1016.0 1065.1h6l-3 3.5zM981.6 1065.1h6l-3 3.5zM998.0 1077.9h6l-3 3.5zM964.8 1068.6h6l-3 3.5zM985.8 1089.7h6l-3 3.5zM988.4 1050.6h6l-3 3.5zM980.2 1077.2h6l-3 3.5zM977.1 1082.7h6l-3 3.5zM976.8 1077.8h6l-3 3.5zM999.8 1068.7h6l-3 3.5zM990.9 1069.1h6l-3 3.5zM987.4 1078.6h6l-3 3.5zM996.6 1049.1h6l-3 3.5zM1003.0 1066.4h6l-3 3.5zM980.0 1056.8h6l-3 3.5zM992.7 1074.9h6l-3 3.5zM975.1 1096.5h6l-3 3.5zM1030.2 1079.2h6l-3 3.5zM975.8 1094.7h6l-3 3.5zM975.7 1068.7h6l-3 3.5zM1000.8 1066.8h6l-3 3.5zM985.2 1071.8h6l-3 3.5zM1352.7 953.0h6l-3 3.5zM1332.0 956.8h6l-3 3.5zM1349.5 939.7h6l-3 3.5zM1327.8 948.8h6l-3 3.5zM1329.8 956.3h6l-3 3.5zM1336.8 945.6h6l-3 3.5zM1332.6 961.5h6l-3 3.5zM1334.2 951.0h6l-3 3.5zM1343.4 961.6h6l-3 3.5zM1336.1 947.3h6l-3 3.5zM1149.8 962.5h6l-3 3.5zM1192.4 1005.5h6l-3 3.5zM1173.6 989.0h6l-3 3.5zM1151.0 996.3h6l-3 3.5zM1232.6 978.7h6l-3 3.5zM1179.6 1006.9h6l-3 3.5zM1166.4 988.5h6l-3 3.5zM1190.6 975.4h6l-3 3.5zM1163.5 977.5h6l-3 3.5zM1170.8 994.4h6l-3 3.5zM1214.8 972.1h6l-3 3.5zM1157.3 1004.4h6l-3 3.5zM1183.9 974.3h6l-3 3.5zM1151.8 996.4h6l-3 3.5zM1154.6 980.3h6l-3 3.5zM1200.4 1000.7h6l-3 3.5zM1160.8 1000.6h6l-3 3.5zM1159.9 968.5h6l-3 3.5zM1156.1 1003.0h6l-3 3.5zM1179.6 991.3h6l-3 3.5zM1190.6 992.0h6l-3 3.5zM1168.4 987.5h6l-3 3.5zM1191.5 999.5h6l-3 3.5zM1172.5 993.9h6l-3 3.5zM1174.5 962.1h6l-3 3.5zM1205.0 964.3h6l-3 3.5zM1191.1 957.8h6l-3 3.5zM1192.8 956.8h6l-3 3.5zM1222.7 965.3h6l-3 3.5zM1220.3 967.8h6l-3 3.5zM1210.7 955.3h6l-3 3.5zM1202.7 960.1h6l-3 3.5zM1215.4 954.1h6l-3 3.5zM1220.7 958.4h6l-3 3.5zM1220.6 957.1h6l-3 3.5zM1205.8 978.5h6l-3 3.5zM1217.6 1048.4h6l-3 3.5zM1222.5 1049.5h6l-3 3.5zM1217.3 1044.2h6l-3 3.5zM1219.9 1043.7h6l-3 3.5zM1221.8 1039.2h6l-3 3.5zM1117.0 841.4h6l-3 3.5zM1106.7 845.1h6l-3 3.5zM1117.8 844.2h6l-3 3.5zM1112.8 840.2h6l-3 3.5zM881.8 569.3h6l-3 3.5zM872.9 578.9h6l-3 3.5zM878.3 571.2h6l-3 3.5zM876.9 575.0h6l-3 3.5zM881.5 569.0h6l-3 3.5zM871.8 566.0h6l-3 3.5zM894.7 572.1h6l-3 3.5zM874.9 567.4h6l-3 3.5zM876.2 568.3h6l-3 3.5zM975.2 239.8h6l-3 3.5zM930.0 218.2h6l-3 3.5zM926.9 280.8h6l-3 3.5zM914.0 244.1h6l-3 3.5zM911.4 253.4h6l-3 3.5zM936.2 248.5h6l-3 3.5zM923.3 263.6h6l-3 3.5zM952.5 257.2h6l-3 3.5zM939.3 236.1h6l-3 3.5zM876.8 230.2h6l-3 3.5zM948.8 280.0h6l-3 3.5zM871.0 252.4h6l-3 3.5zM961.5 220.7h6l-3 3.5zM944.0 256.2h6l-3 3.5zM965.1 257.5h6l-3 3.5zM924.5 252.5h6l-3 3.5zM936.7 231.0h6l-3 3.5zM933.0 274.4h6l-3 3.5zM959.5 253.7h6l-3 3.5zM985.6 237.8h6l-3 3.5zM898.2 239.4h6l-3 3.5zM966.1 265.2h6l-3 3.5zM907.4 247.5h6l-3 3.5zM912.9 249.3h6l-3 3.5zM948.6 221.9h6l-3 3.5zM959.2 273.6h6l-3 3.5zM943.9 247.7h6l-3 3.5zM967.4 263.9h6l-3 3.5zM929.4 259.3h6l-3 3.5zM1252.0 602.7h6l-3 3.5zM1244.2 601.1h6l-3 3.5zM1249.5 599.6h6l-3 3.5zM1252.8 601.3h6l-3 3.5zM1246.1 603.2h6l-3 3.5zM1244.9 596.8h6l-3 3.5z" fill="#f0202c" opacity=".93"/>
<circle cx="940" cy="633" r="26" fill="#c8c8c8" opacity=".8" filter="url(#bl)"/><path d="M913.6 632.1l5.3 5.3m0 -5.3l-5.3 5.3M940.2 640.9l4.7 4.7m0 -4.7l-4.7 4.7M957.6 620.8l5.6 5.6m0 -5.6l-5.6 5.6M936.8 642.0l3.9 3.9m0 -3.9l-3.9 3.9M931.9 645.1l5.4 5.4m0 -5.4l-5.4 5.4M926.8 633.9l5.0 5.0m0 -5.0l-5.0 5.0M935.1 649.8l3.9 3.9m0 -3.9l-3.9 3.9M913.9 641.3l4.3 4.3m0 -4.3l-4.3 4.3M941.4 610.7l5.1 5.1m0 -5.1l-5.1 5.1M916.3 646.4l6.3 6.3m0 -6.3l-6.3 6.3M951.3 632.3l4.2 4.2m0 -4.2l-4.2 4.2M950.6 654.1l3.9 3.9m0 -3.9l-3.9 3.9M961.3 643.4l4.7 4.7m0 -4.7l-4.7 4.7M955.7 639.6l5.9 5.9m0 -5.9l-5.9 5.9M946.4 634.1l3.6 3.6m0 -3.6l-3.6 3.6M944.0 624.2l6.4 6.4m0 -6.4l-6.4 6.4M929.8 640.3l4.7 4.7m0 -4.7l-4.7 4.7M934.2 636.2l4.4 4.4m0 -4.4l-4.4 4.4M923.1 612.5l5.6 5.6m0 -5.6l-5.6 5.6M960.7 641.3l6.0 6.0m0 -6.0l-6.0 6.0M920.3 642.0l4.8 4.8m0 -4.8l-4.8 4.8M924.5 627.7l5.9 5.9m0 -5.9l-5.9 5.9M941.1 642.1l6.0 6.0m0 -6.0l-6.0 6.0M941.2 640.5l5.1 5.1m0 -5.1l-5.1 5.1M942.2 622.2l4.9 4.9m0 -4.9l-4.9 4.9M952.2 615.8l6.3 6.3m0 -6.3l-6.3 6.3M938.9 602.8l6.4 6.4m0 -6.4l-6.4 6.4M946.1 651.0l5.2 5.2m0 -5.2l-5.2 5.2M964.1 629.4l5.1 5.1m0 -5.1l-5.1 5.1M947.6 603.9l5.5 5.5m0 -5.5l-5.5 5.5M922.6 620.5l6.3 6.3m0 -6.3l-6.3 6.3M938.1 650.6l5.2 5.2m0 -5.2l-5.2 5.2M932.5 627.6l5.1 5.1m0 -5.1l-5.1 5.1M950.5 626.8l5.0 5.0m0 -5.0l-5.0 5.0M957.2 621.1l4.8 4.8m0 -4.8l-4.8 4.8M958.9 615.2l4.2 4.2m0 -4.2l-4.2 4.2M933.0 623.6l5.3 5.3m0 -5.3l-5.3 5.3M941.4 604.3l4.8 4.8m0 -4.8l-4.8 4.8M947.5 621.8l4.1 4.1m0 -4.1l-4.1 4.1M923.1 637.3l5.6 5.6m0 -5.6l-5.6 5.6M955.6 628.8l6.2 6.2m0 -6.2l-6.2 6.2M928.3 652.2l4.5 4.5m0 -4.5l-4.5 4.5M950.6 641.7l5.4 5.4m0 -5.4l-5.4 5.4M947.7 652.1l3.9 3.9m0 -3.9l-3.9 3.9M943.2 650.0l6.3 6.3m0 -6.3l-6.3 6.3M945.4 618.7l3.8 3.8m0 -3.8l-3.8 3.8M956.5 630.9l4.3 4.3m0 -4.3l-4.3 4.3M928.5 640.8l3.8 3.8m0 -3.8l-3.8 3.8M921.1 611.5l4.6 4.6m0 -4.6l-4.6 4.6M940.6 606.4l6.1 6.1m0 -6.1l-6.1 6.1M947.8 631.3l4.9 4.9m0 -4.9l-4.9 4.9M914.5 635.6l6.1 6.1m0 -6.1l-6.1 6.1M959.4 615.3l3.9 3.9m0 -3.9l-3.9 3.9M942.0 652.2l5.9 5.9m0 -5.9l-5.9 5.9M947.5 655.5l3.8 3.8m0 -3.8l-3.8 3.8M941.6 617.0l6.4 6.4m0 -6.4l-6.4 6.4M916.9 617.3l3.7 3.7m0 -3.7l-3.7 3.7M948.4 604.0l6.3 6.3m0 -6.3l-6.3 6.3M937.1 637.3l4.7 4.7m0 -4.7l-4.7 4.7M959.2 632.5l6.1 6.1m0 -6.1l-6.1 6.1M922.7 638.5l4.5 4.5m0 -4.5l-4.5 4.5M921.4 650.0l6.0 6.0m0 -6.0l-6.0 6.0M917.4 642.5l5.4 5.4m0 -5.4l-5.4 5.4M932.0 634.7l4.5 4.5m0 -4.5l-4.5 4.5M920.3 647.3l5.0 5.0m0 -5.0l-5.0 5.0M925.0 614.6l6.2 6.2m0 -6.2l-6.2 6.2M956.0 617.8l4.1 4.1m0 -4.1l-4.1 4.1M919.6 625.0l5.0 5.0m0 -5.0l-5.0 5.0M939.2 637.0l5.8 5.8m0 -5.8l-5.8 5.8M951.5 632.1l4.5 4.5m0 -4.5l-4.5 4.5M954.1 648.1l4.5 4.5m0 -4.5l-4.5 4.5M962.1 642.8l5.1 5.1m0 -5.1l-5.1 5.1M927.3 628.5l6.1 6.1m0 -6.1l-6.1 6.1M946.3 626.4l5.7 5.7m0 -5.7l-5.7 5.7M959.7 638.1l4.7 4.7m0 -4.7l-4.7 4.7M939.5 635.5l4.7 4.7m0 -4.7l-4.7 4.7M963.9 619.4l3.9 3.9m0 -3.9l-3.9 3.9M915.7 638.2l5.4 5.4m0 -5.4l-5.4 5.4M947.1 607.7l6.3 6.3m0 -6.3l-6.3 6.3M959.7 638.5l5.4 5.4m0 -5.4l-5.4 5.4M933.1 609.1l4.7 4.7m0 -4.7l-4.7 4.7M934.9 616.8l3.9 3.9m0 -3.9l-3.9 3.9M924.5 622.0l5.7 5.7m0 -5.7l-5.7 5.7M951.4 649.8l5.5 5.5m0 -5.5l-5.5 5.5M934.4 621.0l4.9 4.9m0 -4.9l-4.9 4.9M912.4 620.8l5.2 5.2m0 -5.2l-5.2 5.2M919.2 638.2l5.0 5.0m0 -5.0l-5.0 5.0M913.8 638.1l4.1 4.1m0 -4.1l-4.1 4.1M954.8 611.4l5.8 5.8m0 -5.8l-5.8 5.8M923.2 627.9l4.6 4.6m0 -4.6l-4.6 4.6M963.7 637.5l4.5 4.5m0 -4.5l-4.5 4.5M944.6 623.4l3.8 3.8m0 -3.8l-3.8 3.8M916.7 636.1l4.0 4.0m0 -4.0l-4.0 4.0M932.9 602.5l4.1 4.1m0 -4.1l-4.1 4.1M925.8 645.7l6.3 6.3m0 -6.3l-6.3 6.3M915.7 636.7l6.0 6.0m0 -6.0l-6.0 6.0M956.9 632.5l4.1 4.1m0 -4.1l-4.1 4.1M946.9 636.5l5.9 5.9m0 -5.9l-5.9 5.9M922.7 643.0l5.7 5.7m0 -5.7l-5.7 5.7M943.7 613.1l3.8 3.8m0 -3.8l-3.8 3.8M957.7 627.6l5.2 5.2m0 -5.2l-5.2 5.2M957.9 623.2l5.7 5.7m0 -5.7l-5.7 5.7M949.0 634.3l4.9 4.9m0 -4.9l-4.9 4.9M966.1 625.7l4.8 4.8m0 -4.8l-4.8 4.8M913.8 643.4l5.5 5.5m0 -5.5l-5.5 5.5M908.5 626.7l4.7 4.7m0 -4.7l-4.7 4.7M952.0 605.3l5.4 5.4m0 -5.4l-5.4 5.4M924.8 624.8l4.4 4.4m0 -4.4l-4.4 4.4M960.4 624.7l5.7 5.7m0 -5.7l-5.7 5.7M948.7 629.6l5.5 5.5m0 -5.5l-5.5 5.5M931.5 641.9l6.4 6.4m0 -6.4l-6.4 6.4M949.5 623.8l3.7 3.7m0 -3.7l-3.7 3.7M941.9 636.8l5.7 5.7m0 -5.7l-5.7 5.7M928.9 646.3l4.2 4.2m0 -4.2l-4.2 4.2M964.4 628.9l5.5 5.5m0 -5.5l-5.5 5.5M925.7 625.6l4.8 4.8m0 -4.8l-4.8 4.8M919.5 616.2l6.3 6.3m0 -6.3l-6.3 6.3M922.5 649.9l4.0 4.0m0 -4.0l-4.0 4.0M956.8 645.8l5.2 5.2m0 -5.2l-5.2 5.2M949.4 621.0l4.8 4.8m0 -4.8l-4.8 4.8M917.7 621.7l4.8 4.8m0 -4.8l-4.8 4.8M919.5 620.3l5.4 5.4m0 -5.4l-5.4 5.4M924.1 621.8l4.7 4.7m0 -4.7l-4.7 4.7M964.4 620.6l5.8 5.8m0 -5.8l-5.8 5.8M946.5 637.5l4.4 4.4m0 -4.4l-4.4 4.4M914.9 633.5l3.8 3.8m0 -3.8l-3.8 3.8M951.0 614.4l5.3 5.3m0 -5.3l-5.3 5.3M964.3 625.0l5.6 5.6m0 -5.6l-5.6 5.6M966.9 633.4l3.7 3.7m0 -3.7l-3.7 3.7M935.9 622.0l3.7 3.7m0 -3.7l-3.7 3.7M949.4 652.3l4.9 4.9m0 -4.9l-4.9 4.9M919.0 626.0l3.8 3.8m0 -3.8l-3.8 3.8M955.0 651.0l5.1 5.1m0 -5.1l-5.1 5.1M948.7 610.7l5.1 5.1m0 -5.1l-5.1 5.1M948.9 631.2l4.0 4.0m0 -4.0l-4.0 4.0M939.0 601.8l5.4 5.4m0 -5.4l-5.4 5.4M926.1 653.7l5.3 5.3m0 -5.3l-5.3 5.3M921.7 624.8l4.5 4.5m0 -4.5l-4.5 4.5M945.9 608.3l5.7 5.7m0 -5.7l-5.7 5.7M933.6 637.5l6.0 6.0m0 -6.0l-6.0 6.0M926.4 640.6l4.3 4.3m0 -4.3l-4.3 4.3M949.6 633.0l4.2 4.2m0 -4.2l-4.2 4.2M957.4 636.3l6.3 6.3m0 -6.3l-6.3 6.3M914.8 624.3l4.3 4.3m0 -4.3l-4.3 4.3M963.8 637.4l5.5 5.5m0 -5.5l-5.5 5.5M918.1 622.1l5.4 5.4m0 -5.4l-5.4 5.4M935.2 656.3l6.0 6.0m0 -6.0l-6.0 6.0M929.2 640.3l4.0 4.0m0 -4.0l-4.0 4.0M963.4 626.0l5.7 5.7m0 -5.7l-5.7 5.7M937.3 626.0l5.2 5.2m0 -5.2l-5.2 5.2" fill="none" stroke="#d8d8d8" stroke-width="1" opacity=".85"/>
<path d="M1680.1 611.1l4.9 4.9m0 -4.9l-4.9 4.9M1674.2 600.3l6.5 6.5m0 -6.5l-6.5 6.5M1667.1 605.6l5.5 5.5m0 -5.5l-5.5 5.5M1685.2 609.1l6.7 6.7m0 -6.7l-6.7 6.7M1675.6 605.9l5.0 5.0m0 -5.0l-5.0 5.0M1669.6 604.8l6.3 6.3m0 -6.3l-6.3 6.3M1678.9 603.6l6.8 6.8m0 -6.8l-6.8 6.8M1680.5 596.0l5.3 5.3m0 -5.3l-5.3 5.3M1677.2 605.3l6.4 6.4m0 -6.4l-6.4 6.4M1678.0 594.6l6.0 6.0m0 -6.0l-6.0 6.0M1683.3 598.2l4.9 4.9m0 -4.9l-4.9 4.9M1667.7 601.6l4.7 4.7m0 -4.7l-4.7 4.7M1670.1 599.0l5.1 5.1m0 -5.1l-5.1 5.1M1684.8 605.4l4.7 4.7m0 -4.7l-4.7 4.7M1677.6 605.1l4.3 4.3m0 -4.3l-4.3 4.3M1675.4 603.9l4.8 4.8m0 -4.8l-4.8 4.8M1664.7 606.4l6.8 6.8m0 -6.8l-6.8 6.8M1679.0 609.1l4.4 4.4m0 -4.4l-4.4 4.4M1669.6 611.3l4.7 4.7m0 -4.7l-4.7 4.7M1681.4 598.8l5.2 5.2m0 -5.2l-5.2 5.2M1676.3 609.5l5.0 5.0m0 -5.0l-5.0 5.0M1667.6 602.5l6.0 6.0m0 -6.0l-6.0 6.0M1480.1 1105.6l4.7 4.7m0 -4.7l-4.7 4.7M1477.0 1103.3l6.7 6.7m0 -6.7l-6.7 6.7M1453.8 1096.1l6.6 6.6m0 -6.6l-6.6 6.6M1456.2 1106.4l5.3 5.3m0 -5.3l-5.3 5.3M1453.2 1113.3l4.6 4.6m0 -4.6l-4.6 4.6M1476.6 1104.4l4.4 4.4m0 -4.4l-4.4 4.4M1460.7 1099.1l5.3 5.3m0 -5.3l-5.3 5.3M1464.9 1122.3l5.1 5.1m0 -5.1l-5.1 5.1M1474.3 1090.7l5.6 5.6m0 -5.6l-5.6 5.6M1488.8 1104.9l5.6 5.6m0 -5.6l-5.6 5.6M1470.8 1107.8l4.8 4.8m0 -4.8l-4.8 4.8M1484.5 1100.4l4.6 4.6m0 -4.6l-4.6 4.6M1489.3 1110.0l6.9 6.9m0 -6.9l-6.9 6.9M1502.8 1102.6l6.0 6.0m0 -6.0l-6.0 6.0M1493.1 1105.7l5.1 5.1m0 -5.1l-5.1 5.1M1464.5 1104.3l5.8 5.8m0 -5.8l-5.8 5.8M1473.1 1106.2l4.8 4.8m0 -4.8l-4.8 4.8M1473.2 1098.4l5.4 5.4m0 -5.4l-5.4 5.4M1482.1 1108.5l5.6 5.6m0 -5.6l-5.6 5.6M1490.1 1102.7l5.4 5.4m0 -5.4l-5.4 5.4M1479.1 1090.4l4.4 4.4m0 -4.4l-4.4 4.4M1504.6 1111.4l4.6 4.6m0 -4.6l-4.6 4.6M1490.9 1107.2l6.9 6.9m0 -6.9l-6.9 6.9M1460.7 1084.1l6.8 6.8m0 -6.8l-6.8 6.8M1456.3 1106.7l6.8 6.8m0 -6.8l-6.8 6.8M1463.9 1108.3l6.9 6.9m0 -6.9l-6.9 6.9M1491.8 1105.3l5.8 5.8m0 -5.8l-5.8 5.8M1471.3 1078.2l6.3 6.3m0 -6.3l-6.3 6.3M1471.7 1122.3l4.9 4.9m0 -4.9l-4.9 4.9M1469.3 1107.5l7.0 7.0m0 -7.0l-7.0 7.0M1698.5 675.0l6.8 6.8m0 -6.8l-6.8 6.8M1697.1 686.9l5.6 5.6m0 -5.6l-5.6 5.6M1693.2 684.3l5.7 5.7m0 -5.7l-5.7 5.7M1696.9 668.6l6.0 6.0m0 -6.0l-6.0 6.0M1701.1 695.5l4.2 4.2m0 -4.2l-4.2 4.2M1697.8 674.0l5.5 5.5m0 -5.5l-5.5 5.5M1695.7 684.7l4.3 4.3m0 -4.3l-4.3 4.3M1693.2 682.0l6.4 6.4m0 -6.4l-6.4 6.4" fill="none" stroke="#e4e4e4" stroke-width="1"/>
<circle cx="1316.6" cy="639.3" r="3.3" fill="none" stroke="#e020e0" stroke-width="1.2"/>
<circle cx="1377.4" cy="686.0" r="3.3" fill="none" stroke="#e020e0" stroke-width="1.2"/>
<circle cx="1412.8" cy="722.9" r="3.3" fill="none" stroke="#e020e0" stroke-width="1.2"/>
<circle cx="1495.2" cy="594.2" r="3.3" fill="none" stroke="#e020e0" stroke-width="1.2"/>
<circle cx="1517.6" cy="594.9" r="3.3" fill="none" stroke="#e020e0" stroke-width="1.2"/>
<circle cx="1537.6" cy="584.3" r="3.3" fill="none" stroke="#e020e0" stroke-width="1.2"/>
<circle cx="1531.3" cy="625.2" r="3.3" fill="none" stroke="#e020e0" stroke-width="1.2"/>
<circle cx="1517.6" cy="642.0" r="3.3" fill="none" stroke="#e020e0" stroke-width="1.2"/>
<circle cx="1558.0" cy="636.2" r="3.3" fill="none" stroke="#e020e0" stroke-width="1.2"/>
<circle cx="1579.6" cy="653.8" r="3.3" fill="none" stroke="#e020e0" stroke-width="1.2"/>
<circle cx="1586.2" cy="616.5" r="3.3" fill="none" stroke="#e020e0" stroke-width="1.2"/>
<circle cx="1482.6" cy="676.6" r="3.3" fill="none" stroke="#e020e0" stroke-width="1.2"/>
<circle cx="1513.6" cy="677.4" r="3.3" fill="none" stroke="#e020e0" stroke-width="1.2"/>
<circle cx="1485.0" cy="701.7" r="3.3" fill="none" stroke="#e020e0" stroke-width="1.2"/>
<circle cx="1496.4" cy="698.9" r="3.3" fill="none" stroke="#e020e0" stroke-width="1.2"/>
<circle cx="1474.4" cy="716.6" r="3.3" fill="none" stroke="#e020e0" stroke-width="1.2"/>
<circle cx="1484.2" cy="729.2" r="3.3" fill="none" stroke="#e020e0" stroke-width="1.2"/>
<circle cx="1510.1" cy="721.7" r="3.3" fill="none" stroke="#e020e0" stroke-width="1.2"/>
<circle cx="1525.8" cy="723.3" r="3.3" fill="none" stroke="#e020e0" stroke-width="1.2"/>
<circle cx="1460.6" cy="739.4" r="3.3" fill="none" stroke="#e020e0" stroke-width="1.2"/>
<circle cx="1474.4" cy="736.2" r="3.3" fill="none" stroke="#e020e0" stroke-width="1.2"/>
<circle cx="1461.8" cy="745.3" r="3.3" fill="none" stroke="#e020e0" stroke-width="1.2"/>
<circle cx="1468.9" cy="751.9" r="3.3" fill="none" stroke="#e020e0" stroke-width="1.2"/>
<circle cx="1496.4" cy="746.8" r="3.3" fill="none" stroke="#e020e0" stroke-width="1.2"/>
<circle cx="1430.4" cy="781.8" r="3.3" fill="none" stroke="#e020e0" stroke-width="1.2"/>
<circle cx="1421.8" cy="795.9" r="3.3" fill="none" stroke="#e020e0" stroke-width="1.2"/>
<circle cx="1458.3" cy="787.3" r="3.3" fill="none" stroke="#e020e0" stroke-width="1.2"/>
<circle cx="1466.9" cy="797.8" r="3.3" fill="none" stroke="#e020e0" stroke-width="1.2"/>
<circle cx="1486.2" cy="797.1" r="3.3" fill="none" stroke="#e020e0" stroke-width="1.2"/>
<circle cx="1496.0" cy="803.0" r="3.3" fill="none" stroke="#e020e0" stroke-width="1.2"/>
<circle cx="1444.2" cy="809.2" r="3.3" fill="none" stroke="#e020e0" stroke-width="1.2"/>
<circle cx="1548.2" cy="780.2" r="3.3" fill="none" stroke="#e020e0" stroke-width="1.2"/>
<circle cx="1591.3" cy="753.1" r="3.3" fill="none" stroke="#e020e0" stroke-width="1.2"/>
<circle cx="1452.8" cy="829.6" r="3.3" fill="none" stroke="#e020e0" stroke-width="1.2"/>
<circle cx="1435.1" cy="838.3" r="3.3" fill="none" stroke="#e020e0" stroke-width="1.2"/>
<circle cx="1504.2" cy="833.6" r="3.3" fill="none" stroke="#e020e0" stroke-width="1.2"/>
<circle cx="1434.3" cy="867.7" r="3.3" fill="none" stroke="#e020e0" stroke-width="1.2"/>
<circle cx="1417.9" cy="873.6" r="3.3" fill="none" stroke="#e020e0" stroke-width="1.2"/>
<circle cx="1414.7" cy="888.5" r="3.3" fill="none" stroke="#e020e0" stroke-width="1.2"/>
<circle cx="1433.6" cy="885.4" r="3.3" fill="none" stroke="#e020e0" stroke-width="1.2"/>
<circle cx="1458.7" cy="893.2" r="3.3" fill="none" stroke="#e020e0" stroke-width="1.2"/>
<circle cx="1562.7" cy="866.5" r="3.3" fill="none" stroke="#e020e0" stroke-width="1.2"/>
<circle cx="1386.1" cy="893.2" r="3.3" fill="none" stroke="#e020e0" stroke-width="1.2"/>
<circle cx="1393.1" cy="893.2" r="3.3" fill="none" stroke="#e020e0" stroke-width="1.2"/>
<circle cx="1390.0" cy="899.1" r="3.3" fill="none" stroke="#e020e0" stroke-width="1.2"/>
<circle cx="1394.3" cy="899.1" r="3.3" fill="none" stroke="#e020e0" stroke-width="1.2"/>
<circle cx="1359.8" cy="901.1" r="3.3" fill="none" stroke="#e020e0" stroke-width="1.2"/>
<circle cx="1386.5" cy="919.9" r="3.3" fill="none" stroke="#e020e0" stroke-width="1.2"/>
<circle cx="1361.0" cy="940.3" r="3.3" fill="none" stroke="#e020e0" stroke-width="1.2"/>
<circle cx="1395.9" cy="948.9" r="3.3" fill="none" stroke="#e020e0" stroke-width="1.2"/>
<circle cx="1405.3" cy="951.3" r="3.3" fill="none" stroke="#e020e0" stroke-width="1.2"/>
<circle cx="1436.3" cy="951.3" r="3.3" fill="none" stroke="#e020e0" stroke-width="1.2"/>
<circle cx="1296.2" cy="969.7" r="3.3" fill="none" stroke="#e020e0" stroke-width="1.2"/>
<circle cx="1295.0" cy="999.2" r="3.3" fill="none" stroke="#e020e0" stroke-width="1.2"/>
<circle cx="1350.8" cy="995.3" r="3.3" fill="none" stroke="#e020e0" stroke-width="1.2"/>
<circle cx="1601.1" cy="577.3" r="3.3" fill="none" stroke="#e020e0" stroke-width="1.2"/>
<circle cx="1360.4" cy="902.5" r="3.3" fill="none" stroke="#e020e0" stroke-width="1.2"/>
<circle cx="1386.3" cy="920.2" r="3.3" fill="none" stroke="#e020e0" stroke-width="1.2"/>
<circle cx="1361.6" cy="940.0" r="3.3" fill="none" stroke="#e020e0" stroke-width="1.2"/>
<circle cx="1396.2" cy="949.4" r="3.3" fill="none" stroke="#e020e0" stroke-width="1.2"/>
<circle cx="1404.8" cy="951.8" r="3.3" fill="none" stroke="#e020e0" stroke-width="1.2"/>
<circle cx="1296.2" cy="969.1" r="3.3" fill="none" stroke="#e020e0" stroke-width="1.2"/>
<circle cx="1349.8" cy="995.0" r="3.3" fill="none" stroke="#e020e0" stroke-width="1.2"/>
<circle cx="1295.0" cy="1000.0" r="3.3" fill="none" stroke="#e020e0" stroke-width="1.2"/>
<circle cx="1102.5" cy="1064.9" r="3.3" fill="none" stroke="#e020e0" stroke-width="1.2"/>
<circle cx="1158.8" cy="1063.4" r="3.3" fill="none" stroke="#e020e0" stroke-width="1.2"/>
<circle cx="1093.9" cy="1100.4" r="3.3" fill="none" stroke="#e020e0" stroke-width="1.2"/>
<circle cx="1206.2" cy="1107.3" r="3.3" fill="none" stroke="#e020e0" stroke-width="1.2"/>
<circle cx="1221.0" cy="1090.0" r="3.3" fill="none" stroke="#e020e0" stroke-width="1.2"/>
<circle cx="1254.3" cy="1098.7" r="3.3" fill="none" stroke="#e020e0" stroke-width="1.2"/>
<circle cx="1274.0" cy="1104.3" r="3.3" fill="none" stroke="#e020e0" stroke-width="1.2"/>
<circle cx="1290.1" cy="1082.6" r="3.3" fill="none" stroke="#e020e0" stroke-width="1.2"/>
<circle cx="1274.0" cy="1069.1" r="3.3" fill="none" stroke="#e020e0" stroke-width="1.2"/>
<circle cx="1354.2" cy="1064.1" r="3.3" fill="none" stroke="#e020e0" stroke-width="1.2"/>
<circle cx="1351.8" cy="1040.7" r="3.3" fill="none" stroke="#e020e0" stroke-width="1.2"/>
<circle cx="1398.7" cy="1033.3" r="3.3" fill="none" stroke="#e020e0" stroke-width="1.2"/>
<circle cx="1362.9" cy="1104.8" r="3.3" fill="none" stroke="#e020e0" stroke-width="1.2"/>
<circle cx="1393.7" cy="1096.7" r="3.3" fill="none" stroke="#e020e0" stroke-width="1.2"/>
<circle cx="1129.7" cy="1134.5" r="3.3" fill="none" stroke="#e020e0" stroke-width="1.2"/>
<circle cx="1100.0" cy="1139.4" r="3.3" fill="none" stroke="#e020e0" stroke-width="1.2"/>
<circle cx="1238.3" cy="1132.0" r="3.3" fill="none" stroke="#e020e0" stroke-width="1.2"/>
<circle cx="1195.1" cy="1154.2" r="3.3" fill="none" stroke="#e020e0" stroke-width="1.2"/>
<circle cx="1128.4" cy="1171.5" r="3.3" fill="none" stroke="#e020e0" stroke-width="1.2"/>
<circle cx="1130.9" cy="1180.1" r="3.3" fill="none" stroke="#e020e0" stroke-width="1.2"/>
<circle cx="1149.4" cy="1173.9" r="3.3" fill="none" stroke="#e020e0" stroke-width="1.2"/>
<circle cx="1092.6" cy="1165.3" r="3.3" fill="none" stroke="#e020e0" stroke-width="1.2"/>
<circle cx="1077.8" cy="1178.9" r="3.3" fill="none" stroke="#e020e0" stroke-width="1.2"/>
<circle cx="1070.4" cy="1169.0" r="3.3" fill="none" stroke="#e020e0" stroke-width="1.2"/>
<circle cx="981.6" cy="1159.1" r="3.3" fill="none" stroke="#e020e0" stroke-width="1.2"/>
<circle cx="993.9" cy="1165.3" r="3.3" fill="none" stroke="#e020e0" stroke-width="1.2"/>
<circle cx="1007.5" cy="1164.1" r="3.3" fill="none" stroke="#e020e0" stroke-width="1.2"/>
<circle cx="966.8" cy="1135.7" r="3.3" fill="none" stroke="#e020e0" stroke-width="1.2"/>
<circle cx="1021.1" cy="1171.5" r="3.3" fill="none" stroke="#e020e0" stroke-width="1.2"/>
<circle cx="1027.2" cy="1173.9" r="3.3" fill="none" stroke="#e020e0" stroke-width="1.2"/>
<circle cx="1161.7" cy="1165.3" r="3.3" fill="none" stroke="#e020e0" stroke-width="1.2"/>
<circle cx="1144.5" cy="1159.1" r="3.3" fill="none" stroke="#e020e0" stroke-width="1.2"/>
<circle cx="1430.0" cy="781.9" r="3.3" fill="none" stroke="#e020e0" stroke-width="1.2"/>
<circle cx="1421.2" cy="795.3" r="3.3" fill="none" stroke="#e020e0" stroke-width="1.2"/>
<circle cx="1444.2" cy="808.7" r="3.3" fill="none" stroke="#e020e0" stroke-width="1.2"/>
<circle cx="1467.1" cy="797.1" r="3.3" fill="none" stroke="#e020e0" stroke-width="1.2"/>
<circle cx="1486.5" cy="797.1" r="3.3" fill="none" stroke="#e020e0" stroke-width="1.2"/>
<circle cx="1494.7" cy="803.1" r="3.3" fill="none" stroke="#e020e0" stroke-width="1.2"/>
<circle cx="1453.0" cy="828.9" r="3.3" fill="none" stroke="#e020e0" stroke-width="1.2"/>
<circle cx="1435.3" cy="837.7" r="3.3" fill="none" stroke="#e020e0" stroke-width="1.2"/>
<circle cx="1503.5" cy="834.2" r="3.3" fill="none" stroke="#e020e0" stroke-width="1.2"/>
<circle cx="1433.6" cy="867.7" r="3.3" fill="none" stroke="#e020e0" stroke-width="1.2"/>
<circle cx="1417.7" cy="874.8" r="3.3" fill="none" stroke="#e020e0" stroke-width="1.2"/>
<circle cx="1433.6" cy="885.4" r="3.3" fill="none" stroke="#e020e0" stroke-width="1.2"/>
<circle cx="1459.0" cy="893.2" r="3.3" fill="none" stroke="#e020e0" stroke-width="1.2"/>
<circle cx="1547.7" cy="780.5" r="3.3" fill="none" stroke="#e020e0" stroke-width="1.2"/>
<circle cx="1562.5" cy="866.0" r="3.3" fill="none" stroke="#e020e0" stroke-width="1.2"/>
<circle cx="1405.3" cy="951.8" r="3.3" fill="none" stroke="#e020e0" stroke-width="1.2"/>
<circle cx="1436.4" cy="951.8" r="3.3" fill="none" stroke="#e020e0" stroke-width="1.2"/>
<circle cx="1447.7" cy="943.7" r="3.3" fill="none" stroke="#e020e0" stroke-width="1.2"/>
<circle cx="1415.9" cy="963.8" r="3.3" fill="none" stroke="#e020e0" stroke-width="1.2"/>
<circle cx="1601.2" cy="576.7" r="3.3" fill="none" stroke="#e020e0" stroke-width="1.2"/>
<circle cx="1585.9" cy="616.7" r="3.3" fill="none" stroke="#e020e0" stroke-width="1.2"/>
<circle cx="1565.9" cy="632.0" r="3.3" fill="none" stroke="#e020e0" stroke-width="1.2"/>
<circle cx="1578.8" cy="653.2" r="3.3" fill="none" stroke="#e020e0" stroke-width="1.2"/>
<circle cx="1651.9" cy="501.3" r="3.3" fill="none" stroke="#e020e0" stroke-width="1.2"/>
<circle cx="1460.0" cy="1112.7" r="3" fill="none" stroke="#f030f0" stroke-width="1.4"/>
<circle cx="1444.1" cy="1111.8" r="3" fill="none" stroke="#f030f0" stroke-width="1.4"/>
<circle cx="1471.1" cy="1118.4" r="3" fill="none" stroke="#f030f0" stroke-width="1.4"/>
<circle cx="1470.6" cy="1091.2" r="3" fill="none" stroke="#f030f0" stroke-width="1.4"/>
<circle cx="1467.3" cy="1108.6" r="3" fill="none" stroke="#f030f0" stroke-width="1.4"/>
<circle cx="1464.0" cy="1106.9" r="3" fill="none" stroke="#f030f0" stroke-width="1.4"/>
<circle cx="1456.9" cy="1111.0" r="3" fill="none" stroke="#f030f0" stroke-width="1.4"/>
<circle cx="1488.4" cy="1099.0" r="3" fill="none" stroke="#f030f0" stroke-width="1.4"/>
<circle cx="1479.3" cy="1124.4" r="3" fill="none" stroke="#f030f0" stroke-width="1.4"/>
<circle cx="1498.5" cy="1109.5" r="3" fill="none" stroke="#f030f0" stroke-width="1.4"/>
<circle cx="1492.5" cy="1119.6" r="3" fill="none" stroke="#f030f0" stroke-width="1.4"/>
<circle cx="1490.2" cy="1109.4" r="3" fill="none" stroke="#f030f0" stroke-width="1.4"/>
<circle cx="1476.1" cy="1111.4" r="3" fill="none" stroke="#f030f0" stroke-width="1.4"/>
<circle cx="1497.6" cy="1132.9" r="3" fill="none" stroke="#f030f0" stroke-width="1.4"/>
<circle cx="1461.5" cy="1107.4" r="3" fill="none" stroke="#f030f0" stroke-width="1.4"/>
<circle cx="1473.4" cy="1104.7" r="3" fill="none" stroke="#f030f0" stroke-width="1.4"/>
<circle cx="1490.3" cy="1121.2" r="3" fill="none" stroke="#f030f0" stroke-width="1.4"/>
<circle cx="1458.8" cy="1123.4" r="3" fill="none" stroke="#f030f0" stroke-width="1.4"/>
<circle cx="1465.0" cy="1101.9" r="3" fill="none" stroke="#f030f0" stroke-width="1.4"/>
<circle cx="1477.9" cy="1125.1" r="3" fill="none" stroke="#f030f0" stroke-width="1.4"/>
<circle cx="1463.1" cy="1104.8" r="3" fill="none" stroke="#f030f0" stroke-width="1.4"/>
<circle cx="1468.9" cy="1103.8" r="3" fill="none" stroke="#f030f0" stroke-width="1.4"/>
<circle cx="1466.2" cy="1114.7" r="3" fill="none" stroke="#f030f0" stroke-width="1.4"/>
<circle cx="1485.4" cy="1104.4" r="3" fill="none" stroke="#f030f0" stroke-width="1.4"/>
<circle cx="1480.4" cy="1102.6" r="3" fill="none" stroke="#f030f0" stroke-width="1.4"/>
<circle cx="1440.2" cy="1117.7" r="3" fill="none" stroke="#f030f0" stroke-width="1.4"/>
<path d="M955.4 299.9h22M966.4 287.9v24M896.5 919.2h22M907.5 907.2v24M1116.6 861.6h22M1127.6 849.6v24M1342.9 785.3h22M1353.9 773.3v24M1478.3 612.6h22M1489.3 600.6v24M1443.0 748.0h22M1454.0 736.0v24M1444.9 778.2h22M1455.9 766.2v24M1571.7 704.1h22M1582.7 692.1v24M1636.5 688.0h22M1647.5 676.0v24M1437.1 859.9h22M1448.1 847.9v24M1205.5 1018.0h22M1216.5 1006.0v24M1297.8 1009.0h22M1308.8 997.0v24M896.6 919.2h22M907.6 907.2v24M1205.5 1018.0h22M1216.5 1006.0v24M1298.3 1008.6h22M1309.3 996.6v24M1288.5 1098.7h22M1299.5 1086.7v24M1296.4 1104.8h22M1307.4 1092.8v24M1279.1 1118.4h22M1290.1 1106.4v24M1127.3 1140.6h22M1138.3 1128.6v24M985.4 1145.6h22M996.4 1133.6v24M1161.9 1146.8h22M1172.9 1134.8v24M1210.0 1157.9h22M1221.0 1145.9v24M1242.1 1138.2h22M1253.1 1126.2v24M1251.9 1136.9h22M1262.9 1124.9v24M1311.2 1150.5h22M1322.2 1138.5v24M915.1 1118.4h22M926.1 1106.4v24M910.1 1130.8h22M921.1 1118.8v24M904.0 1098.7h22M915.0 1086.7v24M1106.3 1187.5h22M1117.3 1175.5v24M1133.5 1187.5h22M1144.5 1175.5v24M1037.2 1188.7h22M1048.2 1176.7v24M1170.5 1176.4h22M1181.5 1164.4v24M1286.5 1188.7h22M1297.5 1176.7v24M1443.8 778.4h22M1454.8 766.4v24M1437.4 860.7h22M1448.4 848.7v24M1636.2 688.6h22M1647.2 676.6v24M1571.4 705.0h22M1582.4 693.0v24" stroke="#20d020" stroke-width="1.3" fill="none"/>
<circle cx="966.4" cy="299.9" r="2.6" fill="none" stroke="#20d020" stroke-width="1.2"/>
<circle cx="907.5" cy="919.2" r="2.6" fill="none" stroke="#20d020" stroke-width="1.2"/>
<circle cx="1127.6" cy="861.6" r="2.6" fill="none" stroke="#20d020" stroke-width="1.2"/>
<circle cx="1353.9" cy="785.3" r="2.6" fill="none" stroke="#20d020" stroke-width="1.2"/>
<circle cx="1489.3" cy="612.6" r="2.6" fill="none" stroke="#20d020" stroke-width="1.2"/>
<circle cx="1454.0" cy="748.0" r="2.6" fill="none" stroke="#20d020" stroke-width="1.2"/>
<circle cx="1455.9" cy="778.2" r="2.6" fill="none" stroke="#20d020" stroke-width="1.2"/>
<circle cx="1582.7" cy="704.1" r="2.6" fill="none" stroke="#20d020" stroke-width="1.2"/>
<circle cx="1647.5" cy="688.0" r="2.6" fill="none" stroke="#20d020" stroke-width="1.2"/>
<circle cx="1448.1" cy="859.9" r="2.6" fill="none" stroke="#20d020" stroke-width="1.2"/>
<circle cx="1216.5" cy="1018.0" r="2.6" fill="none" stroke="#20d020" stroke-width="1.2"/>
<circle cx="1308.8" cy="1009.0" r="2.6" fill="none" stroke="#20d020" stroke-width="1.2"/>
<circle cx="907.6" cy="919.2" r="2.6" fill="none" stroke="#20d020" stroke-width="1.2"/>
<circle cx="1216.5" cy="1018.0" r="2.6" fill="none" stroke="#20d020" stroke-width="1.2"/>
<circle cx="1309.3" cy="1008.6" r="2.6" fill="none" stroke="#20d020" stroke-width="1.2"/>
<circle cx="1299.5" cy="1098.7" r="2.6" fill="none" stroke="#20d020" stroke-width="1.2"/>
<circle cx="1307.4" cy="1104.8" r="2.6" fill="none" stroke="#20d020" stroke-width="1.2"/>
<circle cx="1290.1" cy="1118.4" r="2.6" fill="none" stroke="#20d020" stroke-width="1.2"/>
<circle cx="1138.3" cy="1140.6" r="2.6" fill="none" stroke="#20d020" stroke-width="1.2"/>
<circle cx="996.4" cy="1145.6" r="2.6" fill="none" stroke="#20d020" stroke-width="1.2"/>
<circle cx="1172.9" cy="1146.8" r="2.6" fill="none" stroke="#20d020" stroke-width="1.2"/>
<circle cx="1221.0" cy="1157.9" r="2.6" fill="none" stroke="#20d020" stroke-width="1.2"/>
<circle cx="1253.1" cy="1138.2" r="2.6" fill="none" stroke="#20d020" stroke-width="1.2"/>
<circle cx="1262.9" cy="1136.9" r="2.6" fill="none" stroke="#20d020" stroke-width="1.2"/>
<circle cx="1322.2" cy="1150.5" r="2.6" fill="none" stroke="#20d020" stroke-width="1.2"/>
<circle cx="926.1" cy="1118.4" r="2.6" fill="none" stroke="#20d020" stroke-width="1.2"/>
<circle cx="921.1" cy="1130.8" r="2.6" fill="none" stroke="#20d020" stroke-width="1.2"/>
<circle cx="915.0" cy="1098.7" r="2.6" fill="none" stroke="#20d020" stroke-width="1.2"/>
<circle cx="1117.3" cy="1187.5" r="2.6" fill="none" stroke="#20d020" stroke-width="1.2"/>
<circle cx="1144.5" cy="1187.5" r="2.6" fill="none" stroke="#20d020" stroke-width="1.2"/>
<circle cx="1048.2" cy="1188.7" r="2.6" fill="none" stroke="#20d020" stroke-width="1.2"/>
<circle cx="1181.5" cy="1176.4" r="2.6" fill="none" stroke="#20d020" stroke-width="1.2"/>
<circle cx="1297.5" cy="1188.7" r="2.6" fill="none" stroke="#20d020" stroke-width="1.2"/>
<circle cx="1454.8" cy="778.4" r="2.6" fill="none" stroke="#20d020" stroke-width="1.2"/>
<circle cx="1448.4" cy="860.7" r="2.6" fill="none" stroke="#20d020" stroke-width="1.2"/>
<circle cx="1647.2" cy="688.6" r="2.6" fill="none" stroke="#20d020" stroke-width="1.2"/>
<circle cx="1582.4" cy="705.0" r="2.6" fill="none" stroke="#20d020" stroke-width="1.2"/>
<rect x="967.9" y="222.6" width="6.4" height="6.4" fill="none" stroke="#20d020" stroke-width="1.2"/>
<rect x="1017.6" y="717.4" width="6.4" height="6.4" fill="none" stroke="#20d020" stroke-width="1.2"/>
<rect x="1495.9" y="639.6" width="6.4" height="6.4" fill="none" stroke="#20d020" stroke-width="1.2"/>
<rect x="1601.9" y="665.5" width="6.4" height="6.4" fill="none" stroke="#20d020" stroke-width="1.2"/>
<rect x="1493.2" y="826.0" width="6.4" height="6.4" fill="none" stroke="#20d020" stroke-width="1.2"/>
<rect x="1435.9" y="850.8" width="6.4" height="6.4" fill="none" stroke="#20d020" stroke-width="1.2"/>
<rect x="1388.0" y="940.3" width="6.4" height="6.4" fill="none" stroke="#20d020" stroke-width="1.2"/>
<rect x="1364.4" y="979.5" width="6.4" height="6.4" fill="none" stroke="#20d020" stroke-width="1.2"/>
<rect x="1520.6" y="582.7" width="6.4" height="6.4" fill="none" stroke="#20d020" stroke-width="1.2"/>
<rect x="1364.1" y="980.2" width="6.4" height="6.4" fill="none" stroke="#20d020" stroke-width="1.2"/>
<rect x="1387.6" y="941.2" width="6.4" height="6.4" fill="none" stroke="#20d020" stroke-width="1.2"/>
<rect x="1396.7" y="1085.1" width="6.4" height="6.4" fill="none" stroke="#20d020" stroke-width="1.2"/>
<rect x="1238.8" y="1116.0" width="6.4" height="6.4" fill="none" stroke="#20d020" stroke-width="1.2"/>
<rect x="1196.8" y="1135.0" width="6.4" height="6.4" fill="none" stroke="#20d020" stroke-width="1.2"/>
<rect x="1178.3" y="1163.3" width="6.4" height="6.4" fill="none" stroke="#20d020" stroke-width="1.2"/>
<rect x="1492.9" y="826.0" width="6.4" height="6.4" fill="none" stroke="#20d020" stroke-width="1.2"/>
<rect x="1435.7" y="851.1" width="6.4" height="6.4" fill="none" stroke="#20d020" stroke-width="1.2"/>
<rect x="1619.2" y="577.0" width="6.4" height="6.4" fill="none" stroke="#20d020" stroke-width="1.2"/>
<rect x="1653.4" y="597.7" width="6.4" height="6.4" fill="none" stroke="#20d020" stroke-width="1.2"/>
<rect x="1627.5" y="614.7" width="6.4" height="6.4" fill="none" stroke="#20d020" stroke-width="1.2"/>
<rect x="1627.5" y="635.9" width="6.4" height="6.4" fill="none" stroke="#20d020" stroke-width="1.2"/>
<rect x="1601.6" y="665.8" width="6.4" height="6.4" fill="none" stroke="#20d020" stroke-width="1.2"/>
<rect x="1618.0" y="595.8" width="6.4" height="6.4" fill="none" stroke="#20d020" stroke-width="1.2"/>
<rect x="1504.6" y="690.3" width="18" height="18" fill="none" stroke="#20d020" stroke-width="1.2"/>
<rect x="1209.5" y="1126.7" width="18" height="18" fill="none" stroke="#20d020" stroke-width="1.2"/>
<rect x="935.9" y="602.9" width="9" height="7.5" fill="#20e020" rx="2"/>
<rect x="1588.8" y="637.2" width="9" height="7.5" fill="#20e020" rx="2"/>
<rect x="1515.4" y="667.0" width="9" height="7.5" fill="#20e020" rx="2"/>
<rect x="1488.7" y="721.9" width="9" height="7.5" fill="#20e020" rx="2"/>
<rect x="1605.3" y="574.4" width="9" height="7.5" fill="#20e020" rx="2"/>
<rect x="1189.3" y="1143.1" width="9" height="7.5" fill="#20e020" rx="2"/>
<rect x="1179.5" y="1153.0" width="9" height="7.5" fill="#20e020" rx="2"/>
<rect x="1603.8" y="574.6" width="9" height="7.5" fill="#20e020" rx="2"/>
<rect x="1587.3" y="637.7" width="9" height="7.5" fill="#20e020" rx="2"/>
<rect x="1474.0" y="1096.3" width="6" height="6" fill="#20e020"/>
<rect x="1483.6" y="1099.4" width="6" height="6" fill="#20e020"/>
<rect x="1489.9" y="1102.2" width="6" height="6" fill="#20e020"/>
<rect x="1473.8" y="1100.1" width="6" height="6" fill="#20e020"/>
<rect x="1489.8" y="1102.6" width="6" height="6" fill="#20e020"/>
<rect x="1455.6" y="1103.4" width="6" height="6" fill="#20e020"/>
<rect x="1479.0" y="1112.3" width="6" height="6" fill="#20e020"/>
<rect x="1494.3" y="1092.8" width="6" height="6" fill="#20e020"/>
<rect x="1460.0" y="1103.5" width="6" height="6" fill="#20e020"/>
<rect x="1479.3" y="1108.3" width="6" height="6" fill="#20e020"/>
<rect x="1483.1" y="1101.7" width="6" height="6" fill="#20e020"/>
<rect x="1485.0" y="1109.6" width="6" height="6" fill="#20e020"/>
<rect x="1466.6" y="1098.9" width="6" height="6" fill="#20e020"/>
<rect x="1489.3" y="1105.6" width="6" height="6" fill="#20e020"/>
<circle cx="1213.6" cy="1059.2" r="3" fill="none" stroke="#e8e8e8" stroke-width="1"/><path d="M1210.6 1059.2h6M1213.6 1056.2v6" stroke="#e8e8e8" stroke-width="1"/>
<circle cx="988.3" cy="1123.3" r="3" fill="none" stroke="#e8e8e8" stroke-width="1"/><path d="M985.3 1123.3h6M988.3 1120.3v6" stroke="#e8e8e8" stroke-width="1"/>
<circle cx="1318.5" cy="1132.5" r="3" fill="none" stroke="#e8e8e8" stroke-width="1"/><path d="M1315.5 1132.5h6M1318.5 1129.5v6" stroke="#e8e8e8" stroke-width="1"/>
<circle cx="1200.0" cy="1188.7" r="3" fill="none" stroke="#e8e8e8" stroke-width="1"/><path d="M1197.0 1188.7h6M1200.0 1185.7v6" stroke="#e8e8e8" stroke-width="1"/>
<circle cx="1171.6" cy="1191.7" r="3" fill="none" stroke="#e8e8e8" stroke-width="1"/><path d="M1168.6 1191.7h6M1171.6 1188.7v6" stroke="#e8e8e8" stroke-width="1"/>
<circle cx="1530.0" cy="910.1" r="3" fill="none" stroke="#e8e8e8" stroke-width="1"/><path d="M1527.0 910.1h6M1530.0 907.1v6" stroke="#e8e8e8" stroke-width="1"/>
<circle cx="1613.7" cy="923.2" r="3" fill="none" stroke="#e8e8e8" stroke-width="1"/><path d="M1610.7 923.2h6M1613.7 920.2v6" stroke="#e8e8e8" stroke-width="1"/>
<circle cx="1643.7" cy="792.9" r="3" fill="none" stroke="#e8e8e8" stroke-width="1"/><path d="M1640.7 792.9h6M1643.7 789.9v6" stroke="#e8e8e8" stroke-width="1"/>
<path d="M 667 688.6 A 517 342 0 0 0 1701 688.6" fill="none" stroke="#dedede" stroke-width="2.6"/>
</g>
<path d="M912.9 284.1l9.6 9.6m0 -9.6l-9.6 9.6M896.1 305.7l10.3 10.3m0 -10.3l-10.3 10.3M901.3 321.9l9.4 9.4m0 -9.4l-9.4 9.4M953.4 220.2l8.7 8.7m0 -8.7l-8.7 8.7M935.9 227.7l9.3 9.3m0 -9.3l-9.3 9.3M913.3 239.7l10.5 10.5m0 -10.5l-10.5 10.5M976.7 210.5l9.2 9.2m0 -9.2l-9.2 9.2M984.5 212.0l9.3 9.3m0 -9.3l-9.3 9.3M990.0 210.4l9.3 9.3m0 -9.3l-9.3 9.3M871.8 352.0l8.7 8.7m0 -8.7l-8.7 8.7M871.3 353.1l9.6 9.6m0 -9.6l-9.6 9.6M873.2 384.8l9.1 9.1m0 -9.1l-9.1 9.1M962.5 394.0l9.5 9.5m0 -9.5l-9.5 9.5M985.9 403.3l9.8 9.8m0 -9.8l-9.8 9.8M949.7 418.6l8.7 8.7m0 -8.7l-8.7 8.7M918.0 428.1l10.4 10.4m0 -10.4l-10.4 10.4M976.9 432.0l8.8 8.8m0 -8.8l-8.8 8.8M981.0 433.6l10.1 10.1m0 -10.1l-10.1 10.1M984.7 429.8l10.2 10.2m0 -10.2l-10.2 10.2M893.0 451.7l10.3 10.3m0 -10.3l-10.3 10.3M872.4 459.4l10.7 10.7m0 -10.7l-10.7 10.7M963.4 476.6l10.7 10.7m0 -10.7l-10.7 10.7M879.1 495.9l9.8 9.8m0 -9.8l-9.8 9.8M882.7 508.9l8.9 8.9m0 -8.9l-8.9 8.9M946.4 525.5l10.2 10.2m0 -10.2l-10.2 10.2M903.7 542.5l10.8 10.8m0 -10.8l-10.8 10.8M932.2 549.1l10.2 10.2m0 -10.2l-10.2 10.2M935.3 565.3l10.2 10.2m0 -10.2l-10.2 10.2M909.3 585.9l10.4 10.4m0 -10.4l-10.4 10.4M974.9 589.3l10.4 10.4m0 -10.4l-10.4 10.4M1006.0 587.7l10.3 10.3m0 -10.3l-10.3 10.3M1035.3 591.0l10.6 10.6m0 -10.6l-10.6 10.6M1016.2 601.3l10.7 10.7m0 -10.7l-10.7 10.7M1064.5 599.6l10.7 10.7m0 -10.7l-10.7 10.7M888.8 632.8l9.9 9.9m0 -9.9l-9.9 9.9M894.5 648.8l8.9 8.9m0 -8.9l-8.9 8.9M898.5 661.5l11.1 11.1m0 -11.1l-11.1 11.1M999.3 624.2l9.8 9.8m0 -9.8l-9.8 9.8M989.4 633.2l8.9 8.9m0 -8.9l-8.9 8.9M1013.4 634.8l9.4 9.4m0 -9.4l-9.4 9.4M1026.6 623.8l10.5 10.5m0 -10.5l-10.5 10.5M1013.7 659.3l8.7 8.7m0 -8.7l-8.7 8.7M994.9 683.6l8.4 8.4m0 -8.4l-8.4 8.4M975.4 688.3l9.4 9.4m0 -9.4l-9.4 9.4M941.7 690.9l11.1 11.1m0 -11.1l-11.1 11.1M915.8 690.9l11.1 11.1m0 -11.1l-11.1 11.1M954.4 701.8l10.0 10.0m0 -10.0l-10.0 10.0M910.6 708.2l11.1 11.1m0 -11.1l-11.1 11.1M876.7 717.4l9.9 9.9m0 -9.9l-9.9 9.9M882.1 731.4l9.5 9.5m0 -9.5l-9.5 9.5M1043.2 709.4l8.5 8.5m0 -8.5l-8.5 8.5M1082.3 695.7l8.4 8.4m0 -8.4l-8.4 8.4M1115.6 685.9l10.7 10.7m0 -10.7l-10.7 10.7M1148.6 627.0l9.8 9.8m0 -9.8l-9.8 9.8M1200.8 635.6l11.1 11.1m0 -11.1l-11.1 11.1M1227.2 696.5l10.1 10.1m0 -10.1l-10.1 10.1M1207.2 705.9l8.7 8.7m0 -8.7l-8.7 8.7M1208.9 721.5l8.6 8.6m0 -8.6l-8.6 8.6M1268.2 682.3l10.9 10.9m0 -10.9l-10.9 10.9M1279.5 678.1l9.1 9.1m0 -9.1l-9.1 9.1M1286.0 693.2l9.9 9.9m0 -9.9l-9.9 9.9M1304.4 676.4l9.0 9.0m0 -9.0l-9.0 9.0M1135.7 734.6l10.0 10.0m0 -10.0l-10.0 10.0M1124.9 748.7l10.8 10.8m0 -10.8l-10.8 10.8M1168.6 772.7l8.4 8.4m0 -8.4l-8.4 8.4M1212.5 779.6l8.4 8.4m0 -8.4l-8.4 8.4M1233.3 755.2l10.3 10.3m0 -10.3l-10.3 10.3M1250.3 791.2l8.8 8.8m0 -8.8l-8.8 8.8M1255.3 807.5l10.6 10.6m0 -10.6l-10.6 10.6M1287.6 820.9l10.2 10.2m0 -10.2l-10.2 10.2M1247.8 851.9l10.3 10.3m0 -10.3l-10.3 10.3M1206.5 910.8l9.9 9.9m0 -9.9l-9.9 9.9M1142.1 855.0l11.1 11.1m0 -11.1l-11.1 11.1M1097.2 902.7l11.0 11.0m0 -11.0l-11.0 11.0M1112.8 905.1l10.9 10.9m0 -10.9l-10.9 10.9M949.8 758.4l10.8 10.8m0 -10.8l-10.8 10.8M955.0 775.0l8.7 8.7m0 -8.7l-8.7 8.7M1039.6 763.5l8.8 8.8m0 -8.8l-8.8 8.8M1064.0 764.9l10.3 10.3m0 -10.3l-10.3 10.3M901.0 764.2l9.6 9.6m0 -9.6l-9.6 9.6M880.1 784.7l10.1 10.1m0 -10.1l-10.1 10.1M913.4 793.9l9.0 9.0m0 -9.0l-9.0 9.0M918.8 782.0l8.5 8.5m0 -8.5l-8.5 8.5M872.6 811.8l11.1 11.1m0 -11.1l-11.1 11.1M915.3 814.8l8.6 8.6m0 -8.6l-8.6 8.6M934.3 811.3l8.6 8.6m0 -8.6l-8.6 8.6M950.7 806.9l10.5 10.5m0 -10.5l-10.5 10.5M971.8 802.1l9.7 9.7m0 -9.7l-9.7 9.7M979.8 811.9l11.0 11.0m0 -11.0l-11.0 11.0M938.3 820.5l11.0 11.0m0 -11.0l-11.0 11.0M952.9 828.2l9.4 9.4m0 -9.4l-9.4 9.4M969.4 830.8l11.1 11.1m0 -11.1l-11.1 11.1M924.9 836.4l10.2 10.2m0 -10.2l-10.2 10.2M940.0 844.6l11.2 11.2m0 -11.2l-11.2 11.2M885.3 850.3l10.0 10.0m0 -10.0l-10.0 10.0M990.8 845.3l9.6 9.6m0 -9.6l-9.6 9.6M1006.4 843.7l9.5 9.5m0 -9.5l-9.5 9.5M1018.0 858.8l10.4 10.4m0 -10.4l-10.4 10.4M1036.9 834.4l10.8 10.8m0 -10.8l-10.8 10.8M1039.5 845.7l8.9 8.9m0 -8.9l-8.9 8.9M1037.2 858.9l10.1 10.1m0 -10.1l-10.1 10.1M1041.4 873.5l8.5 8.5m0 -8.5l-8.5 8.5M1040.7 886.6l10.0 10.0m0 -10.0l-10.0 10.0M1037.1 889.9l10.4 10.4m0 -10.4l-10.4 10.4M1059.5 879.5l10.4 10.4m0 -10.4l-10.4 10.4M1054.9 817.9l9.2 9.2m0 -9.2l-9.2 9.2M1057.0 828.6l8.6 8.6m0 -8.6l-8.6 8.6M1076.9 801.9l10.1 10.1m0 -10.1l-10.1 10.1M1083.6 812.1l10.6 10.6m0 -10.6l-10.6 10.6M1090.3 810.2l10.9 10.9m0 -10.9l-10.9 10.9M969.7 933.8l10.3 10.3m0 -10.3l-10.3 10.3M977.3 989.0l9.0 9.0m0 -9.0l-9.0 9.0M1275.4 987.2l9.1 9.1m0 -9.1l-9.1 9.1M1125.7 567.4l9.3 9.3m0 -9.3l-9.3 9.3M1182.7 565.7l9.2 9.2m0 -9.2l-9.2 9.2M1181.6 565.1l11.0 11.0m0 -11.0l-11.0 11.0M1149.2 627.6l9.2 9.2m0 -9.2l-9.2 9.2M1201.6 635.0l10.2 10.2m0 -10.2l-10.2 10.2M1228.2 698.0l9.7 9.7m0 -9.7l-9.7 9.7M1206.4 705.6l10.2 10.2m0 -10.2l-10.2 10.2M1207.8 719.6l9.6 9.6m0 -9.6l-9.6 9.6M1167.2 771.2l10.8 10.8m0 -10.8l-10.8 10.8M1212.2 780.1l8.7 8.7m0 -8.7l-8.7 8.7M1250.4 791.3l9.2 9.2m0 -9.2l-9.2 9.2M1254.9 806.0l9.6 9.6m0 -9.6l-9.6 9.6M1287.7 821.9l9.2 9.2m0 -9.2l-9.2 9.2M1249.1 853.1l9.5 9.5m0 -9.5l-9.5 9.5M1141.5 855.1l11.1 11.1m0 -11.1l-11.1 11.1M1206.2 911.5l10.5 10.5m0 -10.5l-10.5 10.5M1276.2 989.0l8.6 8.6m0 -8.6l-8.6 8.6M1279.6 1012.4l11.2 11.2m0 -11.2l-11.2 11.2M1257.0 1025.2l10.8 10.8m0 -10.8l-10.8 10.8M1377.9 573.5l9.2 9.2m0 -9.2l-9.2 9.2M1391.6 628.3l9.3 9.3m0 -9.3l-9.3 9.3M1338.2 638.6l9.3 9.3m0 -9.3l-9.3 9.3M1349.5 678.9l8.8 8.8m0 -8.8l-8.8 8.8M1305.7 674.3l10.1 10.1m0 -10.1l-10.1 10.1M1266.0 681.7l11.0 11.0m0 -11.0l-11.0 11.0M1283.9 693.8l10.4 10.4m0 -10.4l-10.4 10.4M1280.6 676.7l9.2 9.2m0 -9.2l-9.2 9.2M1355.0 711.1l11.1 11.1m0 -11.1l-11.1 11.1M1321.9 780.0l9.0 9.0m0 -9.0l-9.0 9.0M1388.8 740.5l11.0 11.0m0 -11.0l-11.0 11.0M1424.6 755.9l9.4 9.4m0 -9.4l-9.4 9.4M1448.2 610.8l9.1 9.1m0 -9.1l-9.1 9.1M1491.2 570.2l10.2 10.2m0 -10.2l-10.2 10.2M1519.1 562.7l9.5 9.5m0 -9.5l-9.5 9.5M1538.6 601.1l11.2 11.2m0 -11.2l-11.2 11.2M1568.1 570.9l11.1 11.1m0 -11.1l-11.1 11.1M1564.6 625.1l10.3 10.3m0 -10.3l-10.3 10.3M1498.0 649.5l8.5 8.5m0 -8.5l-8.5 8.5M1526.3 655.5l10.8 10.8m0 -10.8l-10.8 10.8M1567.1 670.0l10.8 10.8m0 -10.8l-10.8 10.8M1495.9 676.2l10.3 10.3m0 -10.3l-10.3 10.3M1492.5 695.5l9.2 9.2m0 -9.2l-9.2 9.2M1461.0 727.6l9.5 9.5m0 -9.5l-9.5 9.5M1453.6 758.6l10.1 10.1m0 -10.1l-10.1 10.1M1467.4 761.4l10.8 10.8m0 -10.8l-10.8 10.8M1493.3 753.6l10.0 10.0m0 -10.0l-10.0 10.0M1537.5 745.1l9.6 9.6m0 -9.6l-9.6 9.6M1495.2 783.4l10.1 10.1m0 -10.1l-10.1 10.1M1499.7 814.1l10.6 10.6m0 -10.6l-10.6 10.6M1448.5 832.0l8.6 8.6m0 -8.6l-8.6 8.6M1482.4 847.9l9.8 9.8m0 -9.8l-9.8 9.8M1416.8 868.6l10.0 10.0m0 -10.0l-10.0 10.0M1444.3 912.2l9.0 9.0m0 -9.0l-9.0 9.0M1601.9 672.3l10.2 10.2m0 -10.2l-10.2 10.2M1616.3 686.6l8.9 8.9m0 -8.9l-8.9 8.9M1621.4 663.0l9.0 9.0m0 -9.0l-9.0 9.0M1632.9 591.4l11.1 11.1m0 -11.1l-11.1 11.1M1607.7 845.6l8.9 8.9m0 -8.9l-8.9 8.9M1585.9 876.0l10.8 10.8m0 -10.8l-10.8 10.8M1616.6 883.9l10.8 10.8m0 -10.8l-10.8 10.8M1644.7 862.2l11.0 11.0m0 -11.0l-11.0 11.0M1534.9 967.5l8.4 8.4m0 -8.4l-8.4 8.4M1563.0 986.5l9.6 9.6m0 -9.6l-9.6 9.6M1545.0 1003.9l10.3 10.3m0 -10.3l-10.3 10.3M1442.8 1027.3l10.6 10.6m0 -10.6l-10.6 10.6M1596.7 979.1l8.8 8.8m0 -8.8l-8.8 8.8M1657.1 727.4l9.8 9.8m0 -9.8l-9.8 9.8M1658.6 748.6l10.7 10.7m0 -10.7l-10.7 10.7M1634.1 731.9l8.8 8.8m0 -8.8l-8.8 8.8M1630.9 775.8l11.0 11.0m0 -11.0l-11.0 11.0M1641.4 792.2l9.8 9.8m0 -9.8l-9.8 9.8M874.2 1007.4l9.8 9.8m0 -9.8l-9.8 9.8M879.2 1018.4l9.9 9.9m0 -9.9l-9.9 9.9M1097.7 903.8l9.7 9.7m0 -9.7l-9.7 9.7M1114.3 906.1l8.5 8.5m0 -8.5l-8.5 8.5M1206.7 912.4l8.8 8.8m0 -8.8l-8.8 8.8M970.7 934.7l9.5 9.5m0 -9.5l-9.5 9.5M973.8 989.7l10.7 10.7m0 -10.7l-10.7 10.7M1275.1 988.2l10.3 10.3m0 -10.3l-10.3 10.3M1281.5 1013.1l9.7 9.7m0 -9.7l-9.7 9.7M1257.6 1027.9l9.7 9.7m0 -9.7l-9.7 9.7M1273.1 1042.2l9.2 9.2m0 -9.2l-9.2 9.2M1184.3 1058.3l9.2 9.2m0 -9.2l-9.2 9.2M1263.5 1064.7l11.2 11.2m0 -11.2l-11.2 11.2M1296.9 1063.0l8.6 8.6m0 -8.6l-8.6 8.6M1038.5 1085.2l8.7 8.7m0 -8.7l-8.7 8.7M1271.7 1090.1l9.7 9.7m0 -9.7l-9.7 9.7M1001.5 1112.4l9.5 9.5m0 -9.5l-9.5 9.5M884.5 1099.1l9.1 9.1m0 -9.1l-9.1 9.1M1199.7 1140.4l10.4 10.4m0 -10.4l-10.4 10.4M1292.8 1148.3l9.4 9.4m0 -9.4l-9.4 9.4M1058.4 1168.1l9.2 9.2m0 -9.2l-9.2 9.2M1084.7 1174.6l11.0 11.0m0 -11.0l-11.0 11.0M1104.1 1174.3l9.2 9.2m0 -9.2l-9.2 9.2M1142.0 1160.4l9.9 9.9m0 -9.9l-9.9 9.9M1076.1 1190.7l8.4 8.4m0 -8.4l-8.4 8.4M1252.0 1180.2l9.6 9.6m0 -9.6l-9.6 9.6M1423.3 756.8l10.0 10.0m0 -10.0l-10.0 10.0M1453.1 758.3l10.4 10.4m0 -10.4l-10.4 10.4M1468.0 761.9l8.8 8.8m0 -8.8l-8.8 8.8M1493.9 756.7l10.0 10.0m0 -10.0l-10.0 10.0M1495.5 784.9l8.9 8.9m0 -8.9l-8.9 8.9M1499.5 813.5l10.9 10.9m0 -10.9l-10.9 10.9M1446.9 830.6l10.7 10.7m0 -10.7l-10.7 10.7M1482.0 847.7l10.4 10.4m0 -10.4l-10.4 10.4M1416.8 867.9l10.3 10.3m0 -10.3l-10.3 10.3M1444.4 912.1l8.7 8.7m0 -8.7l-8.7 8.7M1606.5 844.0l10.8 10.8m0 -10.8l-10.8 10.8M1585.4 876.5l10.7 10.7m0 -10.7l-10.7 10.7M1603.6 873.5l9.7 9.7m0 -9.7l-9.7 9.7M1616.7 883.8l10.3 10.3m0 -10.3l-10.3 10.3M1645.4 864.1l10.8 10.8m0 -10.8l-10.8 10.8M1534.7 966.4l9.7 9.7m0 -9.7l-9.7 9.7M1562.3 985.9l11.0 11.0m0 -11.0l-11.0 11.0M1545.8 1004.7l8.6 8.6m0 -8.6l-8.6 8.6M1444.1 1028.4l9.2 9.2m0 -9.2l-9.2 9.2M1492.8 1064.8l8.6 8.6m0 -8.6l-8.6 8.6M1412.4 1114.0l9.1 9.1m0 -9.1l-9.1 9.1M1596.7 977.9l9.3 9.3m0 -9.3l-9.3 9.3M1604.9 968.5l10.5 10.5m0 -10.5l-10.5 10.5M1550.2 1042.7l10.5 10.5m0 -10.5l-10.5 10.5M1633.9 778.4l9.0 9.0m0 -9.0l-9.0 9.0M1642.6 790.7l9.3 9.3m0 -9.3l-9.3 9.3M1677.1 811.0l10.9 10.9m0 -10.9l-10.9 10.9M1658.8 875.8l8.6 8.6m0 -8.6l-8.6 8.6M1642.4 910.5l9.8 9.8m0 -9.8l-9.8 9.8M1569.9 572.4l8.5 8.5m0 -8.5l-8.5 8.5M1632.7 591.7l10.0 10.0m0 -10.0l-10.0 10.0M1567.5 625.4l10.9 10.9m0 -10.9l-10.9 10.9M1593.3 633.6l11.0 11.0m0 -11.0l-11.0 11.0M1621.0 662.4l9.9 9.9m0 -9.9l-9.9 9.9M1616.4 687.3l9.6 9.6m0 -9.6l-9.6 9.6M1602.6 672.2l9.0 9.0m0 -9.0l-9.0 9.0M1652.3 568.9l8.5 8.5m0 -8.5l-8.5 8.5M1659.3 571.1l8.7 8.7m0 -8.7l-8.7 8.7M1668.4 550.8l9.4 9.4m0 -9.4l-9.4 9.4M1669.9 565.3l11.0 11.0m0 -11.0l-11.0 11.0M1663.9 582.8l11.2 11.2m0 -11.2l-11.2 11.2M1659.1 601.5l9.1 9.1m0 -9.1l-9.1 9.1M1663.2 603.3l10.3 10.3m0 -10.3l-10.3 10.3M1668.4 603.8l9.3 9.3m0 -9.3l-9.3 9.3M1674.5 601.7l11.2 11.2m0 -11.2l-11.2 11.2M1682.5 603.7l9.5 9.5m0 -9.5l-9.5 9.5M1692.0 599.2l9.2 9.2m0 -9.2l-9.2 9.2M1682.9 671.3l10.9 10.9m0 -10.9l-10.9 10.9M1688.9 678.5l10.7 10.7m0 -10.7l-10.7 10.7M1693.9 699.9l10.2 10.2m0 -10.2l-10.2 10.2M1687.7 705.5l8.5 8.5m0 -8.5l-8.5 8.5M1660.8 706.9l10.3 10.3m0 -10.3l-10.3 10.3" fill="none" stroke="#cfcfcf" stroke-width="1.25"/>
<path d="M 1640 446 A 517 517 0 0 1 1420 1149" fill="none" stroke="#d8d8d8" stroke-width="1.1"/>
<path d="M 1420 1149 A 517 517 0 0 1 860 1092" fill="none" stroke="#c4c4c4" stroke-width="1" opacity=".7"/>
<path d="M1285.2 563.5 Q1318 680 1336 760 T1352 900 T1357.8 1000" fill="none" stroke="#a2a0ff" stroke-width="2.4"/>
<circle cx="983.5" cy="666" r="10.5" fill="#fff"/>
<circle cx="1184" cy="688" r="8" fill="#b0b8ff" opacity=".5" filter="url(#bl)"/><path d="M1178 682l12 12m0 -12l-12 12M1184 680v16M1176 688h16" stroke="#e8e8ff" stroke-width="1.2"/><circle cx="1184" cy="688" r="10" fill="none" stroke="#e0e020" stroke-width="1" stroke-dasharray="2.5,2"/>
<circle cx="1184" cy="688" r="19.5" fill="none" stroke="#f0f018" stroke-width="2.4"/><path d="M1184 664v8M1184 704v8M1160 688h8M1200 688h8" stroke="#f0f018" stroke-width="2.4"/>
<path d="M1166.6 582.5 L1147 566 M1166.6 582.5 L1151 566 M1166.6 582.5 L1156 565 M1166.6 582.5 L1160 566" stroke="#e0d020" stroke-width="1"/><circle cx="1166.6" cy="582.5" r="3" fill="#f0d020"/>
<circle cx="1357.5" cy="1012" r="13" fill="#000" stroke="#e8e8e8" stroke-width="1.4" stroke-dasharray="2.2,1.6"/><text x="1357.5" y="1018.5" font-size="18" fill="#f0f0f0" text-anchor="middle" font-family="Liberation Sans">S</text>
<rect x="1633" y="614.5" width="321" height="23" fill="#000"/><rect x="1645" y="637.5" width="290" height="23.5" fill="#000"/>
<text x="1646" y="401.8" font-size="19" fill="#8c8c8c" font-family="Liberation Sans" textLength="84.5" lengthAdjust="spacingAndGlyphs">1432=M45</text>
<text x="1635.6" y="632.8" font-size="19" fill="#8c8c8c" font-family="Liberation Sans" textLength="316.4" lengthAdjust="spacingAndGlyphs">IC434=Nebuleuse de la Tête de Cheval</text>
<text x="1646.7" y="656.8" font-size="19" fill="#8c8c8c" font-family="Liberation Sans" textLength="286.6" lengthAdjust="spacingAndGlyphs">NGC1976=M42=Nebuleuse d'Orion</text>
<path d="M1638 646l8 8m0 -8l-8 8" stroke="#cfcfcf" stroke-width="1.2"/>
</svg>
<div class="a" style="left:873px;top:1203px;width:1320px;height:34px;background:#e6e8f1;"></div>
<div class="a" style="left:873px;top:1203px;width:1320px;height:2px;background:#f4f5fa;"></div>
<span class="t" style="left:875px;top:1210px;font-size:14px;color:#3a3f55;transform-origin:0 0;transform:scaleX(0.9246);">carte Azimutal, Azimutal fixe, Date/heure PC temps réel</span>
<div class="a" style="left:1232px;top:1207px;width:408px;height:27px;border:1px solid #c9ccda;border-right-color:#f8f8fc;border-bottom-color:#f8f8fc;"></div>
<span class="t" style="left:1241px;top:1210px;font-size:14px;color:#3a3f55;transform-origin:0 0;transform:scaleX(0.9385);">EQ. J2000-1-1 (1.12s)</span>
<div class="a" style="left:873px;top:1237px;width:1320px;height:8px;background:#2b3159;"></div>
<div class="a" style="left:873px;top:1245px;width:1320px;height:23px;background:#e6e8f0;"></div>
<!-- p_image -->
<div class="a" style="left:0px;top:91px;width:8px;height:25px;background:#343b66;"></div>
<div class="a" style="left:0px;top:116px;width:7px;height:64px;background:#000;"></div>
<div class="a" style="left:0px;top:180px;width:7px;height:26px;background:#f2f2f6;"></div>
<div class="a" style="left:0px;top:206px;width:7px;height:994px;background:#000;"></div>
<div class="a" style="left:0px;top:1200px;width:7px;height:32px;background:#eef0f6;"></div>
<div class="a" style="left:0px;top:1232px;width:7px;height:14px;background:#2b3159;"></div>
<div class="a" style="left:0px;top:1246px;width:7px;height:22px;background:#e6e8f0;"></div>
<div class="a" style="left:7px;top:91px;width:866px;height:1178px;background:linear-gradient(#4a5280,#333a66 6px,#2b3159 30px);border-radius:7px 7px 0 0;box-shadow:inset 1px 1px 0 #5a6290;"></div>
<svg style="left:12px;top:94px" width="28" height="24" viewBox="12 94 28 24"><defs><linearGradient id="rbl" x1="0" y1="0" x2="0" y2="1"><stop offset="0" stop-color="#f04020"/><stop offset=".3" stop-color="#f0d020"/><stop offset=".6" stop-color="#30c840"/><stop offset="1" stop-color="#20a0d8"/></linearGradient><linearGradient id="rbr" x1="0" y1="0" x2="0" y2="1"><stop offset="0" stop-color="#f04020"/><stop offset=".3" stop-color="#e8d820"/><stop offset=".6" stop-color="#30c040"/><stop offset="1" stop-color="#2060d0"/></linearGradient></defs><path d="M18.5 112.2 H33" stroke="#1c2468" stroke-width="4" stroke-linecap="round"/><path d="M18.3 111 L24.3 100" stroke="url(#rbl)" stroke-width="4" stroke-linecap="round"/><path d="M33.2 111 L25.3 100" stroke="url(#rbr)" stroke-width="4" stroke-linecap="round"/></svg>
<svg style="left:0px;top:88px" width="7" height="20" viewBox="0 0 7 20"><path d="M-3 16 L5 2" stroke="url(#rbl)" stroke-width="4"/></svg>
<span class="t" style="left:40px;top:97.5px;font-size:15px;color:#7c85ad;transform-origin:0 0;transform:scaleX(0.9760);">G3-11000 | 1344x2016 - Monochrome - Réels(32bits)   [Zoom = 1/2]</span>
<div class="a" style="left:824px;top:109px;width:9px;height:2px;background:#7c85ad;"></div>
<svg style="left:846px;top:98px" width="14" height="14" viewBox="0 0 14 14"><path d="M2 2 L12 12 M12 2 L2 12" stroke="#8a92b8" stroke-width="2.4" fill="none"/></svg>
<div class="a" style="left:14px;top:124px;width:851px;height:1145px;background:#e9ebf3;"></div>
<div class="a" style="left:17px;top:126px;width:824px;height:1107px;background:#000;"></div>
<svg style="left:17px;top:126px;overflow:hidden" width="824" height="1107" viewBox="17 126 824 1107">
<defs><radialGradient id="vg" cx="0.5" cy="0.5" r="0.5"><stop offset="0" stop-color="#4e4e4e"/><stop offset=".5" stop-color="#4a4a4a"/><stop offset=".7" stop-color="#414141"/><stop offset=".8" stop-color="#2f2f2f"/><stop offset=".88" stop-color="#181818"/><stop offset=".955" stop-color="#000"/></radialGradient>
<filter id="nz" x="0" y="0" width="100%" height="100%" color-interpolation-filters="sRGB"><feTurbulence type="fractalNoise" baseFrequency="0.85" numOctaves="1" seed="5" result="n"/><feColorMatrix type="matrix" values="1.6 0 0 0 -0.3  1.6 0 0 0 -0.3  1.6 0 0 0 -0.3  0 0 0 0 1" in="n" result="m"/><feComposite in="SourceGraphic" in2="m" operator="arithmetic" k1="0.7" k2="0.65" k3="0" k4="0"/></filter>
</defs>
<g filter="url(#nz)"><rect x="17" y="126" width="824" height="1107" fill="#000"/><ellipse cx="430" cy="755" rx="567" ry="580" fill="url(#vg)"/></g>
<circle cx="390.0" cy="745.7" r="1.1" fill="#fff" opacity="0.38"/>
<circle cx="719.4" cy="338.9" r="1.1" fill="#fff" opacity="0.45"/>
<circle cx="668.7" cy="233.5" r="0.9" fill="#fff" opacity="0.26"/>
<circle cx="460.7" cy="1109.4" r="0.7" fill="#fff" opacity="0.44"/>
<circle cx="344.1" cy="628.3" r="0.8" fill="#fff" opacity="0.45"/>
<circle cx="700.3" cy="199.5" r="0.7" fill="#fff" opacity="0.28"/>
<circle cx="217.9" cy="163.1" r="1.1" fill="#fff" opacity="0.33"/>
<circle cx="503.4" cy="344.9" r="0.8" fill="#fff" opacity="0.46"/>
<circle cx="428.8" cy="858.7" r="1.1" fill="#fff" opacity="0.46"/>
<circle cx="352.7" cy="736.4" r="0.7" fill="#fff" opacity="0.48"/>
<circle cx="277.9" cy="382.6" r="0.9" fill="#fff" opacity="0.21"/>
<circle cx="480.7" cy="248.7" r="0.7" fill="#fff" opacity="0.54"/>
<circle cx="336.2" cy="1183.8" r="0.7" fill="#fff" opacity="0.29"/>
<circle cx="778.3" cy="187.6" r="1.1" fill="#fff" opacity="0.59"/>
<circle cx="345.1" cy="210.3" r="0.8" fill="#fff" opacity="0.51"/>
<circle cx="240.7" cy="225.9" r="0.9" fill="#fff" opacity="0.21"/>
<circle cx="355.4" cy="1145.1" r="0.8" fill="#fff" opacity="0.30"/>
<circle cx="102.7" cy="195.9" r="1.1" fill="#fff" opacity="0.27"/>
<circle cx="477.5" cy="622.2" r="0.8" fill="#fff" opacity="0.59"/>
<circle cx="649.5" cy="591.2" r="1.1" fill="#fff" opacity="0.25"/>
<circle cx="364.2" cy="364.2" r="0.9" fill="#fff" opacity="0.55"/>
<circle cx="817.4" cy="782.0" r="0.7" fill="#fff" opacity="0.28"/>
<circle cx="342.5" cy="1069.8" r="0.7" fill="#fff" opacity="0.22"/>
<circle cx="139.7" cy="615.7" r="0.7" fill="#fff" opacity="0.51"/>
<circle cx="289.1" cy="456.0" r="0.7" fill="#fff" opacity="0.23"/>
<circle cx="190.7" cy="830.2" r="0.7" fill="#fff" opacity="0.44"/>
<circle cx="324.1" cy="628.5" r="1.1" fill="#fff" opacity="0.53"/>
<circle cx="131.0" cy="554.7" r="0.8" fill="#fff" opacity="0.32"/>
<circle cx="206.8" cy="801.5" r="0.8" fill="#fff" opacity="0.26"/>
<circle cx="534.5" cy="739.3" r="1.1" fill="#fff" opacity="0.55"/>
<circle cx="513.7" cy="593.6" r="0.7" fill="#fff" opacity="0.24"/>
<circle cx="439.1" cy="410.7" r="1.1" fill="#fff" opacity="0.30"/>
<circle cx="693.8" cy="786.1" r="0.9" fill="#fff" opacity="0.41"/>
<circle cx="780.1" cy="1204.9" r="0.8" fill="#fff" opacity="0.29"/>
<circle cx="477.6" cy="1067.6" r="0.7" fill="#fff" opacity="0.31"/>
<circle cx="770.4" cy="354.4" r="0.7" fill="#fff" opacity="0.23"/>
<circle cx="356.5" cy="404.0" r="0.7" fill="#fff" opacity="0.27"/>
<circle cx="321.7" cy="759.4" r="0.8" fill="#fff" opacity="0.24"/>
<circle cx="133.2" cy="625.4" r="0.9" fill="#fff" opacity="0.46"/>
<circle cx="585.4" cy="772.9" r="0.8" fill="#fff" opacity="0.44"/>
<circle cx="775.5" cy="652.3" r="0.9" fill="#fff" opacity="0.48"/>
<circle cx="807.5" cy="153.4" r="0.7" fill="#fff" opacity="0.39"/>
<circle cx="617.5" cy="480.8" r="0.7" fill="#fff" opacity="0.23"/>
<circle cx="466.7" cy="940.7" r="0.8" fill="#fff" opacity="0.52"/>
<circle cx="768.5" cy="517.0" r="1.1" fill="#fff" opacity="0.56"/>
<circle cx="732.6" cy="588.9" r="0.7" fill="#fff" opacity="0.55"/>
<circle cx="488.6" cy="817.5" r="1.1" fill="#fff" opacity="0.35"/>
<circle cx="30.2" cy="209.5" r="0.7" fill="#fff" opacity="0.46"/>
<circle cx="832.5" cy="1097.8" r="0.9" fill="#fff" opacity="0.36"/>
<circle cx="621.3" cy="769.0" r="1.1" fill="#fff" opacity="0.39"/>
<circle cx="462.7" cy="700.6" r="0.7" fill="#fff" opacity="0.32"/>
<circle cx="91.8" cy="154.5" r="0.7" fill="#fff" opacity="0.40"/>
<circle cx="522.7" cy="1142.5" r="0.9" fill="#fff" opacity="0.56"/>
<circle cx="321.0" cy="287.5" r="0.8" fill="#fff" opacity="0.41"/>
<circle cx="636.6" cy="506.8" r="1.1" fill="#fff" opacity="0.40"/>
<circle cx="217.5" cy="575.2" r="0.9" fill="#fff" opacity="0.28"/>
<circle cx="372.5" cy="1016.6" r="0.8" fill="#fff" opacity="0.55"/>
<circle cx="334.5" cy="771.4" r="0.9" fill="#fff" opacity="0.28"/>
<circle cx="130.1" cy="515.8" r="0.7" fill="#fff" opacity="0.48"/>
<circle cx="797.1" cy="434.5" r="0.8" fill="#fff" opacity="0.25"/>
<circle cx="405.6" cy="1148.3" r="1.1" fill="#fff" opacity="0.35"/>
<circle cx="445.3" cy="869.4" r="1.1" fill="#fff" opacity="0.33"/>
<circle cx="697.9" cy="435.9" r="0.7" fill="#fff" opacity="0.47"/>
<circle cx="249.9" cy="519.6" r="0.7" fill="#fff" opacity="0.46"/>
<circle cx="351.4" cy="338.9" r="0.9" fill="#fff" opacity="0.29"/>
<circle cx="135.2" cy="181.6" r="0.7" fill="#fff" opacity="0.38"/>
<circle cx="535.3" cy="850.5" r="0.9" fill="#fff" opacity="0.58"/>
<circle cx="579.9" cy="349.3" r="1.1" fill="#fff" opacity="0.30"/>
<circle cx="604.2" cy="960.6" r="0.7" fill="#fff" opacity="0.27"/>
<circle cx="242.8" cy="510.3" r="0.8" fill="#fff" opacity="0.36"/>
<circle cx="667.8" cy="1126.9" r="0.7" fill="#fff" opacity="0.36"/>
<circle cx="750.2" cy="556.8" r="1.1" fill="#fff" opacity="0.38"/>
<circle cx="531.7" cy="1131.0" r="1.1" fill="#fff" opacity="0.42"/>
<circle cx="553.9" cy="682.9" r="0.9" fill="#fff" opacity="0.39"/>
<circle cx="552.8" cy="355.4" r="0.7" fill="#fff" opacity="0.29"/>
<circle cx="756.2" cy="1208.5" r="0.9" fill="#fff" opacity="0.41"/>
<circle cx="666.9" cy="482.4" r="0.7" fill="#fff" opacity="0.34"/>
<circle cx="87.7" cy="615.0" r="1.1" fill="#fff" opacity="0.51"/>
<circle cx="418.7" cy="161.3" r="0.7" fill="#fff" opacity="0.37"/>
<circle cx="48.7" cy="716.4" r="0.8" fill="#fff" opacity="0.39"/>
<circle cx="837.9" cy="1120.6" r="1.1" fill="#fff" opacity="0.58"/>
<circle cx="422.9" cy="1174.1" r="0.7" fill="#fff" opacity="0.50"/>
<circle cx="379.4" cy="744.7" r="0.8" fill="#fff" opacity="0.41"/>
<circle cx="710.1" cy="746.0" r="0.9" fill="#fff" opacity="0.47"/>
<circle cx="801.0" cy="1087.1" r="0.8" fill="#fff" opacity="0.32"/>
<circle cx="135.5" cy="729.2" r="0.9" fill="#fff" opacity="0.43"/>
<circle cx="184.4" cy="719.5" r="0.7" fill="#fff" opacity="0.44"/>
<circle cx="42.7" cy="1196.3" r="1.1" fill="#fff" opacity="0.42"/>
<circle cx="829.3" cy="264.1" r="0.7" fill="#fff" opacity="0.48"/>
<circle cx="73.9" cy="722.6" r="1.1" fill="#fff" opacity="0.57"/>
<circle cx="674.7" cy="574.6" r="0.8" fill="#fff" opacity="0.39"/>
<circle cx="123.9" cy="607.0" r="1.1" fill="#fff" opacity="0.41"/>
<circle cx="108.8" cy="591.5" r="0.7" fill="#fff" opacity="0.57"/>
<circle cx="125.9" cy="987.2" r="0.7" fill="#fff" opacity="0.21"/>
<circle cx="147.2" cy="143.0" r="0.9" fill="#fff" opacity="0.33"/>
<circle cx="310.7" cy="811.7" r="0.7" fill="#fff" opacity="0.40"/>
<circle cx="496.3" cy="1067.1" r="0.9" fill="#fff" opacity="0.49"/>
<circle cx="593.7" cy="1096.6" r="0.7" fill="#fff" opacity="0.35"/>
<circle cx="358.2" cy="712.3" r="0.8" fill="#fff" opacity="0.42"/>
<circle cx="726.6" cy="717.4" r="0.8" fill="#fff" opacity="0.41"/>
<circle cx="716.3" cy="802.9" r="0.8" fill="#fff" opacity="0.29"/>
<circle cx="626.0" cy="1021.6" r="0.8" fill="#fff" opacity="0.33"/>
<circle cx="277.7" cy="1145.0" r="0.8" fill="#fff" opacity="0.51"/>
<circle cx="179.1" cy="236.5" r="0.8" fill="#fff" opacity="0.25"/>
<circle cx="92.1" cy="556.7" r="1.1" fill="#fff" opacity="0.53"/>
<circle cx="364.9" cy="998.9" r="0.8" fill="#fff" opacity="0.28"/>
<circle cx="533.7" cy="1008.7" r="0.7" fill="#fff" opacity="0.28"/>
<circle cx="578.2" cy="1132.5" r="0.9" fill="#fff" opacity="0.25"/>
<circle cx="433.6" cy="964.0" r="0.8" fill="#fff" opacity="0.52"/>
<circle cx="414.3" cy="156.7" r="1.1" fill="#fff" opacity="0.26"/>
<circle cx="171.0" cy="354.3" r="0.8" fill="#fff" opacity="0.60"/>
<circle cx="778.2" cy="234.8" r="0.7" fill="#fff" opacity="0.25"/>
<circle cx="577.0" cy="215.4" r="0.7" fill="#fff" opacity="0.33"/>
<circle cx="402.0" cy="696.8" r="1.1" fill="#fff" opacity="0.28"/>
<circle cx="325.2" cy="827.4" r="0.7" fill="#fff" opacity="0.54"/>
<circle cx="168.3" cy="629.3" r="0.9" fill="#fff" opacity="0.36"/>
<circle cx="179.6" cy="311.6" r="0.7" fill="#fff" opacity="0.33"/>
<circle cx="89.4" cy="1056.1" r="1.1" fill="#fff" opacity="0.43"/>
<circle cx="176.2" cy="773.1" r="0.9" fill="#fff" opacity="0.52"/>
<circle cx="231.3" cy="1132.4" r="0.8" fill="#fff" opacity="0.53"/>
<circle cx="351.8" cy="1116.2" r="0.9" fill="#fff" opacity="0.51"/>
<circle cx="646.0" cy="576.3" r="0.8" fill="#fff" opacity="0.23"/>
<circle cx="299.5" cy="645.7" r="0.7" fill="#fff" opacity="0.56"/>
<circle cx="830.3" cy="1123.0" r="0.7" fill="#fff" opacity="0.29"/>
<circle cx="792.7" cy="862.7" r="0.9" fill="#fff" opacity="0.29"/>
<circle cx="352.2" cy="330.2" r="0.7" fill="#fff" opacity="0.36"/>
<circle cx="837.9" cy="836.5" r="0.7" fill="#fff" opacity="0.50"/>
<circle cx="821.7" cy="155.1" r="0.7" fill="#fff" opacity="0.50"/>
<circle cx="229.9" cy="571.7" r="0.7" fill="#fff" opacity="0.50"/>
<circle cx="550.1" cy="141.9" r="0.9" fill="#fff" opacity="0.30"/>
<circle cx="760.8" cy="735.1" r="1.1" fill="#fff" opacity="0.59"/>
<circle cx="484.6" cy="1224.6" r="1.1" fill="#fff" opacity="0.52"/>
<circle cx="82.3" cy="787.3" r="0.7" fill="#fff" opacity="0.35"/>
<circle cx="787.8" cy="554.5" r="0.8" fill="#fff" opacity="0.54"/>
<circle cx="463.3" cy="786.2" r="1.1" fill="#fff" opacity="0.58"/>
<circle cx="364.1" cy="709.4" r="0.9" fill="#fff" opacity="0.35"/>
<circle cx="253.7" cy="850.6" r="0.9" fill="#fff" opacity="0.47"/>
<circle cx="631.7" cy="159.5" r="0.8" fill="#fff" opacity="0.43"/>
<circle cx="537.8" cy="579.7" r="1.1" fill="#fff" opacity="0.22"/>
<circle cx="277.8" cy="567.5" r="0.9" fill="#fff" opacity="0.23"/>
<circle cx="760.7" cy="602.5" r="1.1" fill="#fff" opacity="0.30"/>
<circle cx="638.0" cy="180.0" r="0.7" fill="#fff" opacity="0.57"/>
<circle cx="611.2" cy="645.2" r="0.8" fill="#fff" opacity="0.44"/>
<circle cx="114.1" cy="816.7" r="1.1" fill="#fff" opacity="0.25"/>
<circle cx="724.4" cy="522.4" r="0.8" fill="#fff" opacity="0.25"/>
<circle cx="382.3" cy="864.7" r="1.1" fill="#fff" opacity="0.44"/>
<circle cx="543.2" cy="880.2" r="0.9" fill="#fff" opacity="0.51"/>
<circle cx="454.2" cy="1227.4" r="0.9" fill="#fff" opacity="0.49"/>
<circle cx="215.0" cy="255.3" r="0.9" fill="#fff" opacity="0.51"/>
<circle cx="531.2" cy="525.1" r="0.9" fill="#fff" opacity="0.44"/>
<circle cx="613.1" cy="898.9" r="0.8" fill="#fff" opacity="0.45"/>
<circle cx="636.2" cy="338.8" r="0.8" fill="#fff" opacity="0.40"/>
<circle cx="554.1" cy="345.6" r="0.7" fill="#fff" opacity="0.45"/>
<circle cx="27.8" cy="415.5" r="0.7" fill="#fff" opacity="0.45"/>
<circle cx="103.8" cy="725.8" r="0.7" fill="#fff" opacity="0.50"/>
<circle cx="766.7" cy="306.9" r="0.8" fill="#fff" opacity="0.45"/>
<circle cx="325.3" cy="656.4" r="0.8" fill="#fff" opacity="0.34"/>
<circle cx="424.4" cy="276.7" r="0.7" fill="#fff" opacity="0.52"/>
<circle cx="385.9" cy="1034.2" r="0.8" fill="#fff" opacity="0.38"/>
<circle cx="631.3" cy="559.1" r="0.8" fill="#fff" opacity="0.35"/>
<circle cx="554.7" cy="1218.1" r="0.9" fill="#fff" opacity="0.32"/>
<circle cx="640.8" cy="1038.8" r="0.8" fill="#fff" opacity="0.37"/>
<circle cx="322.1" cy="236.7" r="0.9" fill="#fff" opacity="0.23"/>
<circle cx="87.9" cy="750.6" r="1.1" fill="#fff" opacity="0.53"/>
<circle cx="399.2" cy="1035.8" r="0.7" fill="#fff" opacity="0.23"/>
<circle cx="194.4" cy="858.3" r="0.7" fill="#fff" opacity="0.48"/>
<circle cx="424.7" cy="970.6" r="0.9" fill="#fff" opacity="0.31"/>
<circle cx="136.9" cy="523.6" r="0.9" fill="#fff" opacity="0.35"/>
<circle cx="116.0" cy="910.2" r="0.9" fill="#fff" opacity="0.38"/>
<circle cx="676.9" cy="465.2" r="0.9" fill="#fff" opacity="0.29"/>
<circle cx="718.4" cy="346.8" r="1.87" fill="#fff" opacity=".92"/>
<circle cx="826.3" cy="366.8" r="1.53" fill="#fff" opacity=".92"/>
<circle cx="744.8" cy="409.6" r="1.7" fill="#fff" opacity=".92"/>
<circle cx="639" cy="311" r="1.275" fill="#fff" opacity=".92"/>
<circle cx="653" cy="378" r="1.19" fill="#fff" opacity=".92"/>
<circle cx="647.8" cy="440" r="1.275" fill="#fff" opacity=".92"/>
<circle cx="757" cy="523.5" r="1.7" fill="#fff" opacity=".92"/>
<circle cx="692" cy="546.7" r="1.7" fill="#fff" opacity=".92"/>
<circle cx="751.6" cy="500" r="1.105" fill="#fff" opacity=".92"/>
<circle cx="674" cy="636" r="1.7" fill="#fff" opacity=".92"/>
<circle cx="759" cy="220" r="1.105" fill="#fff" opacity=".92"/>
<circle cx="735" cy="234" r="0.935" fill="#fff" opacity=".92"/>
<circle cx="569.7" cy="653" r="2.04" fill="#fff" opacity=".92"/>
<circle cx="304.5" cy="649" r="1.36" fill="#fff" opacity=".92"/>
<circle cx="823.5" cy="842" r="1.87" fill="#fff" opacity=".92"/>
<circle cx="809.6" cy="899" r="1.275" fill="#fff" opacity=".92"/>
<circle cx="735.5" cy="1024.7" r="1.445" fill="#fff" opacity=".92"/>
<circle cx="368.8" cy="1186.8" r="1.7" fill="#fff" opacity=".92"/>
<circle cx="804" cy="857" r="1.19" fill="#fff" opacity=".92"/>
<circle cx="834" cy="683" r="1.36" fill="#fff" opacity=".92"/>
<circle cx="751" cy="812" r="1.105" fill="#fff" opacity=".92"/>
<circle cx="704" cy="1170" r="1.275" fill="#fff" opacity=".92"/>
<circle cx="111" cy="652" r="1.275" fill="#fff" opacity=".92"/>
<circle cx="257" cy="1183" r="1.36" fill="#fff" opacity=".92"/>
<circle cx="243" cy="186" r="1.105" fill="#fff" opacity=".92"/>
<circle cx="153" cy="195" r="1.02" fill="#fff" opacity=".92"/>
<circle cx="228" cy="168" r="1.02" fill="#fff" opacity=".92"/>
<circle cx="465" cy="164" r="0.85" fill="#fff" opacity=".92"/>
<circle cx="592" cy="628" r="1.36" fill="#fff" opacity=".92"/>
<circle cx="598" cy="640" r="1.105" fill="#fff" opacity=".92"/>
<circle cx="675" cy="642" r="1.36" fill="#fff" opacity=".92"/>
<circle cx="588" cy="1215" r="1.275" fill="#fff" opacity=".92"/>
<circle cx="660" cy="1211" r="1.105" fill="#fff" opacity=".92"/>
<circle cx="170" cy="1205" r="1.105" fill="#fff" opacity=".92"/>
<circle cx="790" cy="1150" r="1.02" fill="#fff" opacity=".92"/>
<circle cx="778" cy="985" r="1.105" fill="#fff" opacity=".92"/>
<circle cx="766" cy="748" r="1.02" fill="#fff" opacity=".92"/>
<circle cx="689" cy="753" r="1.02" fill="#fff" opacity=".92"/>
<rect x="436" y="126" width="1.2" height="1107" fill="#5a10b0"/><rect x="437.2" y="126" width="1" height="1107" fill="#c0206a"/>
<rect x="17" y="755" width="824" height="1.2" fill="#4a28c8"/><rect x="17" y="756.2" width="824" height="1.2" fill="#e01848"/>
</svg>
<div class="a" style="left:22.5px;top:132.6px;width:146px;height:25px;border:1.5px solid #e00000;"></div>
<span class="t" style="left:26px;top:136.5px;font-size:16.5px;color:#e80000;font-weight:bold;font-family:'Liberation Mono',monospace;transform-origin:0 0;transform:scaleX(1.0026);">Grille Centrée</span>
<div class="a" style="left:841px;top:126px;width:23px;height:1107px;background:linear-gradient(90deg,#d0d3e3,#e4e6f1 40%,#eceef6);"></div>
<div class="a" style="left:842px;top:127px;width:21px;height:21px;background:linear-gradient(#f2f3f9,#dcdfec);border:1px solid #c2c6d8;border-radius:3px;"></div>
<svg style="left:847px;top:134px" width="11" height="7"><path d="M0.5 6 L5.5 1 L10.5 6 Z" fill="#4a5078"/></svg>
<div class="a" style="left:842px;top:148px;width:21px;height:930px;background:linear-gradient(90deg,#e2e4f0,#f0f1f8 50%,#e0e2ee);border:1px solid #c6c9da;border-radius:3px;"></div>
<div class="a" style="left:849px;top:610px;width:7px;height:1px;background:#8c90aa;"></div>
<div class="a" style="left:849px;top:613px;width:7px;height:1px;background:#8c90aa;"></div>
<div class="a" style="left:849px;top:616px;width:7px;height:1px;background:#8c90aa;"></div>
<div class="a" style="left:842px;top:1211px;width:21px;height:21px;background:linear-gradient(#f2f3f9,#dcdfec);border:1px solid #c2c6d8;border-radius:3px;"></div>
<svg style="left:847px;top:1218px" width="11" height="7"><path d="M0.5 1 L5.5 6 L10.5 1 Z" fill="#4a5078"/></svg>
<div class="a" style="left:17px;top:1233px;width:847px;height:21px;background:linear-gradient(#d0d3e3,#e4e6f1 40%,#eceef6);"></div>
<div class="a" style="left:18px;top:1234px;width:20px;height:19px;background:linear-gradient(#f2f3f9,#dcdfec);border:1px solid #c2c6d8;border-radius:3px;"></div>
<svg style="left:24px;top:1238px" width="7" height="11"><path d="M6 0.5 L1 5.5 L6 10.5 Z" fill="#4a5078"/></svg>
<div class="a" style="left:38px;top:1234px;width:767px;height:19px;background:linear-gradient(#eceef6,#e6e8f2 50%,#dcdfec);border:1px solid #c6c9da;border-radius:3px;"></div>
<div class="a" style="left:418px;top:1240px;width:1px;height:7px;background:#8c90aa;"></div>
<div class="a" style="left:421px;top:1240px;width:1px;height:7px;background:#8c90aa;"></div>
<div class="a" style="left:820px;top:1234px;width:20px;height:19px;background:linear-gradient(#f2f3f9,#dcdfec);border:1px solid #c2c6d8;border-radius:3px;"></div>
<svg style="left:827px;top:1238px" width="7" height="11"><path d="M1 0.5 L6 5.5 L1 10.5 Z" fill="#4a5078"/></svg>
<div class="a" style="left:841px;top:1233px;width:23px;height:21px;background:#e9ebf3;"></div>
<div class="a" style="left:14px;top:1254px;width:851px;height:16px;background:linear-gradient(#eff0f7,#e2e4ee);"></div>
<div class="a" style="left:233px;top:1257px;width:1px;height:13px;background:#c4c7d6;"></div>
<div class="a" style="left:326.6px;top:1257px;width:1px;height:13px;background:#c4c7d6;"></div>
<div class="a" style="left:388px;top:1257px;width:1px;height:13px;background:#c4c7d6;"></div>
<div class="a" style="left:451px;top:1257px;width:1px;height:13px;background:#c4c7d6;"></div>
<div class="a" style="left:549.5px;top:1257px;width:1px;height:13px;background:#c4c7d6;"></div>
<div class="a" style="left:686px;top:1257px;width:1px;height:13px;background:#c4c7d6;"></div>
<div class="a" style="left:798.5px;top:1257px;width:1px;height:13px;background:#c4c7d6;"></div>
<div class="a" style="left:844px;top:1257px;width:1px;height:13px;background:#c4c7d6;"></div>
<div class="a" style="left:14px;top:1254px;width:851px;height:15.5px;overflow:hidden">
<span class="t" style="left:223px;top:10px;font-size:15px;color:#22263a;">10</span>
<span class="t" style="left:316px;top:10px;font-size:15px;color:#22263a;">Bin 2x2</span>
<span class="t" style="left:384px;top:10px;font-size:15px;color:#22263a;">-20.0°C</span>
<span class="t" style="left:440.5px;top:10px;font-size:15px;color:#22263a;">MX=0 MY=0</span>
<span class="t" style="left:539px;top:10px;font-size:15px;color:#22263a;">Filtre Lumi</span>
<span class="t" style="left:676px;top:10px;font-size:15px;color:#22263a;">Fx= 1143.0</span>
<span class="t" style="left:820.6px;top:10px;font-size:15px;color:#22263a;">3.25</span>
</div>
<div class="a" style="left:7px;top:1269.5px;width:866px;height:5px;background:#eceef4;"></div>
<div class="a" style="left:0px;top:1268.7px;width:873px;height:1px;background:#b4b8c8;"></div>
<svg style="left:832px;top:178px" width="22" height="30" viewBox="0 0 22 30"><path d="M6 28 L3 20 L1 14 Q1 11.5 3 12 L5 16 V5 Q5 3 6.7 3 Q8.3 3 8.3 5 V3.5 Q8.3 1.5 10 1.5 Q11.7 1.5 11.7 3.5 V4.5 Q11.7 2.8 13.3 2.8 Q15 2.8 15 4.8 V6.5 Q15 5 16.5 5 Q18 5 18 7 V19 Q18 24 16 28 Z" fill="#fff" stroke="#000" stroke-width="1.2"/><path d="M8.3 5 V13 M11.7 4.5 V13 M15 6.5 V13" stroke="#000" stroke-width="1"/></svg>
<!-- p_alpha -->
<div class="a" style="left:-10px;top:206px;width:638px;height:417px;background:linear-gradient(#4a5280,#363d69 5px,#2b3159 34px);border-radius:7px 7px 0 0;box-shadow:0 0 0 1px #20254a;"></div>
<svg style="left:-4.5px;top:214px" width="17" height="17" viewBox="0 0 17 17"><polygon points="8.50,0.10 10.68,3.23 14.44,2.56 13.77,6.32 16.90,8.50 13.77,10.68 14.44,14.44 10.68,13.77 8.50,16.90 6.32,13.77 2.56,14.44 3.23,10.68 0.10,8.50 3.23,6.32 2.56,2.56 6.32,3.23" fill="#d4d4da" stroke="#14183a" stroke-width="0.9" stroke-linejoin="round"/><circle cx="8.5" cy="8.500" r="3.5" fill="#4a4e66" stroke="#20243f" stroke-width="0.8"/><circle cx="8.5" cy="8.5" r="1.7" fill="#b8b8c4"/></svg>
<span class="t" style="left:20px;top:213.5px;font-size:15px;color:#7c85ad;transform-origin:0 0;transform:scaleX(0.9918);">Axe Alpha</span>
<svg style="left:601px;top:215px" width="14" height="14" viewBox="0 0 14 14"><path d="M2 2 L12 12 M12 2 L2 12" stroke="#8a92b8" stroke-width="2.6" fill="none"/></svg>
<div class="a" style="left:-10px;top:241px;width:630px;height:373px;background:#e9ebf3;"></div>
<div class="a" style="left:-10px;top:241.5px;width:624.5px;height:314px;background:#fff;border:1px solid #fff;"></div>
<div class="a" style="left:-10px;top:244px;width:623.5px;height:311px;background:#fff;border:1.3px solid #111;"></div>
<svg style="left:0px;top:246px" width="612" height="308" viewBox="0 246 612 308" shape-rendering="auto">
<line x1="60.2" y1="306.3" x2="60.2" y2="494.4" stroke="#a0a0a0" stroke-width="1"/>
<line x1="119.9" y1="306.3" x2="119.9" y2="494.4" stroke="#a0a0a0" stroke-width="1"/>
<line x1="179.6" y1="306.3" x2="179.6" y2="494.4" stroke="#a0a0a0" stroke-width="1"/>
<line x1="239.3" y1="306.3" x2="239.3" y2="494.4" stroke="#a0a0a0" stroke-width="1"/>
<line x1="299" y1="306.3" x2="299" y2="494.4" stroke="#a0a0a0" stroke-width="1"/>
<line x1="358.7" y1="306.3" x2="358.7" y2="494.4" stroke="#a0a0a0" stroke-width="1"/>
<line x1="418.4" y1="306.3" x2="418.4" y2="494.4" stroke="#a0a0a0" stroke-width="1"/>
<line x1="478.1" y1="306.3" x2="478.1" y2="494.4" stroke="#a0a0a0" stroke-width="1"/>
<line x1="537.8" y1="306.3" x2="537.8" y2="494.4" stroke="#a0a0a0" stroke-width="1"/>
<line x1="60.2" y1="323.9" x2="553.6" y2="323.9" stroke="#a0a0a0" stroke-width="1"/>
<line x1="60.2" y1="428.9" x2="553.6" y2="428.9" stroke="#a0a0a0" stroke-width="1"/>
<rect x="60.2" y="306.3" width="493.4" height="188.1" fill="none" stroke="#111" stroke-width="1.3"/>
<line x1="55.2" y1="313.4" x2="60.2" y2="313.4" stroke="#111" stroke-width="1.2"/>
<line x1="50.2" y1="323.9" x2="60.2" y2="323.9" stroke="#111" stroke-width="1.2"/>
<line x1="55.2" y1="334.4" x2="60.2" y2="334.4" stroke="#111" stroke-width="1.2"/>
<line x1="55.2" y1="344.9" x2="60.2" y2="344.9" stroke="#111" stroke-width="1.2"/>
<line x1="55.2" y1="355.4" x2="60.2" y2="355.4" stroke="#111" stroke-width="1.2"/>
<line x1="55.2" y1="365.9" x2="60.2" y2="365.9" stroke="#111" stroke-width="1.2"/>
<line x1="55.2" y1="376.4" x2="60.2" y2="376.4" stroke="#111" stroke-width="1.2"/>
<line x1="55.2" y1="386.9" x2="60.2" y2="386.9" stroke="#111" stroke-width="1.2"/>
<line x1="55.2" y1="397.4" x2="60.2" y2="397.4" stroke="#111" stroke-width="1.2"/>
<line x1="55.2" y1="407.9" x2="60.2" y2="407.9" stroke="#111" stroke-width="1.2"/>
<line x1="55.2" y1="418.4" x2="60.2" y2="418.4" stroke="#111" stroke-width="1.2"/>
<line x1="50.2" y1="428.9" x2="60.2" y2="428.9" stroke="#111" stroke-width="1.2"/>
<line x1="55.2" y1="439.4" x2="60.2" y2="439.4" stroke="#111" stroke-width="1.2"/>
<line x1="55.2" y1="449.9" x2="60.2" y2="449.9" stroke="#111" stroke-width="1.2"/>
<line x1="55.2" y1="460.4" x2="60.2" y2="460.4" stroke="#111" stroke-width="1.2"/>
<line x1="55.2" y1="470.9" x2="60.2" y2="470.9" stroke="#111" stroke-width="1.2"/>
<line x1="55.2" y1="481.4" x2="60.2" y2="481.4" stroke="#111" stroke-width="1.2"/>
<line x1="55.2" y1="491.9" x2="60.2" y2="491.9" stroke="#111" stroke-width="1.2"/>
<line x1="60.2" y1="494.4" x2="60.2" y2="504.4" stroke="#111" stroke-width="1.1"/>
<line x1="66.17" y1="494.4" x2="66.17" y2="499.4" stroke="#111" stroke-width="1.1"/>
<line x1="72.14" y1="494.4" x2="72.14" y2="499.4" stroke="#111" stroke-width="1.1"/>
<line x1="78.11" y1="494.4" x2="78.11" y2="499.4" stroke="#111" stroke-width="1.1"/>
<line x1="84.08" y1="494.4" x2="84.08" y2="499.4" stroke="#111" stroke-width="1.1"/>
<line x1="90.05" y1="494.4" x2="90.05" y2="499.4" stroke="#111" stroke-width="1.1"/>
<line x1="96.02" y1="494.4" x2="96.02" y2="499.4" stroke="#111" stroke-width="1.1"/>
<line x1="101.99" y1="494.4" x2="101.99" y2="499.4" stroke="#111" stroke-width="1.1"/>
<line x1="107.96" y1="494.4" x2="107.96" y2="499.4" stroke="#111" stroke-width="1.1"/>
<line x1="113.93" y1="494.4" x2="113.93" y2="499.4" stroke="#111" stroke-width="1.1"/>
<line x1="119.9" y1="494.4" x2="119.9" y2="504.4" stroke="#111" stroke-width="1.1"/>
<line x1="125.87" y1="494.4" x2="125.87" y2="499.4" stroke="#111" stroke-width="1.1"/>
<line x1="131.84" y1="494.4" x2="131.84" y2="499.4" stroke="#111" stroke-width="1.1"/>
<line x1="137.81" y1="494.4" x2="137.81" y2="499.4" stroke="#111" stroke-width="1.1"/>
<line x1="143.78" y1="494.4" x2="143.78" y2="499.4" stroke="#111" stroke-width="1.1"/>
<line x1="149.75" y1="494.4" x2="149.75" y2="499.4" stroke="#111" stroke-width="1.1"/>
<line x1="155.72" y1="494.4" x2="155.72" y2="499.4" stroke="#111" stroke-width="1.1"/>
<line x1="161.69" y1="494.4" x2="161.69" y2="499.4" stroke="#111" stroke-width="1.1"/>
<line x1="167.66" y1="494.4" x2="167.66" y2="499.4" stroke="#111" stroke-width="1.1"/>
<line x1="173.63" y1="494.4" x2="173.63" y2="499.4" stroke="#111" stroke-width="1.1"/>
<line x1="179.6" y1="494.4" x2="179.6" y2="504.4" stroke="#111" stroke-width="1.1"/>
<line x1="185.57" y1="494.4" x2="185.57" y2="499.4" stroke="#111" stroke-width="1.1"/>
<line x1="191.54" y1="494.4" x2="191.54" y2="499.4" stroke="#111" stroke-width="1.1"/>
<line x1="197.51" y1="494.4" x2="197.51" y2="499.4" stroke="#111" stroke-width="1.1"/>
<line x1="203.48" y1="494.4" x2="203.48" y2="499.4" stroke="#111" stroke-width="1.1"/>
<line x1="209.45" y1="494.4" x2="209.45" y2="499.4" stroke="#111" stroke-width="1.1"/>
<line x1="215.42" y1="494.4" x2="215.42" y2="499.4" stroke="#111" stroke-width="1.1"/>
<line x1="221.39" y1="494.4" x2="221.39" y2="499.4" stroke="#111" stroke-width="1.1"/>
<line x1="227.36" y1="494.4" x2="227.36" y2="499.4" stroke="#111" stroke-width="1.1"/>
<line x1="233.33" y1="494.4" x2="233.33" y2="499.4" stroke="#111" stroke-width="1.1"/>
<line x1="239.3" y1="494.4" x2="239.3" y2="504.4" stroke="#111" stroke-width="1.1"/>
<line x1="245.27" y1="494.4" x2="245.27" y2="499.4" stroke="#111" stroke-width="1.1"/>
<line x1="251.24" y1="494.4" x2="251.24" y2="499.4" stroke="#111" stroke-width="1.1"/>
<line x1="257.21" y1="494.4" x2="257.21" y2="499.4" stroke="#111" stroke-width="1.1"/>
<line x1="263.18" y1="494.4" x2="263.18" y2="499.4" stroke="#111" stroke-width="1.1"/>
<line x1="269.15" y1="494.4" x2="269.15" y2="499.4" stroke="#111" stroke-width="1.1"/>
<line x1="275.12" y1="494.4" x2="275.12" y2="499.4" stroke="#111" stroke-width="1.1"/>
<line x1="281.09" y1="494.4" x2="281.09" y2="499.4" stroke="#111" stroke-width="1.1"/>
<line x1="287.06" y1="494.4" x2="287.06" y2="499.4" stroke="#111" stroke-width="1.1"/>
<line x1="293.03" y1="494.4" x2="293.03" y2="499.4" stroke="#111" stroke-width="1.1"/>
<line x1="299" y1="494.4" x2="299" y2="504.4" stroke="#111" stroke-width="1.1"/>
<line x1="304.97" y1="494.4" x2="304.97" y2="499.4" stroke="#111" stroke-width="1.1"/>
<line x1="310.94" y1="494.4" x2="310.94" y2="499.4" stroke="#111" stroke-width="1.1"/>
<line x1="316.91" y1="494.4" x2="316.91" y2="499.4" stroke="#111" stroke-width="1.1"/>
<line x1="322.88" y1="494.4" x2="322.88" y2="499.4" stroke="#111" stroke-width="1.1"/>
<line x1="328.85" y1="494.4" x2="328.85" y2="499.4" stroke="#111" stroke-width="1.1"/>
<line x1="334.82" y1="494.4" x2="334.82" y2="499.4" stroke="#111" stroke-width="1.1"/>
<line x1="340.79" y1="494.4" x2="340.79" y2="499.4" stroke="#111" stroke-width="1.1"/>
<line x1="346.76" y1="494.4" x2="346.76" y2="499.4" stroke="#111" stroke-width="1.1"/>
<line x1="352.73" y1="494.4" x2="352.73" y2="499.4" stroke="#111" stroke-width="1.1"/>
<line x1="358.7" y1="494.4" x2="358.7" y2="504.4" stroke="#111" stroke-width="1.1"/>
<line x1="364.67" y1="494.4" x2="364.67" y2="499.4" stroke="#111" stroke-width="1.1"/>
<line x1="370.64" y1="494.4" x2="370.64" y2="499.4" stroke="#111" stroke-width="1.1"/>
<line x1="376.61" y1="494.4" x2="376.61" y2="499.4" stroke="#111" stroke-width="1.1"/>
<line x1="382.58" y1="494.4" x2="382.58" y2="499.4" stroke="#111" stroke-width="1.1"/>
<line x1="388.55" y1="494.4" x2="388.55" y2="499.4" stroke="#111" stroke-width="1.1"/>
<line x1="394.52" y1="494.4" x2="394.52" y2="499.4" stroke="#111" stroke-width="1.1"/>
<line x1="400.49" y1="494.4" x2="400.49" y2="499.4" stroke="#111" stroke-width="1.1"/>
<line x1="406.46" y1="494.4" x2="406.46" y2="499.4" stroke="#111" stroke-width="1.1"/>
<line x1="412.43" y1="494.4" x2="412.43" y2="499.4" stroke="#111" stroke-width="1.1"/>
<line x1="418.4" y1="494.4" x2="418.4" y2="504.4" stroke="#111" stroke-width="1.1"/>
<line x1="424.37" y1="494.4" x2="424.37" y2="499.4" stroke="#111" stroke-width="1.1"/>
<line x1="430.34" y1="494.4" x2="430.34" y2="499.4" stroke="#111" stroke-width="1.1"/>
<line x1="436.31" y1="494.4" x2="436.31" y2="499.4" stroke="#111" stroke-width="1.1"/>
<line x1="442.28" y1="494.4" x2="442.28" y2="499.4" stroke="#111" stroke-width="1.1"/>
<line x1="448.25" y1="494.4" x2="448.25" y2="499.4" stroke="#111" stroke-width="1.1"/>
<line x1="454.22" y1="494.4" x2="454.22" y2="499.4" stroke="#111" stroke-width="1.1"/>
<line x1="460.19" y1="494.4" x2="460.19" y2="499.4" stroke="#111" stroke-width="1.1"/>
<line x1="466.16" y1="494.4" x2="466.16" y2="499.4" stroke="#111" stroke-width="1.1"/>
<line x1="472.13" y1="494.4" x2="472.13" y2="499.4" stroke="#111" stroke-width="1.1"/>
<line x1="478.1" y1="494.4" x2="478.1" y2="504.4" stroke="#111" stroke-width="1.1"/>
<line x1="484.07" y1="494.4" x2="484.07" y2="499.4" stroke="#111" stroke-width="1.1"/>
<line x1="490.04" y1="494.4" x2="490.04" y2="499.4" stroke="#111" stroke-width="1.1"/>
<line x1="496.01" y1="494.4" x2="496.01" y2="499.4" stroke="#111" stroke-width="1.1"/>
<line x1="501.98" y1="494.4" x2="501.98" y2="499.4" stroke="#111" stroke-width="1.1"/>
<line x1="507.95" y1="494.4" x2="507.95" y2="499.4" stroke="#111" stroke-width="1.1"/>
<line x1="513.92" y1="494.4" x2="513.92" y2="499.4" stroke="#111" stroke-width="1.1"/>
<line x1="519.89" y1="494.4" x2="519.89" y2="499.4" stroke="#111" stroke-width="1.1"/>
<line x1="525.86" y1="494.4" x2="525.86" y2="499.4" stroke="#111" stroke-width="1.1"/>
<line x1="531.83" y1="494.4" x2="531.83" y2="499.4" stroke="#111" stroke-width="1.1"/>
<line x1="537.8" y1="494.4" x2="537.8" y2="504.4" stroke="#111" stroke-width="1.1"/>
<line x1="543.77" y1="494.4" x2="543.77" y2="499.4" stroke="#111" stroke-width="1.1"/>
<line x1="549.74" y1="494.4" x2="549.74" y2="499.4" stroke="#111" stroke-width="1.1"/>
<line x1="60.2" y1="428.9" x2="553.6" y2="428.9" stroke="#e81010" stroke-width="1.4" stroke-dasharray="14,5,3,5"/>
<polyline points="60.2,427.1 136.2,427.1 204.8,419.7 273.3,434.6 343.6,435.9 412.2,448.7 482,433.3 553.7,427.1" fill="none" stroke="#1818e0" stroke-width="1.1"/>
<rect x="57.2" y="424.1" width="6" height="6" fill="none" stroke="#1818e0" stroke-width="1.1"/>
<rect x="133.2" y="424.1" width="6" height="6" fill="none" stroke="#1818e0" stroke-width="1.1"/>
<rect x="201.8" y="416.7" width="6" height="6" fill="none" stroke="#1818e0" stroke-width="1.1"/>
<rect x="270.3" y="431.6" width="6" height="6" fill="none" stroke="#1818e0" stroke-width="1.1"/>
<rect x="340.6" y="432.9" width="6" height="6" fill="none" stroke="#1818e0" stroke-width="1.1"/>
<rect x="409.2" y="445.7" width="6" height="6" fill="none" stroke="#1818e0" stroke-width="1.1"/>
<rect x="479" y="430.3" width="6" height="6" fill="none" stroke="#1818e0" stroke-width="1.1"/>
<rect x="550.7" y="424.1" width="6" height="6" fill="none" stroke="#1818e0" stroke-width="1.1"/>
<polyline points="60.2,424.9 136.2,435.5 204.8,468 273.3,396.4 343.6,388.9 412.2,333.1 482,392.9 553.7,421.4" fill="none" stroke="#e81010" stroke-width="1.1"/>
<circle cx="60.2" cy="424.9" r="3.6" fill="none" stroke="#e81010" stroke-width="1.1"/>
<circle cx="136.2" cy="435.5" r="3.6" fill="none" stroke="#e81010" stroke-width="1.1"/>
<circle cx="204.8" cy="468" r="3.6" fill="none" stroke="#e81010" stroke-width="1.1"/>
<circle cx="273.3" cy="396.4" r="3.6" fill="none" stroke="#e81010" stroke-width="1.1"/>
<circle cx="343.6" cy="388.9" r="3.6" fill="none" stroke="#e81010" stroke-width="1.1"/>
<circle cx="412.2" cy="333.1" r="3.6" fill="none" stroke="#e81010" stroke-width="1.1"/>
<circle cx="482" cy="392.9" r="3.6" fill="none" stroke="#e81010" stroke-width="1.1"/>
<circle cx="553.7" cy="421.4" r="3.6" fill="none" stroke="#e81010" stroke-width="1.1"/>
<line x1="336" y1="262.4" x2="436.3" y2="262.4" stroke="#1818e0" stroke-width="1.2"/>
<rect x="382" y="259.4" width="6" height="6" fill="none" stroke="#1818e0" stroke-width="1.1"/>
<line x1="449.5" y1="262.4" x2="554.5" y2="262.4" stroke="#e81010" stroke-width="1.2"/>
<circle cx="501" cy="262.4" r="3.6" fill="none" stroke="#e81010" stroke-width="1.1"/>
</svg>
<span class="t" style="left:60px;top:275.5px;font-size:13.7px;color:#111;transform-origin:0 0;transform:scaleX(1.0051);">Axe Alpha</span>
<span class="t" style="left:335px;top:275.5px;font-size:13.7px;color:#111;transform-origin:0 0;transform:scaleX(1.0206);">Corr Alpha (sec)</span>
<span class="t" style="left:448px;top:275.5px;font-size:13.7px;color:#111;transform-origin:0 0;transform:scaleX(1.0068);">Err Alpha (pixels)</span>
<span class="t" style="left:34px;top:316.5px;font-size:13.7px;color:#111;">1</span>
<span class="t" style="left:33px;top:421.5px;font-size:13.7px;color:#111;">0</span>
<span class="t" style="left:56.3914px;top:512.5px;font-size:13.7px;color:#111;">0</span>
<span class="t" style="left:110.38px;top:512.5px;font-size:13.7px;color:#111;">0.1</span>
<span class="t" style="left:170.08px;top:512.5px;font-size:13.7px;color:#111;">0.2</span>
<span class="t" style="left:229.78px;top:512.5px;font-size:13.7px;color:#111;">0.3</span>
<span class="t" style="left:289.48px;top:512.5px;font-size:13.7px;color:#111;">0.4</span>
<span class="t" style="left:349.18px;top:512.5px;font-size:13.7px;color:#111;">0.5</span>
<span class="t" style="left:408.88px;top:512.5px;font-size:13.7px;color:#111;">0.6</span>
<span class="t" style="left:468.58px;top:512.5px;font-size:13.7px;color:#111;">0.7</span>
<span class="t" style="left:528.28px;top:512.5px;font-size:13.7px;color:#111;">0.8</span>
<span class="t" style="left:268.328px;top:533.5px;font-size:13.7px;color:#111;transform-origin:50% 0;transform:scaleX(0.9954);">Temps (Min)</span>
<span class="t" style="left:570.932px;top:326px;font-size:13.7px;color:#111;">P</span>
<span class="t" style="left:573.979px;top:339px;font-size:13.7px;color:#111;">i</span>
<span class="t" style="left:572.074px;top:351px;font-size:13.7px;color:#111;">x</span>
<span class="t" style="left:571.691px;top:364px;font-size:13.7px;color:#111;">e</span>
<span class="t" style="left:573.979px;top:377px;font-size:13.7px;color:#111;">l</span>
<span class="t" style="left:571.691px;top:401px;font-size:13.7px;color:#111;">e</span>
<span class="t" style="left:573.598px;top:413px;font-size:13.7px;color:#111;">t</span>
<span class="t" style="left:572.074px;top:437px;font-size:13.7px;color:#111;">s</span>
<span class="t" style="left:571.691px;top:450px;font-size:13.7px;color:#111;">e</span>
<span class="t" style="left:572.074px;top:463px;font-size:13.7px;color:#111;">c</span>
<div class="a" style="left:-10px;top:564.5px;width:96.5px;height:25.5px;background:linear-gradient(#f0f1f8,#dfe1ed 55%,#d3d6e6);border:1px solid #aeb2c8;border-radius:5px;box-shadow:inset 0 1px 0 #fff;"></div>
<span class="t" style="left:12px;top:568.5px;font-size:15px;color:#111;transform-origin:0 0;transform:scaleX(0.8993);">Réglages</span>
<div class="a" style="left:-10px;top:594px;width:630px;height:20px;background:linear-gradient(#f2f3f8,#e2e4ee);border-top:1px solid #fafafd;"></div>
<span class="t" style="left:0px;top:596px;font-size:15px;color:#111;transform-origin:0 0;transform:scaleX(0.8339);">495x252</span>
<div class="a" style="left:181px;top:597px;width:1px;height:15px;background:#c3c6d6;"></div>
<svg style="left:602px;top:600px" width="12" height="12"><path d="M11 1 V11 H1 Z" fill="#5a6090"/></svg>
<!-- p_delta -->
<div class="a" style="left:12.5px;top:663.3px;width:640px;height:503.5px;background:linear-gradient(#5b6392,#3d4572 5px,#2d345e 34px,#2b3159);border-radius:7px 7px 0 0;box-shadow:0 0 0 1px #20254a;"></div>
<svg style="left:22px;top:670px" width="17" height="17" viewBox="0 0 17 17"><polygon points="8.50,0.10 10.68,3.23 14.44,2.56 13.77,6.32 16.90,8.50 13.77,10.68 14.44,14.44 10.68,13.77 8.50,16.90 6.32,13.77 2.56,14.44 3.23,10.68 0.10,8.50 3.23,6.32 2.56,2.56 6.32,3.23" fill="#ececf0" stroke="#14183a" stroke-width="0.9" stroke-linejoin="round"/><circle cx="8.5" cy="8.500" r="3.5" fill="#4a4e66" stroke="#20243f" stroke-width="0.8"/><circle cx="8.5" cy="8.5" r="1.7" fill="#b8b8c4"/></svg>
<span class="t" style="left:45px;top:669.5px;font-size:15px;color:#fff;transform-origin:0 0;transform:scaleX(0.9533);">Axe Delta</span>
<svg style="left:626px;top:671px" width="14" height="14" viewBox="0 0 14 14"><path d="M2 2 L12 12 M12 2 L2 12" stroke="#d8dcf0" stroke-width="2.6" fill="none"/></svg>
<div class="a" style="left:19px;top:697px;width:626px;height:461px;background:#e9ebf3;"></div>
<div class="a" style="left:21px;top:697.5px;width:621.5px;height:403px;background:#fff;"></div>
<div class="a" style="left:23.5px;top:700.5px;width:615.5px;height:398.5px;background:#fff;border:1.3px solid #111;"></div>
<svg style="left:25px;top:702px" width="612" height="395" viewBox="25 702 612 395" shape-rendering="auto">
<line x1="85.6" y1="761" x2="85.6" y2="1038.2" stroke="#a0a0a0" stroke-width="1"/>
<line x1="145.2" y1="761" x2="145.2" y2="1038.2" stroke="#a0a0a0" stroke-width="1"/>
<line x1="204.8" y1="761" x2="204.8" y2="1038.2" stroke="#a0a0a0" stroke-width="1"/>
<line x1="264.4" y1="761" x2="264.4" y2="1038.2" stroke="#a0a0a0" stroke-width="1"/>
<line x1="324" y1="761" x2="324" y2="1038.2" stroke="#a0a0a0" stroke-width="1"/>
<line x1="383.6" y1="761" x2="383.6" y2="1038.2" stroke="#a0a0a0" stroke-width="1"/>
<line x1="443.2" y1="761" x2="443.2" y2="1038.2" stroke="#a0a0a0" stroke-width="1"/>
<line x1="502.8" y1="761" x2="502.8" y2="1038.2" stroke="#a0a0a0" stroke-width="1"/>
<line x1="562.4" y1="761" x2="562.4" y2="1038.2" stroke="#a0a0a0" stroke-width="1"/>
<line x1="85.6" y1="770.4" x2="578.9" y2="770.4" stroke="#a0a0a0" stroke-width="1"/>
<line x1="85.6" y1="908.8" x2="578.9" y2="908.8" stroke="#a0a0a0" stroke-width="1"/>
<rect x="85.6" y="761" width="493.3" height="277.2" fill="none" stroke="#111" stroke-width="1.3"/>
<line x1="75.6" y1="770.4" x2="85.6" y2="770.4" stroke="#111" stroke-width="1.2"/>
<line x1="80.6" y1="784.24" x2="85.6" y2="784.24" stroke="#111" stroke-width="1.2"/>
<line x1="80.6" y1="798.08" x2="85.6" y2="798.08" stroke="#111" stroke-width="1.2"/>
<line x1="80.6" y1="811.92" x2="85.6" y2="811.92" stroke="#111" stroke-width="1.2"/>
<line x1="80.6" y1="825.76" x2="85.6" y2="825.76" stroke="#111" stroke-width="1.2"/>
<line x1="80.6" y1="839.6" x2="85.6" y2="839.6" stroke="#111" stroke-width="1.2"/>
<line x1="80.6" y1="853.44" x2="85.6" y2="853.44" stroke="#111" stroke-width="1.2"/>
<line x1="80.6" y1="867.28" x2="85.6" y2="867.28" stroke="#111" stroke-width="1.2"/>
<line x1="80.6" y1="881.12" x2="85.6" y2="881.12" stroke="#111" stroke-width="1.2"/>
<line x1="80.6" y1="894.96" x2="85.6" y2="894.96" stroke="#111" stroke-width="1.2"/>
<line x1="75.6" y1="908.8" x2="85.6" y2="908.8" stroke="#111" stroke-width="1.2"/>
<line x1="80.6" y1="922.64" x2="85.6" y2="922.64" stroke="#111" stroke-width="1.2"/>
<line x1="80.6" y1="936.48" x2="85.6" y2="936.48" stroke="#111" stroke-width="1.2"/>
<line x1="80.6" y1="950.32" x2="85.6" y2="950.32" stroke="#111" stroke-width="1.2"/>
<line x1="80.6" y1="964.16" x2="85.6" y2="964.16" stroke="#111" stroke-width="1.2"/>
<line x1="80.6" y1="978" x2="85.6" y2="978" stroke="#111" stroke-width="1.2"/>
<line x1="80.6" y1="991.84" x2="85.6" y2="991.84" stroke="#111" stroke-width="1.2"/>
<line x1="80.6" y1="1005.68" x2="85.6" y2="1005.68" stroke="#111" stroke-width="1.2"/>
<line x1="80.6" y1="1019.52" x2="85.6" y2="1019.52" stroke="#111" stroke-width="1.2"/>
<line x1="80.6" y1="1033.36" x2="85.6" y2="1033.36" stroke="#111" stroke-width="1.2"/>
<line x1="85.6" y1="1038.2" x2="85.6" y2="1048.2" stroke="#111" stroke-width="1.1"/>
<line x1="91.56" y1="1038.2" x2="91.56" y2="1043.2" stroke="#111" stroke-width="1.1"/>
<line x1="97.52" y1="1038.2" x2="97.52" y2="1043.2" stroke="#111" stroke-width="1.1"/>
<line x1="103.48" y1="1038.2" x2="103.48" y2="1043.2" stroke="#111" stroke-width="1.1"/>
<line x1="109.44" y1="1038.2" x2="109.44" y2="1043.2" stroke="#111" stroke-width="1.1"/>
<line x1="115.4" y1="1038.2" x2="115.4" y2="1043.2" stroke="#111" stroke-width="1.1"/>
<line x1="121.36" y1="1038.2" x2="121.36" y2="1043.2" stroke="#111" stroke-width="1.1"/>
<line x1="127.32" y1="1038.2" x2="127.32" y2="1043.2" stroke="#111" stroke-width="1.1"/>
<line x1="133.28" y1="1038.2" x2="133.28" y2="1043.2" stroke="#111" stroke-width="1.1"/>
<line x1="139.24" y1="1038.2" x2="139.24" y2="1043.2" stroke="#111" stroke-width="1.1"/>
<line x1="145.2" y1="1038.2" x2="145.2" y2="1048.2" stroke="#111" stroke-width="1.1"/>
<line x1="151.16" y1="1038.2" x2="151.16" y2="1043.2" stroke="#111" stroke-width="1.1"/>
<line x1="157.12" y1="1038.2" x2="157.12" y2="1043.2" stroke="#111" stroke-width="1.1"/>
<line x1="163.08" y1="1038.2" x2="163.08" y2="1043.2" stroke="#111" stroke-width="1.1"/>
<line x1="169.04" y1="1038.2" x2="169.04" y2="1043.2" stroke="#111" stroke-width="1.1"/>
<line x1="175" y1="1038.2" x2="175" y2="1043.2" stroke="#111" stroke-width="1.1"/>
<line x1="180.96" y1="1038.2" x2="180.96" y2="1043.2" stroke="#111" stroke-width="1.1"/>
<line x1="186.92" y1="1038.2" x2="186.92" y2="1043.2" stroke="#111" stroke-width="1.1"/>
<line x1="192.88" y1="1038.2" x2="192.88" y2="1043.2" stroke="#111" stroke-width="1.1"/>
<line x1="198.84" y1="1038.2" x2="198.84" y2="1043.2" stroke="#111" stroke-width="1.1"/>
<line x1="204.8" y1="1038.2" x2="204.8" y2="1048.2" stroke="#111" stroke-width="1.1"/>
<line x1="210.76" y1="1038.2" x2="210.76" y2="1043.2" stroke="#111" stroke-width="1.1"/>
<line x1="216.72" y1="1038.2" x2="216.72" y2="1043.2" stroke="#111" stroke-width="1.1"/>
<line x1="222.68" y1="1038.2" x2="222.68" y2="1043.2" stroke="#111" stroke-width="1.1"/>
<line x1="228.64" y1="1038.2" x2="228.64" y2="1043.2" stroke="#111" stroke-width="1.1"/>
<line x1="234.6" y1="1038.2" x2="234.6" y2="1043.2" stroke="#111" stroke-width="1.1"/>
<line x1="240.56" y1="1038.2" x2="240.56" y2="1043.2" stroke="#111" stroke-width="1.1"/>
<line x1="246.52" y1="1038.2" x2="246.52" y2="1043.2" stroke="#111" stroke-width="1.1"/>
<line x1="252.48" y1="1038.2" x2="252.48" y2="1043.2" stroke="#111" stroke-width="1.1"/>
<line x1="258.44" y1="1038.2" x2="258.44" y2="1043.2" stroke="#111" stroke-width="1.1"/>
<line x1="264.4" y1="1038.2" x2="264.4" y2="1048.2" stroke="#111" stroke-width="1.1"/>
<line x1="270.36" y1="1038.2" x2="270.36" y2="1043.2" stroke="#111" stroke-width="1.1"/>
<line x1="276.32" y1="1038.2" x2="276.32" y2="1043.2" stroke="#111" stroke-width="1.1"/>
<line x1="282.28" y1="1038.2" x2="282.28" y2="1043.2" stroke="#111" stroke-width="1.1"/>
<line x1="288.24" y1="1038.2" x2="288.24" y2="1043.2" stroke="#111" stroke-width="1.1"/>
<line x1="294.2" y1="1038.2" x2="294.2" y2="1043.2" stroke="#111" stroke-width="1.1"/>
<line x1="300.16" y1="1038.2" x2="300.16" y2="1043.2" stroke="#111" stroke-width="1.1"/>
<line x1="306.12" y1="1038.2" x2="306.12" y2="1043.2" stroke="#111" stroke-width="1.1"/>
<line x1="312.08" y1="1038.2" x2="312.08" y2="1043.2" stroke="#111" stroke-width="1.1"/>
<line x1="318.04" y1="1038.2" x2="318.04" y2="1043.2" stroke="#111" stroke-width="1.1"/>
<line x1="324" y1="1038.2" x2="324" y2="1048.2" stroke="#111" stroke-width="1.1"/>
<line x1="329.96" y1="1038.2" x2="329.96" y2="1043.2" stroke="#111" stroke-width="1.1"/>
<line x1="335.92" y1="1038.2" x2="335.92" y2="1043.2" stroke="#111" stroke-width="1.1"/>
<line x1="341.88" y1="1038.2" x2="341.88" y2="1043.2" stroke="#111" stroke-width="1.1"/>
<line x1="347.84" y1="1038.2" x2="347.84" y2="1043.2" stroke="#111" stroke-width="1.1"/>
<line x1="353.8" y1="1038.2" x2="353.8" y2="1043.2" stroke="#111" stroke-width="1.1"/>
<line x1="359.76" y1="1038.2" x2="359.76" y2="1043.2" stroke="#111" stroke-width="1.1"/>
<line x1="365.72" y1="1038.2" x2="365.72" y2="1043.2" stroke="#111" stroke-width="1.1"/>
<line x1="371.68" y1="1038.2" x2="371.68" y2="1043.2" stroke="#111" stroke-width="1.1"/>
<line x1="377.64" y1="1038.2" x2="377.64" y2="1043.2" stroke="#111" stroke-width="1.1"/>
<line x1="383.6" y1="1038.2" x2="383.6" y2="1048.2" stroke="#111" stroke-width="1.1"/>
<line x1="389.56" y1="1038.2" x2="389.56" y2="1043.2" stroke="#111" stroke-width="1.1"/>
<line x1="395.52" y1="1038.2" x2="395.52" y2="1043.2" stroke="#111" stroke-width="1.1"/>
<line x1="401.48" y1="1038.2" x2="401.48" y2="1043.2" stroke="#111" stroke-width="1.1"/>
<line x1="407.44" y1="1038.2" x2="407.44" y2="1043.2" stroke="#111" stroke-width="1.1"/>
<line x1="413.4" y1="1038.2" x2="413.4" y2="1043.2" stroke="#111" stroke-width="1.1"/>
<line x1="419.36" y1="1038.2" x2="419.36" y2="1043.2" stroke="#111" stroke-width="1.1"/>
<line x1="425.32" y1="1038.2" x2="425.32" y2="1043.2" stroke="#111" stroke-width="1.1"/>
<line x1="431.28" y1="1038.2" x2="431.28" y2="1043.2" stroke="#111" stroke-width="1.1"/>
<line x1="437.24" y1="1038.2" x2="437.24" y2="1043.2" stroke="#111" stroke-width="1.1"/>
<line x1="443.2" y1="1038.2" x2="443.2" y2="1048.2" stroke="#111" stroke-width="1.1"/>
<line x1="449.16" y1="1038.2" x2="449.16" y2="1043.2" stroke="#111" stroke-width="1.1"/>
<line x1="455.12" y1="1038.2" x2="455.12" y2="1043.2" stroke="#111" stroke-width="1.1"/>
<line x1="461.08" y1="1038.2" x2="461.08" y2="1043.2" stroke="#111" stroke-width="1.1"/>
<line x1="467.04" y1="1038.2" x2="467.04" y2="1043.2" stroke="#111" stroke-width="1.1"/>
<line x1="473" y1="1038.2" x2="473" y2="1043.2" stroke="#111" stroke-width="1.1"/>
<line x1="478.96" y1="1038.2" x2="478.96" y2="1043.2" stroke="#111" stroke-width="1.1"/>
<line x1="484.92" y1="1038.2" x2="484.92" y2="1043.2" stroke="#111" stroke-width="1.1"/>
<line x1="490.88" y1="1038.2" x2="490.88" y2="1043.2" stroke="#111" stroke-width="1.1"/>
<line x1="496.84" y1="1038.2" x2="496.84" y2="1043.2" stroke="#111" stroke-width="1.1"/>
<line x1="502.8" y1="1038.2" x2="502.8" y2="1048.2" stroke="#111" stroke-width="1.1"/>
<line x1="508.76" y1="1038.2" x2="508.76" y2="1043.2" stroke="#111" stroke-width="1.1"/>
<line x1="514.72" y1="1038.2" x2="514.72" y2="1043.2" stroke="#111" stroke-width="1.1"/>
<line x1="520.68" y1="1038.2" x2="520.68" y2="1043.2" stroke="#111" stroke-width="1.1"/>
<line x1="526.64" y1="1038.2" x2="526.64" y2="1043.2" stroke="#111" stroke-width="1.1"/>
<line x1="532.6" y1="1038.2" x2="532.6" y2="1043.2" stroke="#111" stroke-width="1.1"/>
<line x1="538.56" y1="1038.2" x2="538.56" y2="1043.2" stroke="#111" stroke-width="1.1"/>
<line x1="544.52" y1="1038.2" x2="544.52" y2="1043.2" stroke="#111" stroke-width="1.1"/>
<line x1="550.48" y1="1038.2" x2="550.48" y2="1043.2" stroke="#111" stroke-width="1.1"/>
<line x1="556.44" y1="1038.2" x2="556.44" y2="1043.2" stroke="#111" stroke-width="1.1"/>
<line x1="562.4" y1="1038.2" x2="562.4" y2="1048.2" stroke="#111" stroke-width="1.1"/>
<line x1="568.36" y1="1038.2" x2="568.36" y2="1043.2" stroke="#111" stroke-width="1.1"/>
<line x1="574.32" y1="1038.2" x2="574.32" y2="1043.2" stroke="#111" stroke-width="1.1"/>
<line x1="85.6" y1="770.4" x2="578.9" y2="770.4" stroke="#e81010" stroke-width="1.4" stroke-dasharray="14,5,3,5"/>
<polyline points="84.6,770.4 160.8,770 229.5,770 298,770 368.3,778.9 437,797.3 506.7,813.7 577.9,832.1" fill="none" stroke="#1818e0" stroke-width="1.1"/>
<rect x="81.6" y="767.4" width="6" height="6" fill="none" stroke="#1818e0" stroke-width="1.1"/>
<rect x="157.8" y="767" width="6" height="6" fill="none" stroke="#1818e0" stroke-width="1.1"/>
<rect x="226.5" y="767" width="6" height="6" fill="none" stroke="#1818e0" stroke-width="1.1"/>
<rect x="295" y="767" width="6" height="6" fill="none" stroke="#1818e0" stroke-width="1.1"/>
<rect x="365.3" y="775.9" width="6" height="6" fill="none" stroke="#1818e0" stroke-width="1.1"/>
<rect x="434" y="794.3" width="6" height="6" fill="none" stroke="#1818e0" stroke-width="1.1"/>
<rect x="503.7" y="810.7" width="6" height="6" fill="none" stroke="#1818e0" stroke-width="1.1"/>
<rect x="574.9" y="829.1" width="6" height="6" fill="none" stroke="#1818e0" stroke-width="1.1"/>
<polyline points="84.6,762 160.8,787.8 230,784.3 298.6,792.8 368.8,811.7 437.5,889.4 507.2,958 578.4,1039.2" fill="none" stroke="#e81010" stroke-width="1.1"/>
<circle cx="84.6" cy="762" r="3.6" fill="none" stroke="#e81010" stroke-width="1.1"/>
<circle cx="160.8" cy="787.8" r="3.6" fill="none" stroke="#e81010" stroke-width="1.1"/>
<circle cx="230" cy="784.3" r="3.6" fill="none" stroke="#e81010" stroke-width="1.1"/>
<circle cx="298.6" cy="792.8" r="3.6" fill="none" stroke="#e81010" stroke-width="1.1"/>
<circle cx="368.8" cy="811.7" r="3.6" fill="none" stroke="#e81010" stroke-width="1.1"/>
<circle cx="437.5" cy="889.4" r="3.6" fill="none" stroke="#e81010" stroke-width="1.1"/>
<circle cx="507.2" cy="958" r="3.6" fill="none" stroke="#e81010" stroke-width="1.1"/>
<circle cx="578.4" cy="1039.2" r="3.6" fill="none" stroke="#e81010" stroke-width="1.1"/>
<line x1="370.8" y1="718.6" x2="466.4" y2="718.6" stroke="#1818e0" stroke-width="1.2"/>
<rect x="414" y="715.6" width="6" height="6" fill="none" stroke="#1818e0" stroke-width="1.1"/>
<line x1="479.3" y1="718.6" x2="579.9" y2="718.6" stroke="#e81010" stroke-width="1.2"/>
<circle cx="528.6" cy="718.6" r="3.6" fill="none" stroke="#e81010" stroke-width="1.1"/>
</svg>
<span class="t" style="left:85px;top:731.5px;font-size:13.7px;color:#111;transform-origin:0 0;transform:scaleX(0.9766);">Axe Delta</span>
<span class="t" style="left:370px;top:731.5px;font-size:13.7px;color:#111;transform-origin:0 0;transform:scaleX(0.9931);">Corr Delta (sec)</span>
<span class="t" style="left:478px;top:731.5px;font-size:13.7px;color:#111;transform-origin:0 0;transform:scaleX(0.9902);">Err Delta (pixels)</span>
<span class="t" style="left:58px;top:763px;font-size:13.7px;color:#111;">0</span>
<span class="t" style="left:53px;top:901.5px;font-size:13.7px;color:#111;">-1</span>
<span class="t" style="left:81.7914px;top:1056.5px;font-size:13.7px;color:#111;">0</span>
<span class="t" style="left:135.68px;top:1056.5px;font-size:13.7px;color:#111;">0.1</span>
<span class="t" style="left:195.28px;top:1056.5px;font-size:13.7px;color:#111;">0.2</span>
<span class="t" style="left:254.88px;top:1056.5px;font-size:13.7px;color:#111;">0.3</span>
<span class="t" style="left:314.48px;top:1056.5px;font-size:13.7px;color:#111;">0.4</span>
<span class="t" style="left:374.08px;top:1056.5px;font-size:13.7px;color:#111;">0.5</span>
<span class="t" style="left:433.68px;top:1056.5px;font-size:13.7px;color:#111;">0.6</span>
<span class="t" style="left:493.28px;top:1056.5px;font-size:13.7px;color:#111;">0.7</span>
<span class="t" style="left:552.88px;top:1056.5px;font-size:13.7px;color:#111;">0.8</span>
<span class="t" style="left:293.328px;top:1077.5px;font-size:13.7px;color:#111;transform-origin:50% 0;transform:scaleX(0.9954);">Temps (Min)</span>
<span class="t" style="left:595.932px;top:824.6px;font-size:13.7px;color:#111;">P</span>
<span class="t" style="left:598.979px;top:837px;font-size:13.7px;color:#111;">i</span>
<span class="t" style="left:597.074px;top:850px;font-size:13.7px;color:#111;">x</span>
<span class="t" style="left:596.691px;top:863px;font-size:13.7px;color:#111;">e</span>
<span class="t" style="left:598.979px;top:876px;font-size:13.7px;color:#111;">l</span>
<span class="t" style="left:596.691px;top:901.5px;font-size:13.7px;color:#111;">e</span>
<span class="t" style="left:598.598px;top:913px;font-size:13.7px;color:#111;">t</span>
<span class="t" style="left:597.074px;top:938px;font-size:13.7px;color:#111;">s</span>
<span class="t" style="left:596.691px;top:950.6px;font-size:13.7px;color:#111;">e</span>
<span class="t" style="left:597.074px;top:963px;font-size:13.7px;color:#111;">c</span>
<div class="a" style="left:21.5px;top:1108px;width:89.5px;height:25.5px;background:linear-gradient(#f0f1f8,#dfe1ed 55%,#d3d6e6);border:1px solid #aeb2c8;border-radius:5px;box-shadow:inset 0 1px 0 #fff;"></div>
<span class="t" style="left:38px;top:1112px;font-size:15px;color:#111;transform-origin:0 0;transform:scaleX(0.8993);">Réglages</span>
<div class="a" style="left:19px;top:1137.5px;width:626px;height:20.5px;background:linear-gradient(#f2f3f8,#e2e4ee);border-top:1px solid #fafafd;"></div>
<span class="t" style="left:20px;top:1139.5px;font-size:15px;color:#111;transform-origin:0 0;transform:scaleX(0.9207);">495x322</span>
<div class="a" style="left:205.5px;top:1140.5px;width:1px;height:15px;background:#c3c6d6;"></div>
<svg style="left:627px;top:1143px" width="12" height="12"><path d="M11 1 V11 H1 Z" fill="#5a6090"/></svg>
<!-- p_track -->
<div class="a" style="left:1000.5px;top:109px;width:647px;height:453.5px;background:linear-gradient(#414977,#2f3661 8px,#2b3159 26px);border-radius:4px 4px 0 0;box-shadow:0 0 0 1px #1f2448;"></div>
<span class="t" style="left:1011px;top:113px;font-size:15px;color:#6a7299;transform-origin:0 0;transform:scaleX(0.9769);">Tracking Inspector</span>
<svg style="left:1623.5px;top:114.5px" width="14" height="14" viewBox="0 0 14 14"><path d="M2 2 L12 12 M12 2 L2 12" stroke="#c9cde6" stroke-width="2.6" fill="none"/></svg>
<div class="a" style="left:1006px;top:134px;width:635px;height:423px;background:#e6e8f0;"></div>
<div class="a" style="left:1010px;top:140.5px;width:55px;height:20px;border:1px solid #c4c7d8;border-right-color:#fafbfe;border-bottom-color:#fafbfe;box-shadow:inset 1px 1px 0 #d9dbe8;"></div>
<span class="t" style="left:1015px;top:141.5px;font-size:15px;color:#3b4160;transform-origin:0 0;transform:scaleX(0.8620);">Etat</span>
<div class="a" style="left:1070.5px;top:140.5px;width:535px;height:20px;border:1px solid #c4c7d8;border-right-color:#fafbfe;border-bottom-color:#fafbfe;box-shadow:inset 1px 1px 0 #d9dbe8;"></div>
<span class="t" style="left:1165px;top:142.5px;font-size:15px;color:#3b4160;font-weight:bold;transform-origin:0 0;transform:scaleX(1.0215);">DX=0.07  DY=-1.94 RA=0.00ms  DEC=-456.53ms</span>
<span class="t" style="left:1012.3px;top:166px;font-size:15px;color:#4a5072;transform-origin:0 0;transform:scaleX(0.8852);">Positions Axe RA :</span>
<span class="t" style="left:1146.5px;top:166px;font-size:15px;color:#3b4160;font-weight:bold;transform-origin:0 0;transform:scaleX(1.0254);">0.07 Pix</span>
<span class="t" style="left:1321.5px;top:166px;font-size:15px;color:#3b4160;font-weight:bold;transform-origin:0 0;transform:scaleX(0.8993);">0ms</span>
<span class="t" style="left:1429.6px;top:166px;font-size:15px;color:#4a5072;transform-origin:0 0;transform:scaleX(0.8849);">Répartition</span>
<div class="a" style="left:1532.3px;top:167px;width:17.5px;height:19px;background:linear-gradient(#f1f2f8,#dfe1ed 50%,#cdd1e2);border:1.5px solid #d0d3e2;border-radius:4px;box-shadow:inset 0 1px 0 #fff;"></div>
<span class="t" style="left:1537px;top:170.5px;font-size:12px;color:#111;font-weight:bold;">+</span>
<div class="a" style="left:1551.5px;top:167px;width:17.5px;height:19px;background:linear-gradient(#f1f2f8,#dfe1ed 50%,#cdd1e2);border:1.5px solid #d0d3e2;border-radius:4px;box-shadow:inset 0 1px 0 #fff;"></div>
<span class="t" style="left:1558.3px;top:169.5px;font-size:12px;color:#111;font-weight:bold;">-</span>
<div class="a" style="left:1011px;top:190.5px;width:385px;height:105px;background:#f2f3f8;border:1.5px solid #a9adc2;border-right-color:#fff;border-bottom-color:#fff;"></div>
<div class="a" style="left:1012.3px;top:192px;width:382.3px;height:101.8px;background:#000;"></div>
<div class="a" style="left:1012.3px;top:221.8px;width:382.3px;height:2px;background:#fff;"></div>
<svg style="left:1012px;top:192px" width="30" height="102" viewBox="0 0 30 102"><polyline points="2,1 4,13 5.5,40 7,56 10,70 11.5,93 12,101" fill="none" stroke="#1f8f1f" stroke-width="1.3"/><polyline points="17,37 15.5,51 14.5,70 13,88 12,101" fill="none" stroke="#1f8f1f" stroke-width="1.2"/><rect x="1" y="30" width="3.5" height="2.4" fill="#b8f0b8"/></svg>
<div class="a" style="left:1399.6px;top:190.8px;width:25px;height:37.7px;background:#b9d9ba;border:1.5px solid #2a3a36;"></div>
<div class="a" style="left:1399.6px;top:255.6px;width:25px;height:38.2px;background:#b9d9ba;border:1.5px solid #2a3a36;"></div>
<div class="a" style="left:1402.4px;top:233.2px;width:16px;height:16px;background:#fff;border:1.5px solid #b9bdd0;border-radius:50%;"></div>
<div class="a" style="left:1430.4px;top:190px;width:102px;height:101.2px;background:#000;"></div>
<span class="t" style="left:1433.5px;top:193.5px;font-size:11px;color:#d80000;transform-origin:0 0;transform:scaleX(0.9200);">Bar.</span>
<div class="a" style="left:1465px;top:224.6px;width:32.7px;height:32.7px;border:1.3px solid #fff;"></div>
<div class="a" style="left:1481px;top:240px;width:1.3px;height:51px;background:#e8e000;"></div>
<div class="a" style="left:1542.7px;top:193.8px;width:16px;height:16px;background:#fff;border:1px solid #b4b8cc;border-radius:3px;"></div>
<span class="t" style="left:1565px;top:193.5px;font-size:15px;color:#111;transform-origin:0 0;transform:scaleX(0.8395);">Lier</span>
<div class="a" style="left:1540.8px;top:216px;width:72.4px;height:18.8px;background:linear-gradient(#f8b69a,#f19a78 60%,#ee8f6a);border:1.5px solid #d4693f;border-radius:7px;box-shadow:inset 0 1px 0 #fff;"></div>
<span class="t" style="left:1544px;top:216.5px;font-size:15px;color:#111;transform-origin:0 0;transform:scaleX(0.8510);">Graphiques</span>
<div class="a" style="left:1540.8px;top:242px;width:72.4px;height:19.2px;background:linear-gradient(#f1f2f8,#dfe1ed 50%,#cdd1e2);border:1.5px solid #8d93b0;border-radius:6px;box-shadow:inset 0 1px 0 #fff;"></div>
<span class="t" style="left:1559.5px;top:243px;font-size:15px;color:#111;transform-origin:0 0;transform:scaleX(0.8931);">Reset</span>
<div class="a" style="left:1540.8px;top:270.5px;width:72.4px;height:19.5px;background:linear-gradient(#f1f2f8,#dfe1ed 50%,#cdd1e2);border:1.5px solid #8d93b0;border-radius:6px;box-shadow:inset 0 1px 0 #fff;"></div>
<span class="t" style="left:1555.5px;top:271.5px;font-size:15px;color:#111;transform-origin:0 0;transform:scaleX(0.9047);">Sauver</span>
<span class="t" style="left:1010px;top:297px;font-size:15px;color:#4a5072;transform-origin:0 0;transform:scaleX(0.8679);">Positions Axe DEC :</span>
<span class="t" style="left:1142.7px;top:297px;font-size:15px;color:#3b4160;font-weight:bold;transform-origin:0 0;transform:scaleX(1.0184);">-1.94 Pix</span>
<span class="t" style="left:1320.8px;top:297px;font-size:15px;color:#3b4160;font-weight:bold;transform-origin:0 0;transform:scaleX(0.9438);">-457ms</span>
<div class="a" style="left:1011px;top:319.3px;width:385px;height:104px;background:#f2f3f8;border:1.5px solid #a9adc2;border-right-color:#fff;border-bottom-color:#fff;"></div>
<div class="a" style="left:1012.3px;top:321px;width:382.3px;height:99.5px;background:#000;"></div>
<div class="a" style="left:1012.3px;top:418.3px;width:382.3px;height:2.2px;background:#fff;"></div>
<svg style="left:1012px;top:320px" width="384" height="102" viewBox="0 0 384 102"><line x1="0" y1="49.3" x2="383" y2="49.3" stroke="#e8e000" stroke-width="1.3" stroke-dasharray="4,3.5"/><polyline points="1.5,98 5,92 9,84 11.500,65 13,40 15,20 17,1" fill="none" stroke="#1f8f1f" stroke-width="1.2"/></svg>
<div class="a" style="left:1399.6px;top:318px;width:25px;height:37.4px;background:#b9d9ba;border:1.5px solid #2a3a36;"></div>
<div class="a" style="left:1399.6px;top:383px;width:25px;height:37.8px;background:#b9d9ba;border:1.5px solid #2a3a36;"></div>
<div class="a" style="left:1402.4px;top:360.8px;width:16px;height:16px;background:radial-gradient(#5a2a1a 0,#5a2a1a 24%,#f09070 30%,#e8643c 62%,#f2b39e 66%);border:1px solid #e0907a;border-radius:50%;"></div>
<span class="t" style="left:1012.3px;top:427px;font-size:15px;color:#4a5072;transform-origin:0 0;transform:scaleX(0.8469);">Flux</span>
<div class="a" style="left:1011px;top:445px;width:385px;height:96.5px;background:#f2f3f8;border:1.5px solid #a9adc2;border-right-color:#fff;border-bottom-color:#fff;"></div>
<div class="a" style="left:1012.3px;top:446.5px;width:382.3px;height:93.5px;background:#000;"></div>
<svg style="left:1012px;top:446px" width="40" height="95" viewBox="0 0 40 95"><polyline points="1.5,94 2,50 4,9 7,3 10,1.5 13,5 16,6" fill="none" stroke="#b030b0" stroke-width="1.2"/></svg>
<div class="a" style="left:1429.6px;top:301.5px;width:174.6px;height:45.5px;border:1px solid #c4c7d8;border-right-color:#fafbfe;border-bottom-color:#fafbfe;box-shadow:inset 1px 1px 0 #d9dbe8;"></div>
<span class="t" style="left:1436.79px;top:305px;font-size:15px;color:#4a5072;transform-origin:50% 0;transform:scaleX(0.8805);">Décalage (Pixels,angle)</span>
<span class="t" style="left:1487.54px;top:323.5px;font-size:15.5px;color:#3b4160;font-weight:bold;transform-origin:50% 0;transform:scaleX(1.0458);">1.94  -88.06°</span>
<div class="a" style="left:1429.6px;top:349.6px;width:174.6px;height:45.4px;border:1px solid #c4c7d8;border-right-color:#fafbfe;border-bottom-color:#fafbfe;box-shadow:inset 1px 1px 0 #d9dbe8;"></div>
<span class="t" style="left:1453.46px;top:352px;font-size:15px;color:#4a5072;transform-origin:50% 0;transform:scaleX(0.8795);">Direction moyenne</span>
<span class="t" style="left:1498.9px;top:371px;font-size:15px;color:#4a5072;transform-origin:50% 0;transform:scaleX(0.8807);">298 °</span>
<div class="a" style="left:1429.6px;top:400.8px;width:174.6px;height:50px;border:1px solid #c4c7d8;border-right-color:#fafbfe;border-bottom-color:#fafbfe;box-shadow:inset 1px 1px 0 #d9dbe8;"></div>
<span class="t" style="left:1448.55px;top:404.5px;font-size:15px;color:#4a5072;transform-origin:50% 0;transform:scaleX(0.8670);">Erreur de suivi moyen</span>
<span class="t" style="left:1464.57px;top:426.5px;font-size:15.5px;color:#3b4160;font-weight:bold;transform-origin:50% 0;transform:scaleX(1.0206);">0.76 Pix  2.60"</span>
<div class="a" style="left:1429.6px;top:457.3px;width:174.6px;height:61.5px;border:1px solid #c4c7d8;border-right-color:#fafbfe;border-bottom-color:#fafbfe;box-shadow:inset 1px 1px 0 #d9dbe8;"></div>
<span class="t" style="left:1450.7px;top:458.5px;font-size:15px;color:#4a5072;transform-origin:50% 0;transform:scaleX(0.8898);">Moniteur de nuages</span>
<span class="t" style="left:1482.81px;top:478px;font-size:15px;color:#4a5072;transform-origin:50% 0;transform:scaleX(0.9067);">3191 ADU</span>
<span class="t" style="left:1477.07px;top:496px;font-size:15px;color:#4a5072;transform-origin:50% 0;transform:scaleX(0.8843);">64 ADU rms</span>
<div class="a" style="left:1415px;top:526.5px;width:71px;height:23px;background:linear-gradient(#f1f2f8,#dfe1ed 50%,#cdd1e2);border:1.5px solid #d4d7e5;border-radius:4px;box-shadow:inset 0 1px 0 #fff;"></div>
<span class="t" style="left:1426px;top:529.5px;font-size:15px;color:#111;transform-origin:0 0;transform:scaleX(0.8552);">Plus &gt;&gt;&gt;</span>
<div class="a" style="left:1495.8px;top:526.5px;width:97.2px;height:23px;background:linear-gradient(#e6e8f3,#d2d5e6 50%,#c4c8dc);border:1.5px solid #7f86a8;border-radius:6px;box-shadow:inset 0 1px 0 #fff;"></div>
<svg style="left:1505.5px;top:529px" width="20" height="18" viewBox="0 0 20 18"><path d="M1 7.2 H9 V3 L15.5 9 L9 15 V10.8 H1 Z" fill="#e81010"/><rect x="16.2" y="1" width="2.6" height="16" fill="#e81010"/></svg>
<span class="t" style="left:1531px;top:529.5px;font-size:15px;color:#111;transform-origin:0 0;transform:scaleX(0.8415);">Minimiser</span>
<div class="a" style="left:1172px;top:557px;width:46px;height:3px;background:#414a78;border-radius:3px 3px 0 0;"></div>
<!-- p_cam2 -->
<div class="a" style="left:1990.5px;top:79px;width:210px;height:574px;background:linear-gradient(#3b436f,#2b3159 24px);border-radius:3px 0 0 0;box-shadow:0 0 0 1px #1f2448;"></div>
<span class="t" style="left:2001px;top:82px;font-size:15px;color:#6a7299;transform-origin:0 0;transform:scaleX(0.9861);">Caméra n°2  -&gt;  19.1°C</span>
<div class="a" style="left:1996px;top:103.5px;width:200px;height:543px;background:#e7e9f2;"></div>
<div class="a" style="left:1996px;top:128.5px;width:200px;height:1px;background:#c3c6d6;"></div>
<div class="a" style="left:1998.4px;top:105px;width:114px;height:24.5px;background:#eceef6;border:1px solid #c9ccdb;border-bottom:none;border-radius:5px 5px 0 0;"></div>
<span class="t" style="left:2004.7px;top:107px;font-size:15px;color:#111;transform-origin:0 0;transform:scaleX(0.9155);">ZWO ASI385MC</span>
<span class="t" style="left:2006.6px;top:189px;font-size:15px;color:#4a5072;transform-origin:0 0;transform:scaleX(0.9119);">Temps: 1.7 sec</span>
<div class="a" style="left:2010px;top:222px;width:190px;height:1px;background:#c3c6d6;"></div>
<div class="a" style="left:2010px;top:223px;width:190px;height:1px;background:#f8f9fc;"></div>
<span class="t" style="left:2006px;top:231px;font-size:15px;color:#4a5072;transform-origin:0 0;transform:scaleX(0.8729);">Exp.(sec)</span>
<div class="a" style="left:2067px;top:229.7px;width:78px;height:22.3px;background:#fff;border:1px solid #b3b7cb;"></div>
<div class="a" style="left:2124px;top:230.7px;width:20px;height:20.3px;background:linear-gradient(#f0f1f7,#dcdfeb);border-left:1px solid #d5d8e5;"></div>
<svg style="left:2128px;top:229.7px" width="12" height="22.3" viewBox="0 0 12 22.3"><path d="M2.4 8.95 L6 5.35 L9.6 8.95 Z M2.4 13.35 L6 16.95 L9.6 13.35 Z" fill="#8b8fa8"/></svg>
<span class="t" style="left:2070.5px;top:231.725px;font-size:15px;color:#3b4160;transform-origin:0 0;transform:scaleX(0.9000);">5</span>
<span class="t" style="left:2155.5px;top:226px;font-size:15px;color:#9a9eb4;transform-origin:0 0;transform:scaleX(0.9000);">Bouclage</span>
<span class="t" style="left:2155.5px;top:248.5px;font-size:15px;color:#9a9eb4;transform-origin:0 0;transform:scaleX(0.9000);">Bouclage infini</span>
<span class="t" style="left:2006px;top:276px;font-size:15px;color:#4a5072;transform-origin:0 0;transform:scaleX(0.8879);">Nbre de boucles</span>
<div class="a" style="left:2107px;top:274.5px;width:65.7px;height:24px;background:#fff;border:1px solid #b3b7cb;"></div>
<div class="a" style="left:2151.7px;top:275.5px;width:20px;height:22px;background:linear-gradient(#f0f1f7,#dcdfeb);border-left:1px solid #d5d8e5;"></div>
<svg style="left:2155.7px;top:274.5px" width="12" height="24" viewBox="0 0 12 24"><path d="M1.4 9.8 L6 5.2 L10.6 9.8 Z M1.4 14.2 L6 18.8 L10.6 14.2 Z" fill="#111"/></svg>
<span class="t" style="left:2110.5px;top:277.375px;font-size:15px;color:#3b4160;transform-origin:0 0;transform:scaleX(0.9000);">10</span>
<span class="t" style="left:2180px;top:276px;font-size:15px;color:#4a5072;transform-origin:0 0;transform:scaleX(0.9000);">Délai</span>
<div class="a" style="left:2010px;top:306.2px;width:190px;height:1px;background:#c3c6d6;"></div>
<div class="a" style="left:2010px;top:307.2px;width:190px;height:1px;background:#f8f9fc;"></div>
<span class="t" style="left:2006px;top:316px;font-size:15px;color:#4a5072;transform-origin:0 0;transform:scaleX(0.8647);">BinX:</span>
<div class="a" style="left:2044.8px;top:315px;width:46.6px;height:24.3px;background:#fff;border:1px solid #b3b7cb;"></div>
<div class="a" style="left:2070.4px;top:316px;width:20px;height:22.3px;background:linear-gradient(#f0f1f7,#dcdfeb);border-left:1px solid #d5d8e5;"></div>
<svg style="left:2074.4px;top:315px" width="12" height="24.3" viewBox="0 0 12 24.3"><path d="M1.4 9.95 L6 5.35 L10.6 9.95 Z M1.4 14.35 L6 18.95 L10.6 14.35 Z" fill="#111"/></svg>
<span class="t" style="left:2048.3px;top:318.025px;font-size:15px;color:#3b4160;transform-origin:0 0;transform:scaleX(0.9000);">1</span>
<span class="t" style="left:2106.5px;top:316px;font-size:15px;color:#4a5072;transform-origin:0 0;transform:scaleX(0.8851);">BinY:</span>
<div class="a" style="left:2151.3px;top:315px;width:46.6px;height:24.3px;background:#fff;border:1px solid #b3b7cb;"></div>
<div class="a" style="left:2176.9px;top:316px;width:20px;height:22.3px;background:linear-gradient(#f0f1f7,#dcdfeb);border-left:1px solid #d5d8e5;"></div>
<svg style="left:2180.9px;top:315px" width="12" height="24.3" viewBox="0 0 12 24.3"><path d="M1.4 9.95 L6 5.35 L10.6 9.95 Z M1.4 14.35 L6 18.95 L10.6 14.35 Z" fill="#111"/></svg>
<span class="t" style="left:2154.8px;top:318.025px;font-size:15px;color:#3b4160;transform-origin:0 0;transform:scaleX(0.9000);">1</span>
<div class="a" style="left:2008.7px;top:348.5px;width:90.3px;height:34px;background:linear-gradient(#f1f2f8,#dfe1ed 50%,#cdd1e2);border:1.5px solid #c4c8d9;border-radius:6px;box-shadow:inset 0 1px 0 #fff;"></div>
<span class="t" style="left:2018.5px;top:357px;font-size:15px;color:#9a9eb4;transform-origin:0 0;transform:scaleX(0.8741);">Exp Longue</span>
<div class="a" style="left:2108.4px;top:348.5px;width:95px;height:34px;background:linear-gradient(#f1f2f8,#dfe1ed 50%,#cdd1e2);border:1.5px solid #c4c8d9;border-radius:6px;box-shadow:inset 0 1px 0 #fff;"></div>
<span class="t" style="left:2121px;top:357px;font-size:15px;color:#9a9eb4;transform-origin:0 0;transform:scaleX(0.9225);">Exp. courte</span>
<div class="a" style="left:2020.6px;top:386px;width:180px;height:18.4px;background:#000;border-radius:3px 0 0 3px;"></div>
<span class="t" style="left:2112.6px;top:386px;font-size:15px;color:#fff;transform-origin:0 0;transform:scaleX(0.9600);">Caméra n°2</span>
<div class="a" style="left:2000.7px;top:429.5px;width:200px;height:173px;background:#eef0f7;border:1px solid #b9bdd0;"></div>
<div class="a" style="left:2003px;top:406.4px;width:83.5px;height:23.6px;background:linear-gradient(#e4e6f0,#d0d3e2);border:1px solid #b0b4c8;border-bottom:none;border-radius:5px 5px 0 0;"></div>
<span class="t" style="left:2011px;top:408.5px;font-size:15px;color:#4a5072;transform-origin:0 0;transform:scaleX(0.8643);">Temp. CCD</span>
<div class="a" style="left:2087px;top:406.4px;width:58px;height:23.6px;background:linear-gradient(#e4e6f0,#d0d3e2);border:1px solid #b0b4c8;border-bottom:none;border-radius:5px 5px 0 0;"></div>
<span class="t" style="left:2094.5px;top:408.5px;font-size:15px;color:#4a5072;transform-origin:0 0;transform:scaleX(0.8511);">Options</span>
<div class="a" style="left:2146px;top:403.5px;width:60px;height:27px;background:#eef0f7;border:1px solid #b9bdd0;border-bottom:none;border-radius:5px 5px 0 0;"></div>
<span class="t" style="left:2154.5px;top:407.5px;font-size:15px;color:#111;transform-origin:0 0;transform:scaleX(0.9000);">Guidage</span>
<div class="a" style="left:2011px;top:439.5px;width:149px;height:30.5px;background:linear-gradient(#f1f2f8,#dfe1ed 50%,#cdd1e2);border:1.5px solid #cfd2e0;border-radius:5px;box-shadow:inset 0 1px 0 #fff;"></div>
<span class="t" style="left:2050.14px;top:446px;font-size:15px;color:#9a9eb4;transform-origin:50% 0;transform:scaleX(0.8646);">Calibration</span>
<div class="a" style="left:2166.6px;top:439.5px;width:60px;height:30.5px;background:linear-gradient(#f1f2f8,#dfe1ed 50%,#cdd1e2);border:1.5px solid #cfd2e0;border-radius:5px;box-shadow:inset 0 1px 0 #fff;"></div>
<div class="a" style="left:2011px;top:476px;width:149px;height:30px;background:linear-gradient(#f1f2f8,#dfe1ed 50%,#cdd1e2);border:1.5px solid #cfd2e0;border-radius:5px;box-shadow:inset 0 1px 0 #fff;"></div>
<span class="t" style="left:2023.88px;top:482px;font-size:15px;color:#9a9eb4;transform-origin:50% 0;transform:scaleX(0.8693);">Démarrer Guidage</span>
<div class="a" style="left:2011px;top:507.6px;width:149px;height:29px;background:linear-gradient(#f1f2f8,#dfe1ed 50%,#cdd1e2);border:1.5px solid #cfd2e0;border-radius:5px;box-shadow:inset 0 1px 0 #fff;"></div>
<span class="t" style="left:2055.97px;top:513px;font-size:15px;color:#111;transform-origin:50% 0;transform:scaleX(0.9157);">Abandon</span>
<span class="t" style="left:2011px;top:574.5px;font-size:15px;color:#4a5072;font-weight:bold;transform-origin:0 0;transform:scaleX(0.9213);">Port de guidage : ASCOM contrôle</span>
<div class="a" style="left:1997.3px;top:608.7px;width:220px;height:36.5px;background:linear-gradient(#f1f2f8,#dfe1ed 50%,#cdd1e2);border:1.5px solid #a9aec6;border-radius:6px;box-shadow:inset 0 1px 0 #fff;"></div>
<svg style="left:2117px;top:618px" width="20" height="18" viewBox="0 0 20 18"><path d="M1 7.2 H9 V3 L15.5 9 L9 15 V10.8 H1 Z" fill="#e81010"/><rect x="16.2" y="1" width="2.6" height="16" fill="#e81010"/></svg>
<span class="t" style="left:2142px;top:618.5px;font-size:15px;color:#111;transform-origin:0 0;transform:scaleX(0.8415);">Minimiser</span>
<!-- p_cam1 -->
<div class="a" style="left:1921px;top:673px;width:280px;height:572.5px;background:linear-gradient(#3b436f,#2b3159 24px);border-radius:3px 0 0 0;box-shadow:0 0 0 1px #1f2448;"></div>
<span class="t" style="left:1931.3px;top:676px;font-size:15px;color:#5d6592;transform-origin:0 0;transform:scaleX(0.9930);">Caméra n°1  -&gt;  -20.0°C  [73% , -20.0°C]</span>
<div class="a" style="left:1927.5px;top:697.5px;width:270px;height:541.5px;background:#e7e9f2;"></div>
<div class="a" style="left:1927.5px;top:722px;width:270px;height:1px;background:#c3c6d6;"></div>
<div class="a" style="left:1929px;top:698.5px;width:72px;height:24px;background:#eceef6;border:1px solid #c9ccdb;border-bottom:none;border-radius:5px 5px 0 0;"></div>
<span class="t" style="left:1936px;top:701px;font-size:15px;color:#111;transform-origin:0 0;transform:scaleX(0.8992);">G3-11000</span>
<div class="a" style="left:1932.7px;top:729.8px;width:151.3px;height:45.8px;background:linear-gradient(#f1f2f8,#dfe1ed 50%,#cdd1e2);border:1.5px solid #9096b2;border-radius:6px;box-shadow:inset 0 1px 0 #fff;"></div>
<span class="t" style="left:1965.08px;top:744px;font-size:15px;color:#111;transform-origin:50% 0;transform:scaleX(0.8971);">DEMARRER</span>
<div class="a" style="left:2088.8px;top:729.8px;width:151px;height:45.8px;background:linear-gradient(#f1f2f8,#dfe1ed 50%,#cdd1e2);border:1.5px solid #c4c8d9;border-radius:6px;box-shadow:inset 0 1px 0 #fff;"></div>
<span class="t" style="left:2115px;top:744px;font-size:15px;color:#9a9eb4;transform-origin:0 0;transform:scaleX(0.9572);">ABANDON</span>
<span class="t" style="left:1936px;top:782.5px;font-size:15px;color:#4a5072;transform-origin:0 0;transform:scaleX(0.8686);">Temps:</span>
<div class="a" style="left:1938px;top:814.5px;width:262px;height:1px;background:#c3c6d6;"></div>
<div class="a" style="left:1938px;top:815.5px;width:262px;height:1px;background:#f8f9fc;"></div>
<span class="t" style="left:1936px;top:824.5px;font-size:15px;color:#4a5072;transform-origin:0 0;transform:scaleX(0.8524);">Exp.(sec)</span>
<div class="a" style="left:1997.8px;top:822.8px;width:73.2px;height:22.6px;background:#fff;border:1px solid #b3b7cb;"></div>
<div class="a" style="left:2051px;top:823.8px;width:19px;height:20.6px;background:linear-gradient(#f0f1f7,#dcdfeb);border-left:1px solid #d5d8e5;"></div>
<svg style="left:2054.5px;top:822.8px" width="12" height="22.6" viewBox="0 0 12 22.6"><path d="M2.4 9.1 L6 5.5 L9.6 9.1 Z M2.4 13.5 L6 17.1 L9.6 13.5 Z" fill="#8b8fa8"/></svg>
<span class="t" style="left:2001.3px;top:824.975px;font-size:15px;color:#3b4160;transform-origin:0 0;transform:scaleX(0.9000);">10</span>
<span class="t" style="left:2085.4px;top:820px;font-size:15px;color:#111;transform-origin:0 0;transform:scaleX(0.8952);">Bouclage</span>
<div class="a" style="left:2179px;top:820px;width:16px;height:16px;background:#fff;border:1px solid #b4b8cc;border-radius:3px;"></div>
<span class="t" style="left:2085.4px;top:842.5px;font-size:15px;color:#111;transform-origin:0 0;transform:scaleX(0.8814);">Bouclage infini</span>
<div class="a" style="left:2179px;top:843px;width:16px;height:16px;background:#fff;border:1px solid #b4b8cc;border-radius:3px;"></div>
<span class="t" style="left:1936px;top:869.5px;font-size:15px;color:#4a5072;transform-origin:0 0;transform:scaleX(0.8879);">Nbre de boucles</span>
<div class="a" style="left:2037.3px;top:868px;width:62.6px;height:22.2px;background:#fff;border:1px solid #b3b7cb;"></div>
<div class="a" style="left:2078.9px;top:869px;width:20px;height:20.2px;background:linear-gradient(#f0f1f7,#dcdfeb);border-left:1px solid #d5d8e5;"></div>
<svg style="left:2082.9px;top:868px" width="12" height="22.2" viewBox="0 0 12 22.2"><path d="M1.4 8.9 L6 4.3 L10.6 8.9 Z M1.4 13.3 L6 17.9 L10.6 13.3 Z" fill="#111"/></svg>
<span class="t" style="left:2040.8px;top:869.975px;font-size:15px;color:#3b4160;transform-origin:0 0;transform:scaleX(0.9000);">10</span>
<span class="t" style="left:2111px;top:869.5px;font-size:15px;color:#4a5072;transform-origin:0 0;transform:scaleX(0.8416);">Délai (s)</span>
<div class="a" style="left:2168px;top:868px;width:40px;height:22.2px;background:#fff;border:1px solid #b3b7cb;"></div>
<span class="t" style="left:2173px;top:870px;font-size:15px;color:#3b4160;transform-origin:0 0;transform:scaleX(0.9000);">1</span>
<div class="a" style="left:1938px;top:900.3px;width:262px;height:1px;background:#c3c6d6;"></div>
<div class="a" style="left:1938px;top:901.3px;width:262px;height:1px;background:#f8f9fc;"></div>
<span class="t" style="left:1936px;top:911px;font-size:15px;color:#4a5072;transform-origin:0 0;transform:scaleX(0.8926);">BinX:</span>
<div class="a" style="left:1974.6px;top:909px;width:46.8px;height:22px;background:#fff;border:1px solid #b3b7cb;"></div>
<div class="a" style="left:2000.4px;top:910px;width:20px;height:20px;background:linear-gradient(#f0f1f7,#dcdfeb);border-left:1px solid #d5d8e5;"></div>
<svg style="left:2004.4px;top:909px" width="12" height="22" viewBox="0 0 12 22"><path d="M1.4 8.8 L6 4.2 L10.6 8.8 Z M1.4 13.2 L6 17.8 L10.6 13.2 Z" fill="#111"/></svg>
<span class="t" style="left:1978.1px;top:910.875px;font-size:15px;color:#3b4160;transform-origin:0 0;transform:scaleX(0.9000);">2</span>
<span class="t" style="left:2037.3px;top:911px;font-size:15px;color:#4a5072;transform-origin:0 0;transform:scaleX(0.8851);">BinY:</span>
<div class="a" style="left:2080.6px;top:909px;width:46.7px;height:22px;background:#fff;border:1px solid #b3b7cb;"></div>
<div class="a" style="left:2106.3px;top:910px;width:20px;height:20px;background:linear-gradient(#f0f1f7,#dcdfeb);border-left:1px solid #d5d8e5;"></div>
<svg style="left:2110.3px;top:909px" width="12" height="22" viewBox="0 0 12 22"><path d="M1.4 8.8 L6 4.2 L10.6 8.8 Z M1.4 13.2 L6 17.8 L10.6 13.2 Z" fill="#111"/></svg>
<span class="t" style="left:2084.1px;top:910.875px;font-size:15px;color:#3b4160;transform-origin:0 0;transform:scaleX(0.9000);">2</span>
<div class="a" style="left:2151.4px;top:912px;width:15.5px;height:15.5px;background:linear-gradient(#f09a6e,#e86a34);border:1px solid #c85a2a;border-radius:3px;"></div>
<svg style="left:2153px;top:914px" width="12" height="12"><path d="M2 6 L5 9.5 L10 2.5" stroke="#5a2410" stroke-width="1.8" fill="none"/></svg>
<span class="t" style="left:2173px;top:911px;font-size:15px;color:#111;transform-origin:0 0;transform:scaleX(0.9000);">Lier</span>
<div class="a" style="left:1938.5px;top:942.7px;width:90.5px;height:32.7px;background:linear-gradient(#f1f2f8,#dfe1ed 50%,#cdd1e2);border:1.5px solid #9096b2;border-radius:6px;box-shadow:inset 0 1px 0 #fff;"></div>
<span class="t" style="left:1943.66px;top:950.5px;font-size:15px;color:#111;transform-origin:50% 0;transform:scaleX(0.8866);">Exp Longue</span>
<div class="a" style="left:2038.7px;top:942.7px;width:90.1px;height:32.7px;background:linear-gradient(#f1f2f8,#dfe1ed 50%,#cdd1e2);border:1.5px solid #9096b2;border-radius:6px;box-shadow:inset 0 1px 0 #fff;"></div>
<span class="t" style="left:2045.76px;top:950.5px;font-size:15px;color:#111;transform-origin:50% 0;transform:scaleX(0.8962);">Exp. courte</span>
<div class="a" style="left:2138.4px;top:942.7px;width:90px;height:32.7px;background:linear-gradient(#f1f2f8,#dfe1ed 50%,#cdd1e2);border:1.5px solid #9096b2;border-radius:6px;box-shadow:inset 0 1px 0 #fff;"></div>
<span class="t" style="left:2153px;top:950.5px;font-size:15px;color:#111;transform-origin:0 0;transform:scaleX(0.9000);">Sequence</span>
<div class="a" style="left:1950.6px;top:980.3px;width:250px;height:17.7px;background:#000;border-radius:3px 0 0 3px;"></div>
<span class="t" style="left:2043px;top:980px;font-size:15px;color:#fff;transform-origin:0 0;transform:scaleX(0.9350);">Caméra n°1</span>
<div class="a" style="left:1931.3px;top:1021.5px;width:270px;height:185.5px;background:#eef0f7;border:1px solid #b9bdd0;"></div>
<div class="a" style="left:1932.7px;top:1000.5px;width:74.5px;height:21.5px;background:linear-gradient(#e4e6f0,#d0d3e2);border:1px solid #b0b4c8;border-bottom:none;border-radius:5px 5px 0 0;"></div>
<span class="t" style="left:1940.5px;top:1002px;font-size:15px;color:#4a5072;transform-origin:0 0;transform:scaleX(0.8773);">Fenêtrage</span>
<div class="a" style="left:2008px;top:1000.5px;width:59.6px;height:21.5px;background:linear-gradient(#e4e6f0,#d0d3e2);border:1px solid #b0b4c8;border-bottom:none;border-radius:5px 5px 0 0;"></div>
<span class="t" style="left:2016.5px;top:1002px;font-size:15px;color:#4a5072;transform-origin:0 0;transform:scaleX(0.8247);">Caméra</span>
<div class="a" style="left:2068px;top:997.5px;width:83.4px;height:25px;background:#eef0f7;border:1px solid #b9bdd0;border-bottom:none;border-radius:5px 5px 0 0;"></div>
<span class="t" style="left:2076px;top:1000px;font-size:15px;color:#111;transform-origin:0 0;transform:scaleX(0.8772);">Temp. CCD</span>
<div class="a" style="left:2152px;top:1000.5px;width:60px;height:21.5px;background:linear-gradient(#e4e6f0,#d0d3e2);border:1px solid #b0b4c8;border-bottom:none;border-radius:5px 5px 0 0;"></div>
<span class="t" style="left:2160px;top:1002px;font-size:15px;color:#4a5072;transform-origin:0 0;transform:scaleX(0.9000);">Roue</span>
<span class="t" style="left:1942px;top:1031.5px;font-size:15px;color:#4a5072;transform-origin:0 0;transform:scaleX(0.8729);">Temperature CCD: -19.98°C (Ext=13.48°C)</span>
<span class="t" style="left:1942px;top:1059px;font-size:15px;color:#4a5072;transform-origin:0 0;transform:scaleX(0.8648);">Temp. CCD requise (°C)</span>
<div class="a" style="left:2089.3px;top:1057.3px;width:58.7px;height:21.7px;background:#fff;border:1px solid #b3b7cb;"></div>
<div class="a" style="left:2128px;top:1058.3px;width:19px;height:19.7px;background:linear-gradient(#f0f1f7,#dcdfeb);border-left:1px solid #d5d8e5;"></div>
<svg style="left:2131.5px;top:1057.3px" width="12" height="21.7" viewBox="0 0 12 21.7"><path d="M2.4 8.65 L6 5.05 L9.6 8.65 Z M2.4 13.05 L6 16.65 L9.6 13.05 Z" fill="#8b8fa8"/></svg>
<span class="t" style="left:2092.8px;top:1059.02px;font-size:15px;color:#3b4160;transform-origin:0 0;transform:scaleX(0.9000);">-20</span>
<div class="a" style="left:2162.5px;top:1057px;width:50px;height:22px;background:linear-gradient(#f1f2f8,#dfe1ed 50%,#cdd1e2);border:1.5px solid #9096b2;border-radius:5px;box-shadow:inset 0 1px 0 #fff;"></div>
<span class="t" style="left:2172px;top:1059px;font-size:15px;color:#111;transform-origin:0 0;transform:scaleX(0.9000);">Appliquer</span>
<span class="t" style="left:1942px;top:1089.5px;font-size:15px;color:#4a5072;transform-origin:0 0;transform:scaleX(0.8589);">Puissance refroidissement (%) : 73</span>
<span class="t" style="left:1942px;top:1114.5px;font-size:15px;color:#4a5072;transform-origin:0 0;transform:scaleX(0.8692);">Consigne de température : -20.0 °C</span>
<span class="t" style="left:1944.3px;top:1138.5px;font-size:15px;color:#111;transform-origin:0 0;transform:scaleX(0.8854);">Activer réchauffage fenêtre CCD</span>
<div class="a" style="left:2171px;top:1139.5px;width:16px;height:16px;background:#fff;border:1px solid #b4b8cc;border-radius:3px;"></div>
<div class="a" style="left:1942.4px;top:1169.5px;width:67px;height:21.7px;background:linear-gradient(#f1f2f8,#dfe1ed 50%,#cdd1e2);border:1.5px solid #9096b2;border-radius:5px;box-shadow:inset 0 1px 0 #fff;"></div>
<span class="t" style="left:1956.41px;top:1171px;font-size:15px;color:#111;transform-origin:50% 0;transform:scaleX(0.8931);">Editer</span>
<div class="a" style="left:2017px;top:1169.5px;width:67px;height:21.7px;background:linear-gradient(#f1f2f8,#dfe1ed 50%,#cdd1e2);border:1.5px solid #c4c8d9;border-radius:5px;box-shadow:inset 0 1px 0 #fff;"></div>
<span class="t" style="left:2035.07px;top:1171px;font-size:15px;color:#9a9eb4;transform-origin:50% 0;transform:scaleX(0.8749);">Stop</span>
<div class="a" style="left:2091.7px;top:1169.5px;width:66px;height:21.7px;background:linear-gradient(#f1f2f8,#dfe1ed 50%,#cdd1e2);border:1.5px solid #9096b2;border-radius:5px;box-shadow:inset 0 1px 0 #fff;"></div>
<span class="t" style="left:2097.18px;top:1171px;font-size:15px;color:#111;transform-origin:50% 0;transform:scaleX(0.8904);">Descen.</span>
<div class="a" style="left:2166.3px;top:1169.5px;width:60px;height:21.7px;background:linear-gradient(#f1f2f8,#dfe1ed 50%,#cdd1e2);border:1.5px solid #9096b2;border-radius:5px;box-shadow:inset 0 1px 0 #fff;"></div>
<span class="t" style="left:2180px;top:1171px;font-size:15px;color:#111;transform-origin:0 0;transform:scaleX(0.9000);">Monter</span>
<div class="a" style="left:1926.5px;top:1203.2px;width:290px;height:36.2px;background:linear-gradient(#f1f2f8,#dfe1ed 50%,#cdd1e2);border:1.5px solid #a9aec6;border-radius:6px;box-shadow:inset 0 1px 0 #fff;"></div>
<svg style="left:2047.5px;top:1212.5px" width="20" height="18" viewBox="0 0 20 18"><path d="M1 7.2 H9 V3 L15.5 9 L9 15 V10.8 H1 Z" fill="#e81010"/><rect x="16.2" y="1" width="2.6" height="16" fill="#e81010"/></svg>
<span class="t" style="left:2072.4px;top:1213px;font-size:15px;color:#111;transform-origin:0 0;transform:scaleX(0.8493);">Minimiser</span>
</body></html>
